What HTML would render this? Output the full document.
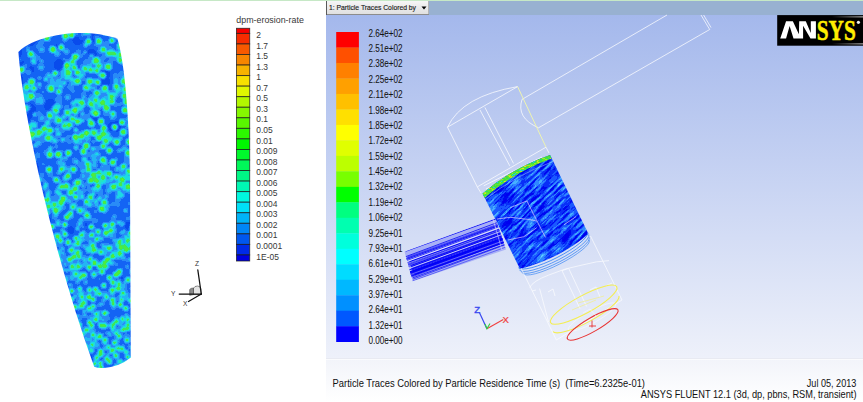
<!DOCTYPE html><html><head><meta charset="utf-8"><style>
html,body{margin:0;padding:0;background:#fff;width:863px;height:402px;overflow:hidden}
svg{display:block;position:absolute;left:0;top:0}
text{font-family:"Liberation Sans",sans-serif}
</style></head><body>
<svg width="863" height="402" viewBox="0 0 863 402">
<defs>
<linearGradient id="bg" x1="0" y1="15" x2="0" y2="359" gradientUnits="userSpaceOnUse"><stop offset="0" stop-color="#a4b8ec"/><stop offset="1" stop-color="#eef1fa"/></linearGradient>
<linearGradient id="bg2" x1="0" y1="359" x2="0" y2="402" gradientUnits="userSpaceOnUse"><stop offset="0" stop-color="#f2f4fa"/><stop offset="1" stop-color="#ffffff"/></linearGradient>
<linearGradient id="dd" x1="0" y1="0" x2="0" y2="1"><stop offset="0" stop-color="#f6f6f6"/><stop offset="1" stop-color="#dedede"/></linearGradient>
<linearGradient id="logoR" x1="0" y1="0" x2="1" y2="0"><stop offset="0" stop-color="#000"/><stop offset="1" stop-color="#777"/></linearGradient>
<clipPath id="cyl"><path d="M18.4,52 C33,36 82,26 117.4,38.7 C124,60 129,110 130,180 L130.8,357.5 Q120,366.5 104,368 Q97,368.3 94.2,366.8 C52,250 23,115 18.4,52 Z"/></clipPath>
</defs>
<rect x="0" y="0" width="863" height="1" fill="#c6e8c6"/>
<filter id="ero" x="0" y="0" width="863" height="402" filterUnits="userSpaceOnUse" color-interpolation-filters="sRGB"><feGaussianBlur stdDeviation="0.9"/><feColorMatrix type="matrix" values="1 0 0 0 0 1 0 0 0 0 1 0 0 0 0 0 0 0 0 1"/><feComponentTransfer><feFuncR type="discrete" tableValues="0.0235 0.0392 0.0784 0.1647 0.1412 0.1098 0.1490 0.2431 0.3137 0.4392"/><feFuncG type="discrete" tableValues="0.2118 0.2980 0.3922 0.5490 0.7059 0.8627 0.9020 0.9098 0.9333 0.9412"/><feFuncB type="discrete" tableValues="0.8863 0.9255 0.9569 0.9725 0.9569 0.8941 0.7529 0.3529 0.2196 0.1569"/></feComponentTransfer></filter>
<g clip-path="url(#cyl)"><g filter="url(#ero)">
<rect x="0" y="20" width="140" height="360" fill="#3f3f3f"/>
<circle cx="91.4" cy="54.6" r="5.7" fill="#212121"/>
<circle cx="55.7" cy="49.7" r="5.5" fill="#212121"/>
<circle cx="14.7" cy="177.4" r="3.2" fill="#212121"/>
<circle cx="21.3" cy="174.3" r="6.8" fill="#212121"/>
<circle cx="25.5" cy="105.9" r="6.1" fill="#212121"/>
<circle cx="128.5" cy="226.2" r="4.4" fill="#212121"/>
<circle cx="117.3" cy="128.5" r="3.7" fill="#212121"/>
<circle cx="17.8" cy="50.3" r="4.0" fill="#212121"/>
<circle cx="49.3" cy="229.1" r="4.6" fill="#212121"/>
<circle cx="119.4" cy="278.0" r="3.5" fill="#212121"/>
<circle cx="132.5" cy="70.1" r="5.1" fill="#212121"/>
<circle cx="104.6" cy="81.7" r="5.4" fill="#212121"/>
<circle cx="14.9" cy="257.2" r="5.6" fill="#212121"/>
<circle cx="84.3" cy="227.2" r="4.6" fill="#212121"/>
<circle cx="112.7" cy="126.8" r="4.9" fill="#212121"/>
<circle cx="93.6" cy="37.7" r="5.3" fill="#212121"/>
<circle cx="31.0" cy="69.8" r="3.3" fill="#212121"/>
<circle cx="106.0" cy="74.0" r="4.2" fill="#212121"/>
<circle cx="20.1" cy="182.7" r="5.4" fill="#212121"/>
<circle cx="118.0" cy="124.7" r="5.1" fill="#212121"/>
<circle cx="32.0" cy="108.9" r="4.2" fill="#212121"/>
<circle cx="70.6" cy="230.3" r="3.7" fill="#212121"/>
<circle cx="10.5" cy="172.4" r="4.7" fill="#212121"/>
<circle cx="59.9" cy="65.2" r="6.2" fill="#212121"/>
<circle cx="17.8" cy="52.9" r="4.0" fill="#212121"/>
<circle cx="16.6" cy="30.1" r="3.8" fill="#212121"/>
<circle cx="22.7" cy="153.6" r="3.1" fill="#212121"/>
<circle cx="28.6" cy="115.8" r="4.7" fill="#212121"/>
<circle cx="20.7" cy="64.7" r="4.7" fill="#212121"/>
<circle cx="30.2" cy="37.9" r="7.8" fill="#212121"/>
<circle cx="77.9" cy="39.2" r="5.6" fill="#212121"/>
<circle cx="97.0" cy="118.8" r="4.8" fill="#212121"/>
<circle cx="51.2" cy="105.8" r="7.1" fill="#212121"/>
<path d="M18.4,52 C23,115 52,250 94.2,366.8" stroke="#212121" stroke-width="2.5" fill="none"/>
<circle cx="38.3" cy="206.0" r="2.9" fill="#5b5b5b"/>
<circle cx="108.8" cy="190.6" r="2.9" fill="#757575"/>
<circle cx="129.4" cy="154.0" r="2.2" fill="#5b5b5b"/>
<circle cx="34.9" cy="332.3" r="1.4" fill="#757575"/>
<circle cx="110.1" cy="360.4" r="1.8" fill="#5b5b5b"/>
<circle cx="69.3" cy="348.7" r="1.1" fill="#757575"/>
<circle cx="11.8" cy="360.1" r="1.8" fill="#757575"/>
<circle cx="27.4" cy="365.4" r="0.9" fill="#5b5b5b"/>
<circle cx="17.6" cy="281.6" r="1.9" fill="#757575"/>
<circle cx="12.3" cy="179.6" r="2.7" fill="#5b5b5b"/>
<circle cx="120.4" cy="49.3" r="2.8" fill="#5b5b5b"/>
<circle cx="124.1" cy="180.7" r="2.4" fill="#757575"/>
<circle cx="34.9" cy="124.2" r="2.3" fill="#5b5b5b"/>
<circle cx="90.4" cy="154.5" r="3.1" fill="#5b5b5b"/>
<circle cx="37.4" cy="353.9" r="1.1" fill="#5b5b5b"/>
<circle cx="93.5" cy="106.1" r="2.1" fill="#757575"/>
<circle cx="62.7" cy="151.2" r="1.4" fill="#5b5b5b"/>
<circle cx="79.3" cy="179.8" r="2.2" fill="#5b5b5b"/>
<circle cx="46.9" cy="356.7" r="2.1" fill="#5b5b5b"/>
<circle cx="23.1" cy="120.3" r="1.9" fill="#5b5b5b"/>
<circle cx="112.4" cy="117.9" r="2.4" fill="#757575"/>
<circle cx="97.6" cy="60.4" r="1.7" fill="#757575"/>
<circle cx="121.9" cy="121.4" r="2.8" fill="#5b5b5b"/>
<circle cx="20.5" cy="321.1" r="1.6" fill="#5b5b5b"/>
<circle cx="39.8" cy="67.2" r="1.7" fill="#5b5b5b"/>
<circle cx="126.5" cy="243.7" r="1.6" fill="#5b5b5b"/>
<circle cx="12.3" cy="115.2" r="2.3" fill="#757575"/>
<circle cx="132.3" cy="204.8" r="1.4" fill="#5b5b5b"/>
<circle cx="112.4" cy="176.9" r="3.0" fill="#5b5b5b"/>
<circle cx="34.8" cy="329.9" r="1.5" fill="#5b5b5b"/>
<circle cx="53.4" cy="48.5" r="2.5" fill="#5b5b5b"/>
<circle cx="120.0" cy="176.5" r="2.8" fill="#757575"/>
<circle cx="118.8" cy="258.0" r="2.2" fill="#5b5b5b"/>
<circle cx="15.7" cy="93.0" r="1.9" fill="#5b5b5b"/>
<circle cx="130.2" cy="360.7" r="0.9" fill="#5b5b5b"/>
<circle cx="120.3" cy="104.1" r="2.1" fill="#5b5b5b"/>
<circle cx="69.3" cy="200.9" r="2.6" fill="#757575"/>
<circle cx="21.4" cy="307.8" r="1.1" fill="#757575"/>
<circle cx="12.8" cy="133.4" r="3.1" fill="#757575"/>
<circle cx="100.1" cy="198.0" r="2.4" fill="#757575"/>
<circle cx="27.4" cy="208.1" r="2.6" fill="#5b5b5b"/>
<circle cx="83.0" cy="333.6" r="1.8" fill="#757575"/>
<circle cx="40.6" cy="119.7" r="2.7" fill="#5b5b5b"/>
<circle cx="18.3" cy="280.5" r="2.3" fill="#5b5b5b"/>
<circle cx="39.3" cy="287.2" r="2.4" fill="#757575"/>
<circle cx="90.3" cy="56.3" r="2.6" fill="#5b5b5b"/>
<circle cx="96.6" cy="241.2" r="1.3" fill="#5b5b5b"/>
<circle cx="68.1" cy="188.6" r="1.6" fill="#757575"/>
<circle cx="132.3" cy="348.3" r="1.0" fill="#5b5b5b"/>
<circle cx="89.0" cy="125.1" r="1.8" fill="#5b5b5b"/>
<circle cx="122.2" cy="195.3" r="2.9" fill="#5b5b5b"/>
<circle cx="62.0" cy="157.9" r="1.4" fill="#5b5b5b"/>
<circle cx="103.8" cy="315.3" r="1.9" fill="#5b5b5b"/>
<circle cx="59.1" cy="369.6" r="1.9" fill="#5b5b5b"/>
<circle cx="104.5" cy="320.4" r="2.1" fill="#5b5b5b"/>
<circle cx="45.7" cy="348.1" r="1.5" fill="#5b5b5b"/>
<circle cx="60.0" cy="327.7" r="1.9" fill="#5b5b5b"/>
<circle cx="16.2" cy="279.0" r="2.0" fill="#5b5b5b"/>
<circle cx="25.9" cy="190.5" r="1.7" fill="#5b5b5b"/>
<circle cx="102.3" cy="252.0" r="1.6" fill="#5b5b5b"/>
<circle cx="79.7" cy="164.1" r="1.5" fill="#5b5b5b"/>
<circle cx="72.6" cy="306.0" r="2.2" fill="#5b5b5b"/>
<circle cx="134.6" cy="183.0" r="1.7" fill="#5b5b5b"/>
<circle cx="31.8" cy="219.0" r="1.7" fill="#5b5b5b"/>
<circle cx="81.2" cy="331.7" r="1.5" fill="#5b5b5b"/>
<circle cx="103.2" cy="101.4" r="2.3" fill="#5b5b5b"/>
<circle cx="21.6" cy="334.9" r="1.5" fill="#757575"/>
<circle cx="41.1" cy="67.1" r="3.1" fill="#757575"/>
<circle cx="115.8" cy="334.3" r="1.0" fill="#5b5b5b"/>
<circle cx="25.7" cy="223.6" r="1.7" fill="#757575"/>
<circle cx="97.3" cy="68.1" r="3.1" fill="#757575"/>
<circle cx="40.3" cy="208.9" r="2.8" fill="#5b5b5b"/>
<circle cx="98.1" cy="134.5" r="3.0" fill="#5b5b5b"/>
<circle cx="90.9" cy="57.6" r="3.1" fill="#5b5b5b"/>
<circle cx="62.6" cy="262.1" r="2.2" fill="#5b5b5b"/>
<circle cx="49.0" cy="308.8" r="1.4" fill="#5b5b5b"/>
<circle cx="86.3" cy="334.8" r="1.0" fill="#757575"/>
<circle cx="84.4" cy="343.5" r="2.1" fill="#5b5b5b"/>
<circle cx="27.7" cy="47.6" r="2.2" fill="#5b5b5b"/>
<circle cx="99.0" cy="136.8" r="3.1" fill="#5b5b5b"/>
<circle cx="53.9" cy="354.9" r="1.4" fill="#5b5b5b"/>
<circle cx="21.0" cy="269.8" r="2.4" fill="#757575"/>
<circle cx="105.8" cy="43.8" r="2.8" fill="#5b5b5b"/>
<circle cx="17.8" cy="96.3" r="2.0" fill="#757575"/>
<circle cx="44.0" cy="355.6" r="1.8" fill="#5b5b5b"/>
<circle cx="96.2" cy="344.2" r="1.9" fill="#757575"/>
<circle cx="124.6" cy="245.6" r="2.4" fill="#5b5b5b"/>
<circle cx="23.4" cy="273.3" r="2.2" fill="#5b5b5b"/>
<circle cx="124.2" cy="307.0" r="1.3" fill="#5b5b5b"/>
<circle cx="106.6" cy="236.5" r="1.9" fill="#5b5b5b"/>
<circle cx="59.0" cy="84.4" r="1.5" fill="#757575"/>
<circle cx="120.4" cy="365.9" r="1.1" fill="#5b5b5b"/>
<circle cx="46.7" cy="125.0" r="2.7" fill="#5b5b5b"/>
<circle cx="29.2" cy="330.6" r="1.1" fill="#5b5b5b"/>
<circle cx="91.2" cy="64.2" r="1.6" fill="#5b5b5b"/>
<circle cx="124.3" cy="43.7" r="1.5" fill="#5b5b5b"/>
<circle cx="85.1" cy="311.5" r="1.5" fill="#5b5b5b"/>
<circle cx="118.3" cy="182.7" r="2.9" fill="#757575"/>
<circle cx="37.2" cy="155.4" r="3.2" fill="#5b5b5b"/>
<circle cx="111.8" cy="308.4" r="1.3" fill="#5b5b5b"/>
<circle cx="78.5" cy="51.5" r="2.6" fill="#5b5b5b"/>
<circle cx="59.7" cy="122.2" r="2.0" fill="#757575"/>
<circle cx="134.6" cy="153.7" r="2.1" fill="#757575"/>
<circle cx="127.7" cy="177.6" r="2.7" fill="#5b5b5b"/>
<circle cx="60.8" cy="330.2" r="1.1" fill="#5b5b5b"/>
<circle cx="102.2" cy="88.4" r="2.3" fill="#5b5b5b"/>
<circle cx="110.6" cy="358.7" r="1.9" fill="#5b5b5b"/>
<circle cx="15.4" cy="340.4" r="2.1" fill="#757575"/>
<circle cx="58.5" cy="337.4" r="1.8" fill="#5b5b5b"/>
<circle cx="117.1" cy="241.2" r="2.5" fill="#5b5b5b"/>
<circle cx="74.7" cy="160.4" r="3.1" fill="#5b5b5b"/>
<circle cx="112.0" cy="95.5" r="1.5" fill="#757575"/>
<circle cx="78.8" cy="243.2" r="1.7" fill="#5b5b5b"/>
<circle cx="72.9" cy="90.8" r="2.2" fill="#5b5b5b"/>
<circle cx="114.6" cy="305.6" r="1.2" fill="#5b5b5b"/>
<circle cx="20.3" cy="279.4" r="1.2" fill="#757575"/>
<circle cx="104.0" cy="334.3" r="1.0" fill="#5b5b5b"/>
<circle cx="95.8" cy="275.2" r="2.0" fill="#5b5b5b"/>
<circle cx="123.1" cy="185.2" r="1.7" fill="#5b5b5b"/>
<circle cx="42.9" cy="202.0" r="1.6" fill="#5b5b5b"/>
<circle cx="60.4" cy="246.4" r="2.5" fill="#5b5b5b"/>
<circle cx="31.1" cy="296.9" r="1.1" fill="#757575"/>
<circle cx="117.3" cy="358.5" r="1.6" fill="#757575"/>
<circle cx="43.1" cy="366.8" r="1.3" fill="#5b5b5b"/>
<circle cx="126.1" cy="334.5" r="1.0" fill="#757575"/>
<circle cx="74.1" cy="334.5" r="1.7" fill="#5b5b5b"/>
<circle cx="48.0" cy="207.9" r="2.2" fill="#5b5b5b"/>
<circle cx="69.4" cy="75.8" r="2.7" fill="#5b5b5b"/>
<circle cx="66.4" cy="51.6" r="2.8" fill="#757575"/>
<circle cx="60.2" cy="119.8" r="2.9" fill="#757575"/>
<circle cx="85.2" cy="206.0" r="2.7" fill="#5b5b5b"/>
<circle cx="15.5" cy="210.7" r="1.5" fill="#5b5b5b"/>
<circle cx="92.1" cy="97.1" r="2.5" fill="#757575"/>
<circle cx="31.8" cy="135.2" r="3.2" fill="#5b5b5b"/>
<circle cx="100.5" cy="192.5" r="2.7" fill="#5b5b5b"/>
<circle cx="66.6" cy="106.8" r="2.6" fill="#5b5b5b"/>
<circle cx="127.9" cy="119.5" r="2.4" fill="#757575"/>
<circle cx="37.1" cy="329.2" r="2.1" fill="#5b5b5b"/>
<circle cx="115.2" cy="98.9" r="1.7" fill="#5b5b5b"/>
<circle cx="76.3" cy="32.2" r="1.8" fill="#757575"/>
<circle cx="120.6" cy="298.3" r="1.2" fill="#757575"/>
<circle cx="123.8" cy="79.2" r="2.5" fill="#5b5b5b"/>
<circle cx="30.2" cy="362.3" r="1.0" fill="#5b5b5b"/>
<circle cx="121.4" cy="52.4" r="3.1" fill="#757575"/>
<circle cx="23.4" cy="99.9" r="3.1" fill="#5b5b5b"/>
<circle cx="123.9" cy="286.3" r="2.0" fill="#757575"/>
<circle cx="69.6" cy="75.1" r="1.8" fill="#757575"/>
<circle cx="49.9" cy="174.1" r="3.0" fill="#5b5b5b"/>
<circle cx="16.1" cy="288.3" r="1.8" fill="#757575"/>
<circle cx="116.4" cy="240.2" r="1.2" fill="#5b5b5b"/>
<circle cx="64.5" cy="208.0" r="1.3" fill="#5b5b5b"/>
<circle cx="33.1" cy="198.2" r="1.7" fill="#757575"/>
<circle cx="128.0" cy="126.5" r="1.8" fill="#757575"/>
<circle cx="30.7" cy="349.2" r="1.9" fill="#5b5b5b"/>
<circle cx="13.1" cy="100.1" r="2.3" fill="#757575"/>
<circle cx="57.4" cy="330.6" r="1.1" fill="#5b5b5b"/>
<circle cx="84.3" cy="264.3" r="1.6" fill="#5b5b5b"/>
<circle cx="50.8" cy="82.8" r="2.4" fill="#757575"/>
<circle cx="90.3" cy="266.8" r="1.6" fill="#5b5b5b"/>
<circle cx="97.9" cy="316.8" r="2.3" fill="#5b5b5b"/>
<circle cx="39.5" cy="355.0" r="2.1" fill="#757575"/>
<circle cx="30.6" cy="253.7" r="2.6" fill="#5b5b5b"/>
<circle cx="34.5" cy="246.9" r="2.5" fill="#5b5b5b"/>
<circle cx="90.9" cy="317.6" r="2.2" fill="#757575"/>
<circle cx="94.9" cy="248.1" r="1.6" fill="#5b5b5b"/>
<circle cx="97.6" cy="334.2" r="1.9" fill="#5b5b5b"/>
<circle cx="88.7" cy="115.0" r="1.4" fill="#5b5b5b"/>
<circle cx="119.1" cy="334.1" r="1.5" fill="#5b5b5b"/>
<circle cx="71.2" cy="361.4" r="1.2" fill="#757575"/>
<circle cx="99.5" cy="353.5" r="1.0" fill="#5b5b5b"/>
<circle cx="36.3" cy="262.7" r="2.2" fill="#5b5b5b"/>
<circle cx="86.8" cy="246.8" r="1.8" fill="#5b5b5b"/>
<circle cx="59.0" cy="102.1" r="2.9" fill="#5b5b5b"/>
<circle cx="89.3" cy="189.5" r="2.7" fill="#5b5b5b"/>
<circle cx="105.0" cy="250.9" r="1.7" fill="#5b5b5b"/>
<circle cx="41.7" cy="174.9" r="2.7" fill="#5b5b5b"/>
<circle cx="20.7" cy="335.0" r="2.0" fill="#5b5b5b"/>
<circle cx="89.1" cy="35.1" r="2.6" fill="#5b5b5b"/>
<circle cx="41.3" cy="64.5" r="1.7" fill="#5b5b5b"/>
<circle cx="66.5" cy="296.9" r="2.1" fill="#5b5b5b"/>
<circle cx="31.0" cy="333.0" r="1.8" fill="#5b5b5b"/>
<circle cx="34.7" cy="265.5" r="2.4" fill="#757575"/>
<circle cx="93.9" cy="69.8" r="1.8" fill="#5b5b5b"/>
<circle cx="27.4" cy="197.6" r="2.8" fill="#5b5b5b"/>
<circle cx="97.6" cy="113.8" r="3.0" fill="#757575"/>
<circle cx="10.8" cy="315.9" r="1.7" fill="#757575"/>
<circle cx="47.1" cy="188.4" r="1.4" fill="#757575"/>
<circle cx="89.6" cy="246.3" r="1.2" fill="#757575"/>
<circle cx="102.1" cy="369.7" r="1.5" fill="#5b5b5b"/>
<circle cx="70.6" cy="335.2" r="1.5" fill="#757575"/>
<circle cx="54.4" cy="197.9" r="2.7" fill="#5b5b5b"/>
<circle cx="24.7" cy="95.4" r="2.5" fill="#5b5b5b"/>
<circle cx="89.4" cy="296.6" r="1.8" fill="#757575"/>
<circle cx="69.4" cy="290.4" r="2.3" fill="#757575"/>
<circle cx="105.3" cy="64.5" r="2.2" fill="#5b5b5b"/>
<circle cx="22.6" cy="346.4" r="1.9" fill="#5b5b5b"/>
<circle cx="80.3" cy="117.7" r="1.5" fill="#5b5b5b"/>
<circle cx="113.1" cy="293.1" r="2.3" fill="#757575"/>
<circle cx="69.4" cy="170.2" r="2.2" fill="#757575"/>
<circle cx="122.0" cy="243.1" r="2.2" fill="#5b5b5b"/>
<circle cx="25.2" cy="358.6" r="1.1" fill="#5b5b5b"/>
<circle cx="12.2" cy="274.6" r="2.2" fill="#757575"/>
<circle cx="16.6" cy="40.9" r="2.6" fill="#757575"/>
<circle cx="87.3" cy="162.2" r="1.7" fill="#757575"/>
<circle cx="117.6" cy="195.4" r="2.9" fill="#5b5b5b"/>
<circle cx="101.0" cy="189.7" r="1.9" fill="#5b5b5b"/>
<circle cx="90.6" cy="244.1" r="2.4" fill="#5b5b5b"/>
<circle cx="66.6" cy="122.5" r="1.9" fill="#5b5b5b"/>
<circle cx="17.6" cy="361.1" r="1.3" fill="#757575"/>
<circle cx="85.7" cy="362.3" r="1.9" fill="#757575"/>
<circle cx="83.1" cy="362.0" r="1.7" fill="#5b5b5b"/>
<circle cx="85.2" cy="334.7" r="1.8" fill="#5b5b5b"/>
<circle cx="50.2" cy="121.1" r="1.9" fill="#5b5b5b"/>
<circle cx="28.4" cy="361.6" r="1.7" fill="#757575"/>
<circle cx="124.2" cy="147.9" r="2.3" fill="#757575"/>
<circle cx="132.8" cy="135.2" r="2.2" fill="#5b5b5b"/>
<circle cx="109.0" cy="186.3" r="2.6" fill="#5b5b5b"/>
<circle cx="83.7" cy="94.3" r="2.9" fill="#5b5b5b"/>
<circle cx="46.2" cy="226.5" r="2.6" fill="#757575"/>
<circle cx="40.8" cy="343.7" r="1.4" fill="#5b5b5b"/>
<circle cx="21.8" cy="99.6" r="2.3" fill="#757575"/>
<circle cx="63.2" cy="351.8" r="2.1" fill="#757575"/>
<circle cx="41.7" cy="42.9" r="2.1" fill="#5b5b5b"/>
<circle cx="121.9" cy="323.4" r="1.9" fill="#5b5b5b"/>
<circle cx="21.2" cy="138.4" r="3.1" fill="#5b5b5b"/>
<circle cx="127.4" cy="260.1" r="1.8" fill="#757575"/>
<circle cx="91.6" cy="190.0" r="1.5" fill="#5b5b5b"/>
<circle cx="70.2" cy="87.3" r="3.0" fill="#5b5b5b"/>
<circle cx="125.7" cy="160.9" r="2.2" fill="#5b5b5b"/>
<circle cx="52.5" cy="309.8" r="1.5" fill="#757575"/>
<circle cx="51.5" cy="280.3" r="1.9" fill="#5b5b5b"/>
<circle cx="28.1" cy="326.0" r="1.3" fill="#5b5b5b"/>
<circle cx="13.2" cy="224.1" r="1.6" fill="#5b5b5b"/>
<circle cx="108.5" cy="344.6" r="1.1" fill="#5b5b5b"/>
<circle cx="104.4" cy="360.0" r="2.1" fill="#5b5b5b"/>
<circle cx="122.0" cy="49.5" r="1.7" fill="#5b5b5b"/>
<circle cx="90.0" cy="180.3" r="1.6" fill="#757575"/>
<circle cx="10.2" cy="313.0" r="1.5" fill="#5b5b5b"/>
<circle cx="32.6" cy="316.7" r="1.9" fill="#5b5b5b"/>
<circle cx="34.6" cy="57.0" r="2.7" fill="#757575"/>
<circle cx="105.2" cy="89.6" r="2.7" fill="#757575"/>
<circle cx="111.4" cy="228.2" r="2.3" fill="#5b5b5b"/>
<circle cx="89.9" cy="351.5" r="2.0" fill="#5b5b5b"/>
<circle cx="69.6" cy="326.5" r="1.7" fill="#5b5b5b"/>
<circle cx="133.2" cy="42.5" r="2.5" fill="#757575"/>
<circle cx="10.6" cy="206.7" r="1.4" fill="#757575"/>
<circle cx="82.0" cy="335.3" r="2.2" fill="#5b5b5b"/>
<circle cx="71.9" cy="204.5" r="1.5" fill="#757575"/>
<circle cx="31.0" cy="136.1" r="1.4" fill="#5b5b5b"/>
<circle cx="125.8" cy="281.2" r="2.0" fill="#757575"/>
<circle cx="68.0" cy="111.0" r="3.0" fill="#5b5b5b"/>
<circle cx="99.6" cy="45.4" r="2.5" fill="#5b5b5b"/>
<circle cx="105.2" cy="67.4" r="2.4" fill="#5b5b5b"/>
<circle cx="84.6" cy="234.9" r="2.4" fill="#5b5b5b"/>
<circle cx="52.3" cy="111.7" r="2.9" fill="#5b5b5b"/>
<circle cx="80.6" cy="365.2" r="1.9" fill="#5b5b5b"/>
<circle cx="107.1" cy="348.6" r="1.0" fill="#5b5b5b"/>
<circle cx="87.7" cy="115.2" r="1.8" fill="#5b5b5b"/>
<circle cx="125.1" cy="336.5" r="1.6" fill="#757575"/>
<circle cx="28.6" cy="72.1" r="3.0" fill="#5b5b5b"/>
<circle cx="96.9" cy="105.3" r="2.7" fill="#757575"/>
<circle cx="68.6" cy="135.6" r="1.7" fill="#5b5b5b"/>
<circle cx="78.2" cy="359.7" r="1.1" fill="#5b5b5b"/>
<circle cx="43.7" cy="328.6" r="2.0" fill="#5b5b5b"/>
<circle cx="65.0" cy="280.0" r="2.5" fill="#5b5b5b"/>
<circle cx="94.7" cy="347.5" r="1.4" fill="#757575"/>
<circle cx="25.9" cy="326.1" r="1.7" fill="#757575"/>
<circle cx="72.2" cy="357.3" r="1.9" fill="#5b5b5b"/>
<circle cx="44.9" cy="241.3" r="2.2" fill="#5b5b5b"/>
<circle cx="10.8" cy="283.6" r="1.7" fill="#5b5b5b"/>
<circle cx="33.0" cy="133.4" r="2.1" fill="#757575"/>
<circle cx="39.0" cy="309.4" r="2.1" fill="#757575"/>
<circle cx="123.8" cy="33.6" r="3.0" fill="#757575"/>
<circle cx="47.5" cy="212.4" r="2.9" fill="#757575"/>
<circle cx="53.9" cy="352.3" r="1.2" fill="#757575"/>
<circle cx="126.1" cy="82.4" r="2.3" fill="#5b5b5b"/>
<circle cx="113.3" cy="204.3" r="2.4" fill="#5b5b5b"/>
<circle cx="62.6" cy="83.2" r="1.8" fill="#757575"/>
<circle cx="121.6" cy="170.2" r="2.4" fill="#757575"/>
<circle cx="54.1" cy="367.9" r="1.7" fill="#5b5b5b"/>
<circle cx="79.1" cy="341.8" r="1.7" fill="#5b5b5b"/>
<circle cx="93.5" cy="96.9" r="2.4" fill="#757575"/>
<circle cx="118.9" cy="334.5" r="1.7" fill="#5b5b5b"/>
<circle cx="61.4" cy="71.3" r="1.6" fill="#757575"/>
<circle cx="50.4" cy="273.3" r="1.2" fill="#5b5b5b"/>
<circle cx="17.9" cy="95.2" r="1.5" fill="#5b5b5b"/>
<circle cx="49.3" cy="335.6" r="1.5" fill="#5b5b5b"/>
<circle cx="83.1" cy="170.6" r="2.2" fill="#757575"/>
<circle cx="109.1" cy="112.8" r="2.1" fill="#5b5b5b"/>
<circle cx="11.0" cy="330.0" r="1.1" fill="#5b5b5b"/>
<circle cx="53.9" cy="113.3" r="2.0" fill="#5b5b5b"/>
<circle cx="64.4" cy="124.9" r="1.8" fill="#5b5b5b"/>
<circle cx="26.2" cy="96.7" r="2.4" fill="#5b5b5b"/>
<circle cx="68.4" cy="300.3" r="1.5" fill="#5b5b5b"/>
<circle cx="36.0" cy="353.3" r="1.9" fill="#5b5b5b"/>
<circle cx="25.7" cy="285.2" r="1.8" fill="#5b5b5b"/>
<circle cx="43.8" cy="292.4" r="2.1" fill="#757575"/>
<circle cx="96.8" cy="293.9" r="2.0" fill="#5b5b5b"/>
<circle cx="23.6" cy="221.1" r="2.4" fill="#757575"/>
<circle cx="34.1" cy="274.4" r="1.3" fill="#5b5b5b"/>
<circle cx="54.0" cy="243.8" r="1.6" fill="#5b5b5b"/>
<circle cx="86.1" cy="104.5" r="1.5" fill="#5b5b5b"/>
<circle cx="30.3" cy="97.3" r="2.7" fill="#5b5b5b"/>
<circle cx="80.6" cy="107.4" r="1.9" fill="#757575"/>
<circle cx="64.4" cy="262.7" r="1.3" fill="#5b5b5b"/>
<circle cx="105.5" cy="252.8" r="2.1" fill="#757575"/>
<circle cx="15.9" cy="113.1" r="1.8" fill="#5b5b5b"/>
<circle cx="124.3" cy="284.8" r="2.1" fill="#757575"/>
<circle cx="134.8" cy="239.2" r="1.3" fill="#757575"/>
<circle cx="88.5" cy="183.9" r="1.7" fill="#757575"/>
<circle cx="113.1" cy="220.1" r="2.8" fill="#5b5b5b"/>
<circle cx="89.7" cy="214.9" r="1.5" fill="#5b5b5b"/>
<circle cx="70.3" cy="269.9" r="1.8" fill="#757575"/>
<circle cx="127.0" cy="149.5" r="1.7" fill="#757575"/>
<circle cx="78.5" cy="288.6" r="1.3" fill="#757575"/>
<circle cx="132.4" cy="315.4" r="1.2" fill="#5b5b5b"/>
<circle cx="46.2" cy="152.6" r="3.0" fill="#5b5b5b"/>
<circle cx="130.4" cy="84.8" r="2.1" fill="#757575"/>
<circle cx="31.0" cy="54.4" r="1.6" fill="#5b5b5b"/>
<circle cx="99.6" cy="363.3" r="1.7" fill="#5b5b5b"/>
<circle cx="50.2" cy="152.2" r="2.5" fill="#5b5b5b"/>
<circle cx="126.9" cy="251.9" r="1.3" fill="#5b5b5b"/>
<circle cx="75.7" cy="334.5" r="1.9" fill="#5b5b5b"/>
<circle cx="113.8" cy="282.4" r="2.0" fill="#5b5b5b"/>
<circle cx="54.5" cy="108.3" r="2.9" fill="#5b5b5b"/>
<circle cx="41.7" cy="49.6" r="3.1" fill="#757575"/>
<circle cx="135.0" cy="167.1" r="2.2" fill="#5b5b5b"/>
<circle cx="72.4" cy="83.5" r="2.5" fill="#757575"/>
<circle cx="27.7" cy="107.3" r="3.1" fill="#757575"/>
<circle cx="33.9" cy="275.8" r="2.3" fill="#757575"/>
<circle cx="108.4" cy="174.7" r="1.4" fill="#757575"/>
<circle cx="98.8" cy="332.8" r="1.8" fill="#5b5b5b"/>
<circle cx="113.3" cy="337.4" r="1.0" fill="#5b5b5b"/>
<circle cx="110.5" cy="259.6" r="1.3" fill="#5b5b5b"/>
<circle cx="130.2" cy="240.8" r="2.3" fill="#5b5b5b"/>
<circle cx="27.1" cy="324.2" r="1.0" fill="#757575"/>
<circle cx="80.6" cy="164.8" r="3.1" fill="#5b5b5b"/>
<circle cx="35.4" cy="284.9" r="2.0" fill="#5b5b5b"/>
<circle cx="80.9" cy="319.5" r="1.2" fill="#5b5b5b"/>
<circle cx="128.5" cy="243.0" r="1.3" fill="#757575"/>
<circle cx="113.8" cy="163.3" r="2.4" fill="#5b5b5b"/>
<circle cx="11.9" cy="232.1" r="1.4" fill="#5b5b5b"/>
<circle cx="26.9" cy="338.9" r="1.7" fill="#5b5b5b"/>
<circle cx="124.7" cy="326.1" r="2.1" fill="#757575"/>
<circle cx="110.5" cy="280.3" r="1.3" fill="#5b5b5b"/>
<circle cx="24.1" cy="344.6" r="1.4" fill="#5b5b5b"/>
<circle cx="65.0" cy="299.0" r="2.1" fill="#5b5b5b"/>
<circle cx="33.2" cy="218.4" r="2.3" fill="#757575"/>
<circle cx="114.5" cy="230.0" r="2.4" fill="#757575"/>
<circle cx="43.6" cy="181.0" r="2.2" fill="#5b5b5b"/>
<circle cx="96.6" cy="182.5" r="2.2" fill="#757575"/>
<circle cx="55.1" cy="209.6" r="2.2" fill="#5b5b5b"/>
<circle cx="133.3" cy="45.4" r="1.7" fill="#757575"/>
<circle cx="122.8" cy="62.4" r="2.5" fill="#5b5b5b"/>
<circle cx="53.8" cy="217.3" r="2.4" fill="#5b5b5b"/>
<circle cx="94.0" cy="330.4" r="1.4" fill="#757575"/>
<circle cx="47.8" cy="87.4" r="2.7" fill="#5b5b5b"/>
<circle cx="130.7" cy="55.0" r="2.5" fill="#5b5b5b"/>
<circle cx="125.2" cy="315.1" r="1.4" fill="#5b5b5b"/>
<circle cx="42.2" cy="37.8" r="1.8" fill="#5b5b5b"/>
<circle cx="22.4" cy="112.2" r="2.5" fill="#5b5b5b"/>
<circle cx="52.6" cy="76.5" r="2.6" fill="#757575"/>
<circle cx="11.9" cy="139.8" r="2.0" fill="#5b5b5b"/>
<circle cx="103.7" cy="250.6" r="2.4" fill="#757575"/>
<circle cx="98.8" cy="313.9" r="1.2" fill="#5b5b5b"/>
<circle cx="27.8" cy="290.8" r="1.7" fill="#5b5b5b"/>
<circle cx="105.4" cy="293.8" r="2.4" fill="#757575"/>
<circle cx="66.6" cy="124.6" r="1.6" fill="#5b5b5b"/>
<circle cx="38.5" cy="287.2" r="1.9" fill="#5b5b5b"/>
<circle cx="25.3" cy="214.7" r="1.7" fill="#5b5b5b"/>
<circle cx="65.2" cy="322.3" r="2.2" fill="#5b5b5b"/>
<circle cx="13.3" cy="254.4" r="2.5" fill="#757575"/>
<circle cx="94.3" cy="149.2" r="2.1" fill="#5b5b5b"/>
<circle cx="124.9" cy="351.3" r="1.0" fill="#5b5b5b"/>
<circle cx="12.6" cy="271.1" r="1.4" fill="#5b5b5b"/>
<circle cx="104.9" cy="248.5" r="1.5" fill="#5b5b5b"/>
<circle cx="70.7" cy="332.9" r="1.7" fill="#757575"/>
<circle cx="129.6" cy="102.1" r="2.9" fill="#5b5b5b"/>
<circle cx="64.9" cy="177.8" r="2.5" fill="#5b5b5b"/>
<circle cx="26.7" cy="132.9" r="1.6" fill="#5b5b5b"/>
<circle cx="31.1" cy="262.1" r="2.1" fill="#5b5b5b"/>
<circle cx="93.2" cy="164.9" r="2.4" fill="#5b5b5b"/>
<circle cx="35.2" cy="243.3" r="1.9" fill="#5b5b5b"/>
<circle cx="39.0" cy="176.4" r="1.4" fill="#5b5b5b"/>
<circle cx="121.8" cy="51.9" r="3.1" fill="#5b5b5b"/>
<circle cx="116.6" cy="360.5" r="1.2" fill="#5b5b5b"/>
<circle cx="32.2" cy="120.0" r="1.8" fill="#5b5b5b"/>
<circle cx="43.4" cy="140.7" r="2.4" fill="#5b5b5b"/>
<circle cx="78.6" cy="264.7" r="2.2" fill="#757575"/>
<circle cx="131.6" cy="161.6" r="2.8" fill="#5b5b5b"/>
<circle cx="122.3" cy="245.9" r="2.6" fill="#757575"/>
<circle cx="40.1" cy="97.5" r="2.8" fill="#757575"/>
<circle cx="123.6" cy="46.8" r="2.6" fill="#5b5b5b"/>
<circle cx="65.3" cy="257.1" r="1.2" fill="#757575"/>
<circle cx="103.3" cy="320.2" r="1.7" fill="#757575"/>
<circle cx="118.7" cy="150.8" r="1.9" fill="#757575"/>
<circle cx="92.5" cy="310.9" r="1.9" fill="#757575"/>
<circle cx="125.5" cy="290.2" r="2.3" fill="#5b5b5b"/>
<circle cx="55.5" cy="99.6" r="1.8" fill="#5b5b5b"/>
<circle cx="31.5" cy="309.4" r="2.3" fill="#757575"/>
<circle cx="117.0" cy="251.7" r="1.7" fill="#5b5b5b"/>
<circle cx="114.0" cy="308.0" r="2.0" fill="#5b5b5b"/>
<circle cx="44.4" cy="128.8" r="2.2" fill="#5b5b5b"/>
<circle cx="28.7" cy="261.3" r="2.1" fill="#757575"/>
<circle cx="41.6" cy="219.1" r="1.3" fill="#5b5b5b"/>
<circle cx="32.3" cy="274.2" r="1.5" fill="#5b5b5b"/>
<circle cx="71.7" cy="60.2" r="2.5" fill="#5b5b5b"/>
<circle cx="55.9" cy="272.3" r="1.7" fill="#5b5b5b"/>
<circle cx="85.9" cy="117.3" r="1.6" fill="#757575"/>
<circle cx="87.3" cy="362.4" r="1.3" fill="#757575"/>
<circle cx="93.2" cy="142.0" r="2.1" fill="#5b5b5b"/>
<circle cx="65.0" cy="197.0" r="2.4" fill="#5b5b5b"/>
<circle cx="102.6" cy="166.6" r="1.9" fill="#757575"/>
<circle cx="21.3" cy="318.3" r="1.1" fill="#5b5b5b"/>
<circle cx="21.0" cy="286.1" r="2.2" fill="#5b5b5b"/>
<circle cx="27.5" cy="168.4" r="1.6" fill="#757575"/>
<circle cx="51.8" cy="206.2" r="1.7" fill="#757575"/>
<circle cx="42.8" cy="136.4" r="2.4" fill="#5b5b5b"/>
<circle cx="73.9" cy="172.9" r="1.8" fill="#5b5b5b"/>
<circle cx="48.1" cy="74.8" r="2.1" fill="#757575"/>
<circle cx="68.0" cy="196.3" r="2.8" fill="#5b5b5b"/>
<circle cx="93.0" cy="277.9" r="1.7" fill="#5b5b5b"/>
<circle cx="16.1" cy="323.3" r="1.6" fill="#757575"/>
<circle cx="103.6" cy="302.7" r="1.2" fill="#5b5b5b"/>
<circle cx="124.7" cy="100.3" r="1.8" fill="#5b5b5b"/>
<circle cx="104.8" cy="327.4" r="1.7" fill="#757575"/>
<circle cx="29.2" cy="340.0" r="1.1" fill="#5b5b5b"/>
<circle cx="109.9" cy="363.2" r="1.3" fill="#5b5b5b"/>
<circle cx="29.5" cy="129.0" r="1.6" fill="#757575"/>
<circle cx="68.1" cy="277.6" r="1.7" fill="#757575"/>
<circle cx="14.9" cy="149.6" r="3.2" fill="#5b5b5b"/>
<circle cx="127.4" cy="209.0" r="1.3" fill="#5b5b5b"/>
<circle cx="35.1" cy="125.2" r="2.4" fill="#757575"/>
<circle cx="121.6" cy="317.4" r="1.1" fill="#5b5b5b"/>
<circle cx="84.8" cy="358.9" r="1.7" fill="#5b5b5b"/>
<circle cx="16.3" cy="143.3" r="2.0" fill="#5b5b5b"/>
<circle cx="103.4" cy="68.4" r="2.2" fill="#5b5b5b"/>
<circle cx="14.2" cy="204.5" r="2.4" fill="#757575"/>
<circle cx="61.9" cy="314.6" r="1.9" fill="#757575"/>
<circle cx="70.0" cy="80.7" r="1.6" fill="#5b5b5b"/>
<circle cx="72.0" cy="212.2" r="1.7" fill="#5b5b5b"/>
<circle cx="133.5" cy="338.9" r="1.6" fill="#757575"/>
<circle cx="96.1" cy="107.9" r="2.9" fill="#5b5b5b"/>
<circle cx="23.7" cy="223.7" r="2.1" fill="#757575"/>
<circle cx="98.8" cy="51.1" r="2.0" fill="#757575"/>
<circle cx="31.8" cy="133.2" r="2.5" fill="#5b5b5b"/>
<circle cx="32.9" cy="137.9" r="1.5" fill="#5b5b5b"/>
<circle cx="35.5" cy="344.5" r="2.1" fill="#757575"/>
<circle cx="134.7" cy="299.1" r="1.8" fill="#5b5b5b"/>
<circle cx="17.8" cy="324.7" r="2.0" fill="#5b5b5b"/>
<circle cx="21.5" cy="273.9" r="2.3" fill="#5b5b5b"/>
<circle cx="42.4" cy="265.9" r="2.2" fill="#5b5b5b"/>
<circle cx="76.5" cy="351.6" r="1.8" fill="#5b5b5b"/>
<circle cx="80.2" cy="328.4" r="2.1" fill="#757575"/>
<circle cx="88.3" cy="293.1" r="1.6" fill="#5b5b5b"/>
<circle cx="115.6" cy="240.6" r="2.7" fill="#5b5b5b"/>
<circle cx="33.4" cy="332.4" r="2.0" fill="#757575"/>
<circle cx="25.1" cy="262.2" r="1.7" fill="#5b5b5b"/>
<circle cx="51.6" cy="81.3" r="3.0" fill="#5b5b5b"/>
<circle cx="86.3" cy="333.9" r="1.4" fill="#5b5b5b"/>
<circle cx="117.1" cy="359.2" r="0.9" fill="#5b5b5b"/>
<circle cx="31.9" cy="351.3" r="1.2" fill="#757575"/>
<circle cx="117.8" cy="204.7" r="2.4" fill="#5b5b5b"/>
<circle cx="94.6" cy="338.4" r="1.8" fill="#5b5b5b"/>
<circle cx="67.4" cy="352.4" r="2.1" fill="#5b5b5b"/>
<circle cx="103.4" cy="248.1" r="1.6" fill="#5b5b5b"/>
<circle cx="57.6" cy="357.4" r="2.0" fill="#757575"/>
<circle cx="50.5" cy="313.4" r="2.1" fill="#5b5b5b"/>
<circle cx="53.4" cy="77.6" r="1.7" fill="#5b5b5b"/>
<circle cx="102.3" cy="88.0" r="2.5" fill="#5b5b5b"/>
<circle cx="131.4" cy="294.2" r="1.3" fill="#757575"/>
<circle cx="48.7" cy="350.9" r="2.0" fill="#5b5b5b"/>
<circle cx="60.4" cy="261.7" r="1.7" fill="#5b5b5b"/>
<circle cx="130.4" cy="120.7" r="2.2" fill="#757575"/>
<circle cx="114.6" cy="246.6" r="1.2" fill="#5b5b5b"/>
<circle cx="116.0" cy="170.0" r="2.0" fill="#5b5b5b"/>
<circle cx="124.7" cy="210.0" r="1.5" fill="#757575"/>
<circle cx="126.3" cy="86.4" r="2.5" fill="#757575"/>
<circle cx="96.5" cy="293.4" r="2.2" fill="#757575"/>
<circle cx="60.0" cy="199.9" r="2.5" fill="#5b5b5b"/>
<circle cx="27.9" cy="280.1" r="1.3" fill="#5b5b5b"/>
<circle cx="72.8" cy="319.7" r="1.6" fill="#757575"/>
<circle cx="36.7" cy="277.8" r="2.2" fill="#757575"/>
<circle cx="91.1" cy="328.7" r="2.1" fill="#757575"/>
<circle cx="58.0" cy="334.7" r="1.7" fill="#757575"/>
<circle cx="121.0" cy="56.7" r="1.5" fill="#757575"/>
<circle cx="114.8" cy="140.5" r="2.8" fill="#757575"/>
<circle cx="83.8" cy="232.5" r="2.5" fill="#757575"/>
<circle cx="37.2" cy="299.8" r="1.8" fill="#757575"/>
<circle cx="13.8" cy="294.6" r="1.4" fill="#757575"/>
<circle cx="56.8" cy="354.5" r="1.6" fill="#5b5b5b"/>
<circle cx="60.0" cy="204.1" r="2.4" fill="#5b5b5b"/>
<circle cx="120.2" cy="48.6" r="2.0" fill="#757575"/>
<circle cx="133.3" cy="54.3" r="2.2" fill="#5b5b5b"/>
<circle cx="131.1" cy="329.3" r="1.4" fill="#5b5b5b"/>
<circle cx="34.3" cy="280.2" r="2.2" fill="#5b5b5b"/>
<circle cx="47.0" cy="297.3" r="2.0" fill="#757575"/>
<circle cx="99.9" cy="51.3" r="2.9" fill="#5b5b5b"/>
<circle cx="49.5" cy="150.6" r="1.7" fill="#757575"/>
<circle cx="54.4" cy="335.7" r="1.9" fill="#5b5b5b"/>
<circle cx="52.9" cy="321.8" r="1.6" fill="#5b5b5b"/>
<circle cx="20.3" cy="144.8" r="2.9" fill="#5b5b5b"/>
<circle cx="76.0" cy="115.4" r="1.9" fill="#5b5b5b"/>
<circle cx="12.7" cy="339.0" r="1.5" fill="#757575"/>
<circle cx="115.2" cy="75.5" r="2.7" fill="#5b5b5b"/>
<circle cx="10.9" cy="99.5" r="1.6" fill="#5b5b5b"/>
<circle cx="119.7" cy="351.2" r="1.6" fill="#757575"/>
<circle cx="89.5" cy="270.4" r="1.9" fill="#5b5b5b"/>
<circle cx="99.9" cy="323.0" r="1.9" fill="#757575"/>
<circle cx="96.5" cy="190.4" r="2.3" fill="#5b5b5b"/>
<circle cx="113.0" cy="245.5" r="1.5" fill="#5b5b5b"/>
<circle cx="123.5" cy="98.0" r="1.5" fill="#5b5b5b"/>
<circle cx="40.1" cy="346.4" r="1.0" fill="#757575"/>
<circle cx="93.8" cy="220.4" r="2.6" fill="#5b5b5b"/>
<circle cx="111.4" cy="185.7" r="2.6" fill="#757575"/>
<circle cx="94.0" cy="364.3" r="1.5" fill="#5b5b5b"/>
<circle cx="116.2" cy="318.4" r="1.4" fill="#5b5b5b"/>
<circle cx="48.7" cy="130.5" r="3.2" fill="#757575"/>
<circle cx="106.1" cy="32.4" r="2.6" fill="#5b5b5b"/>
<circle cx="105.9" cy="102.7" r="3.1" fill="#5b5b5b"/>
<circle cx="104.0" cy="57.1" r="2.7" fill="#5b5b5b"/>
<circle cx="63.8" cy="328.6" r="1.5" fill="#5b5b5b"/>
<circle cx="98.3" cy="115.9" r="1.5" fill="#5b5b5b"/>
<circle cx="57.8" cy="85.1" r="2.6" fill="#757575"/>
<circle cx="11.6" cy="212.9" r="2.7" fill="#757575"/>
<circle cx="106.9" cy="332.5" r="1.2" fill="#757575"/>
<circle cx="14.4" cy="319.5" r="1.5" fill="#5b5b5b"/>
<circle cx="77.2" cy="358.3" r="1.0" fill="#757575"/>
<circle cx="88.9" cy="250.2" r="2.2" fill="#5b5b5b"/>
<circle cx="86.3" cy="238.9" r="1.6" fill="#757575"/>
<circle cx="21.5" cy="324.5" r="2.2" fill="#757575"/>
<circle cx="84.7" cy="266.3" r="2.2" fill="#5b5b5b"/>
<circle cx="77.0" cy="55.0" r="1.6" fill="#757575"/>
<circle cx="71.7" cy="359.6" r="2.0" fill="#5b5b5b"/>
<circle cx="66.3" cy="336.0" r="1.5" fill="#5b5b5b"/>
<circle cx="21.9" cy="347.0" r="1.0" fill="#5b5b5b"/>
<circle cx="110.4" cy="258.0" r="2.4" fill="#5b5b5b"/>
<circle cx="17.2" cy="116.3" r="1.8" fill="#757575"/>
<circle cx="26.3" cy="357.4" r="1.1" fill="#757575"/>
<circle cx="56.2" cy="280.6" r="1.8" fill="#5b5b5b"/>
<circle cx="38.0" cy="95.9" r="2.9" fill="#5b5b5b"/>
<circle cx="40.1" cy="333.6" r="1.0" fill="#5b5b5b"/>
<circle cx="93.0" cy="314.4" r="1.6" fill="#5b5b5b"/>
<circle cx="70.9" cy="67.4" r="1.6" fill="#5b5b5b"/>
<circle cx="24.7" cy="193.0" r="2.0" fill="#5b5b5b"/>
<circle cx="17.6" cy="94.9" r="2.2" fill="#5b5b5b"/>
<circle cx="127.1" cy="218.6" r="2.0" fill="#5b5b5b"/>
<circle cx="126.1" cy="157.9" r="2.3" fill="#5b5b5b"/>
<circle cx="40.0" cy="88.0" r="1.6" fill="#5b5b5b"/>
<circle cx="88.9" cy="63.3" r="1.5" fill="#5b5b5b"/>
<circle cx="97.9" cy="191.5" r="1.3" fill="#757575"/>
<circle cx="91.6" cy="205.0" r="2.4" fill="#5b5b5b"/>
<circle cx="58.4" cy="331.6" r="2.1" fill="#5b5b5b"/>
<circle cx="56.0" cy="336.9" r="1.0" fill="#5b5b5b"/>
<circle cx="67.3" cy="276.1" r="1.5" fill="#5b5b5b"/>
<circle cx="131.9" cy="315.4" r="1.8" fill="#5b5b5b"/>
<circle cx="11.6" cy="352.5" r="1.4" fill="#5b5b5b"/>
<circle cx="36.5" cy="338.0" r="1.2" fill="#5b5b5b"/>
<circle cx="134.9" cy="185.2" r="1.4" fill="#5b5b5b"/>
<circle cx="81.1" cy="291.8" r="1.3" fill="#5b5b5b"/>
<circle cx="111.5" cy="236.3" r="2.3" fill="#757575"/>
<circle cx="27.2" cy="111.7" r="1.7" fill="#5b5b5b"/>
<circle cx="27.1" cy="207.6" r="1.5" fill="#5b5b5b"/>
<circle cx="131.0" cy="272.1" r="2.4" fill="#5b5b5b"/>
<circle cx="110.9" cy="252.2" r="1.8" fill="#5b5b5b"/>
<circle cx="56.2" cy="207.4" r="1.4" fill="#5b5b5b"/>
<circle cx="122.2" cy="223.9" r="2.7" fill="#757575"/>
<circle cx="17.1" cy="262.0" r="2.3" fill="#5b5b5b"/>
<circle cx="98.6" cy="250.2" r="2.3" fill="#5b5b5b"/>
<circle cx="25.9" cy="105.7" r="1.6" fill="#5b5b5b"/>
<circle cx="73.7" cy="330.8" r="1.1" fill="#757575"/>
<circle cx="82.8" cy="350.4" r="1.3" fill="#5b5b5b"/>
<circle cx="96.6" cy="260.0" r="1.7" fill="#5b5b5b"/>
<circle cx="83.6" cy="97.4" r="2.1" fill="#757575"/>
<circle cx="114.6" cy="59.2" r="1.8" fill="#5b5b5b"/>
<circle cx="43.1" cy="271.8" r="1.2" fill="#5b5b5b"/>
<circle cx="20.3" cy="60.1" r="2.0" fill="#5b5b5b"/>
<circle cx="69.9" cy="117.9" r="1.9" fill="#5b5b5b"/>
<circle cx="43.2" cy="51.6" r="1.6" fill="#5b5b5b"/>
<circle cx="62.9" cy="130.3" r="2.8" fill="#5b5b5b"/>
<circle cx="110.2" cy="62.0" r="2.8" fill="#5b5b5b"/>
<circle cx="87.8" cy="310.5" r="1.2" fill="#5b5b5b"/>
<circle cx="34.1" cy="228.0" r="1.9" fill="#757575"/>
<circle cx="12.9" cy="204.3" r="2.4" fill="#757575"/>
<circle cx="86.8" cy="336.6" r="2.2" fill="#5b5b5b"/>
<circle cx="122.3" cy="74.6" r="2.8" fill="#5b5b5b"/>
<circle cx="67.7" cy="97.2" r="2.7" fill="#757575"/>
<circle cx="88.0" cy="178.7" r="2.2" fill="#757575"/>
<circle cx="62.3" cy="269.8" r="2.5" fill="#757575"/>
<circle cx="87.3" cy="65.7" r="3.1" fill="#757575"/>
<circle cx="49.5" cy="308.3" r="1.3" fill="#5b5b5b"/>
<circle cx="31.7" cy="290.1" r="1.6" fill="#5b5b5b"/>
<circle cx="121.4" cy="185.7" r="1.8" fill="#5b5b5b"/>
<circle cx="69.1" cy="355.2" r="1.8" fill="#5b5b5b"/>
<circle cx="103.6" cy="341.3" r="1.4" fill="#757575"/>
<circle cx="133.8" cy="80.5" r="2.0" fill="#5b5b5b"/>
<circle cx="101.2" cy="318.5" r="1.5" fill="#757575"/>
<circle cx="112.7" cy="323.4" r="2.0" fill="#5b5b5b"/>
<circle cx="41.8" cy="43.4" r="1.8" fill="#5b5b5b"/>
<circle cx="45.5" cy="350.5" r="1.4" fill="#757575"/>
<circle cx="89.5" cy="331.7" r="2.0" fill="#5b5b5b"/>
<circle cx="31.4" cy="81.2" r="2.6" fill="#757575"/>
<circle cx="57.6" cy="315.5" r="1.9" fill="#757575"/>
<circle cx="31.6" cy="138.7" r="3.0" fill="#757575"/>
<circle cx="77.8" cy="339.8" r="2.2" fill="#757575"/>
<circle cx="128.3" cy="189.9" r="2.8" fill="#757575"/>
<circle cx="36.8" cy="145.7" r="1.6" fill="#5b5b5b"/>
<circle cx="120.8" cy="337.0" r="1.1" fill="#5b5b5b"/>
<circle cx="18.5" cy="282.0" r="2.0" fill="#5b5b5b"/>
<circle cx="48.9" cy="192.1" r="2.4" fill="#757575"/>
<circle cx="81.7" cy="66.0" r="1.5" fill="#757575"/>
<circle cx="81.2" cy="38.0" r="1.7" fill="#5b5b5b"/>
<circle cx="71.4" cy="285.7" r="1.9" fill="#5b5b5b"/>
<circle cx="122.7" cy="319.4" r="2.2" fill="#757575"/>
<circle cx="73.8" cy="347.1" r="1.1" fill="#5b5b5b"/>
<circle cx="64.8" cy="40.3" r="1.9" fill="#757575"/>
<circle cx="68.5" cy="61.4" r="3.0" fill="#5b5b5b"/>
<circle cx="39.0" cy="309.5" r="2.2" fill="#5b5b5b"/>
<circle cx="16.6" cy="351.0" r="2.0" fill="#5b5b5b"/>
<circle cx="50.0" cy="88.3" r="2.0" fill="#757575"/>
<circle cx="105.8" cy="113.3" r="3.0" fill="#5b5b5b"/>
<circle cx="54.6" cy="178.2" r="1.7" fill="#757575"/>
<circle cx="20.6" cy="95.7" r="1.9" fill="#757575"/>
<circle cx="84.0" cy="190.8" r="1.6" fill="#757575"/>
<circle cx="84.0" cy="79.2" r="2.0" fill="#5b5b5b"/>
<circle cx="57.9" cy="53.7" r="2.2" fill="#757575"/>
<circle cx="54.0" cy="264.8" r="1.8" fill="#5b5b5b"/>
<circle cx="114.3" cy="216.3" r="2.0" fill="#757575"/>
<circle cx="73.6" cy="272.2" r="2.0" fill="#5b5b5b"/>
<circle cx="94.7" cy="165.6" r="2.6" fill="#757575"/>
<circle cx="52.5" cy="351.2" r="1.7" fill="#5b5b5b"/>
<circle cx="131.9" cy="239.6" r="2.0" fill="#5b5b5b"/>
<circle cx="55.4" cy="334.4" r="2.0" fill="#757575"/>
<circle cx="50.6" cy="348.9" r="1.4" fill="#5b5b5b"/>
<circle cx="86.1" cy="297.2" r="2.1" fill="#5b5b5b"/>
<circle cx="11.5" cy="333.0" r="1.2" fill="#5b5b5b"/>
<circle cx="96.2" cy="37.4" r="2.7" fill="#5b5b5b"/>
<circle cx="27.6" cy="135.8" r="1.9" fill="#5b5b5b"/>
<circle cx="21.2" cy="344.5" r="1.0" fill="#5b5b5b"/>
<circle cx="72.1" cy="278.3" r="2.3" fill="#757575"/>
<circle cx="14.8" cy="49.0" r="2.0" fill="#5b5b5b"/>
<circle cx="23.4" cy="97.1" r="2.0" fill="#5b5b5b"/>
<circle cx="132.4" cy="177.7" r="2.1" fill="#5b5b5b"/>
<circle cx="122.5" cy="86.3" r="2.5" fill="#5b5b5b"/>
<circle cx="73.9" cy="80.1" r="2.3" fill="#757575"/>
<circle cx="72.1" cy="264.0" r="1.1" fill="#757575"/>
<circle cx="10.7" cy="301.3" r="1.3" fill="#757575"/>
<circle cx="57.6" cy="255.3" r="2.6" fill="#5b5b5b"/>
<circle cx="126.1" cy="239.2" r="1.5" fill="#5b5b5b"/>
<circle cx="15.8" cy="175.6" r="2.9" fill="#5b5b5b"/>
<circle cx="20.9" cy="294.2" r="2.3" fill="#5b5b5b"/>
<circle cx="111.2" cy="57.7" r="1.6" fill="#5b5b5b"/>
<circle cx="71.7" cy="275.4" r="1.5" fill="#757575"/>
<circle cx="107.8" cy="99.9" r="3.2" fill="#757575"/>
<circle cx="60.2" cy="353.0" r="1.0" fill="#5b5b5b"/>
<circle cx="114.5" cy="305.8" r="2.4" fill="#757575"/>
<circle cx="77.6" cy="281.7" r="2.3" fill="#757575"/>
<circle cx="65.6" cy="38.7" r="1.8" fill="#5b5b5b"/>
<circle cx="85.1" cy="327.9" r="1.4" fill="#5b5b5b"/>
<circle cx="126.6" cy="93.0" r="2.6" fill="#5b5b5b"/>
<circle cx="114.8" cy="118.5" r="2.3" fill="#5b5b5b"/>
<circle cx="37.6" cy="338.2" r="1.7" fill="#5b5b5b"/>
<circle cx="76.6" cy="320.6" r="1.5" fill="#5b5b5b"/>
<circle cx="68.7" cy="136.3" r="1.8" fill="#5b5b5b"/>
<circle cx="125.4" cy="84.6" r="2.0" fill="#757575"/>
<circle cx="68.7" cy="347.3" r="1.6" fill="#5b5b5b"/>
<circle cx="105.2" cy="230.4" r="1.8" fill="#5b5b5b"/>
<circle cx="130.0" cy="363.8" r="1.2" fill="#757575"/>
<circle cx="51.3" cy="226.4" r="1.7" fill="#5b5b5b"/>
<circle cx="67.3" cy="355.3" r="1.6" fill="#5b5b5b"/>
<circle cx="128.7" cy="245.6" r="2.2" fill="#757575"/>
<circle cx="35.7" cy="202.5" r="2.4" fill="#5b5b5b"/>
<circle cx="94.8" cy="272.5" r="2.5" fill="#5b5b5b"/>
<circle cx="96.6" cy="205.2" r="2.2" fill="#757575"/>
<circle cx="113.0" cy="34.4" r="3.0" fill="#5b5b5b"/>
<circle cx="38.0" cy="101.6" r="3.0" fill="#757575"/>
<circle cx="60.6" cy="267.1" r="2.5" fill="#757575"/>
<circle cx="23.8" cy="283.7" r="1.7" fill="#5b5b5b"/>
<circle cx="118.9" cy="37.5" r="3.2" fill="#5b5b5b"/>
<circle cx="87.9" cy="252.2" r="1.7" fill="#757575"/>
<circle cx="26.7" cy="342.5" r="1.1" fill="#757575"/>
<circle cx="77.9" cy="35.1" r="1.7" fill="#5b5b5b"/>
<circle cx="83.6" cy="176.0" r="1.7" fill="#5b5b5b"/>
<circle cx="93.8" cy="313.8" r="1.3" fill="#757575"/>
<circle cx="14.7" cy="344.5" r="1.0" fill="#5b5b5b"/>
<circle cx="127.1" cy="113.1" r="2.2" fill="#5b5b5b"/>
<circle cx="112.3" cy="298.7" r="1.5" fill="#5b5b5b"/>
<circle cx="22.8" cy="282.4" r="1.7" fill="#757575"/>
<circle cx="38.6" cy="101.2" r="1.6" fill="#5b5b5b"/>
<circle cx="59.8" cy="97.5" r="1.9" fill="#757575"/>
<circle cx="115.6" cy="53.5" r="2.4" fill="#5b5b5b"/>
<circle cx="133.8" cy="342.8" r="1.8" fill="#757575"/>
<circle cx="80.3" cy="182.3" r="2.7" fill="#757575"/>
<circle cx="69.2" cy="78.0" r="2.6" fill="#5b5b5b"/>
<circle cx="19.4" cy="302.6" r="1.8" fill="#5b5b5b"/>
<circle cx="55.8" cy="272.2" r="1.7" fill="#5b5b5b"/>
<circle cx="118.1" cy="246.5" r="2.3" fill="#5b5b5b"/>
<circle cx="119.3" cy="368.8" r="1.8" fill="#757575"/>
<circle cx="90.5" cy="352.3" r="1.3" fill="#5b5b5b"/>
<circle cx="35.5" cy="277.3" r="1.8" fill="#5b5b5b"/>
<circle cx="83.5" cy="105.7" r="1.6" fill="#757575"/>
<circle cx="15.5" cy="129.7" r="2.7" fill="#757575"/>
<circle cx="107.6" cy="205.9" r="2.2" fill="#757575"/>
<circle cx="98.7" cy="184.7" r="2.6" fill="#5b5b5b"/>
<circle cx="91.8" cy="259.9" r="1.2" fill="#757575"/>
<circle cx="102.1" cy="93.2" r="1.9" fill="#5b5b5b"/>
<circle cx="116.1" cy="325.0" r="1.2" fill="#5b5b5b"/>
<circle cx="40.7" cy="42.5" r="2.2" fill="#5b5b5b"/>
<circle cx="34.0" cy="292.7" r="1.2" fill="#5b5b5b"/>
<circle cx="133.5" cy="365.5" r="1.3" fill="#5b5b5b"/>
<circle cx="51.6" cy="261.1" r="1.4" fill="#5b5b5b"/>
<circle cx="82.4" cy="224.7" r="1.5" fill="#5b5b5b"/>
<circle cx="116.9" cy="339.2" r="1.9" fill="#757575"/>
<circle cx="74.5" cy="319.1" r="1.2" fill="#5b5b5b"/>
<circle cx="36.6" cy="135.9" r="1.4" fill="#5b5b5b"/>
<circle cx="38.5" cy="142.9" r="2.9" fill="#757575"/>
<circle cx="133.4" cy="48.5" r="2.5" fill="#5b5b5b"/>
<circle cx="129.5" cy="84.3" r="2.8" fill="#5b5b5b"/>
<circle cx="48.8" cy="326.2" r="1.1" fill="#5b5b5b"/>
<circle cx="74.5" cy="363.8" r="1.5" fill="#757575"/>
<circle cx="85.2" cy="220.1" r="2.2" fill="#5b5b5b"/>
<circle cx="99.6" cy="316.7" r="1.8" fill="#757575"/>
<circle cx="27.2" cy="259.2" r="1.8" fill="#5b5b5b"/>
<circle cx="65.8" cy="168.0" r="2.2" fill="#757575"/>
<circle cx="95.3" cy="259.7" r="2.3" fill="#5b5b5b"/>
<circle cx="77.7" cy="52.9" r="1.9" fill="#5b5b5b"/>
<circle cx="31.5" cy="203.2" r="2.2" fill="#757575"/>
<circle cx="99.6" cy="279.1" r="1.5" fill="#5b5b5b"/>
<circle cx="107.5" cy="224.3" r="2.4" fill="#5b5b5b"/>
<circle cx="71.7" cy="216.9" r="2.3" fill="#5b5b5b"/>
<circle cx="23.3" cy="238.0" r="2.7" fill="#757575"/>
<circle cx="32.1" cy="311.5" r="1.8" fill="#5b5b5b"/>
<circle cx="66.7" cy="111.1" r="3.0" fill="#5b5b5b"/>
<circle cx="25.1" cy="84.3" r="1.9" fill="#5b5b5b"/>
<circle cx="101.8" cy="59.7" r="2.5" fill="#5b5b5b"/>
<circle cx="131.3" cy="218.0" r="2.4" fill="#5b5b5b"/>
<circle cx="27.9" cy="267.8" r="2.3" fill="#5b5b5b"/>
<circle cx="129.2" cy="203.6" r="1.9" fill="#5b5b5b"/>
<circle cx="56.0" cy="203.3" r="2.3" fill="#5b5b5b"/>
<circle cx="60.2" cy="84.4" r="3.1" fill="#757575"/>
<circle cx="29.5" cy="289.9" r="1.7" fill="#5b5b5b"/>
<circle cx="73.4" cy="297.6" r="1.4" fill="#757575"/>
<circle cx="81.4" cy="336.3" r="1.8" fill="#5b5b5b"/>
<circle cx="37.2" cy="178.7" r="1.8" fill="#5b5b5b"/>
<circle cx="94.8" cy="307.2" r="2.0" fill="#757575"/>
<circle cx="64.6" cy="318.2" r="1.7" fill="#5b5b5b"/>
<circle cx="58.5" cy="80.6" r="2.9" fill="#757575"/>
<circle cx="30.2" cy="229.4" r="2.0" fill="#757575"/>
<circle cx="81.2" cy="212.9" r="2.3" fill="#5b5b5b"/>
<circle cx="84.3" cy="349.4" r="1.4" fill="#5b5b5b"/>
<circle cx="101.6" cy="64.4" r="1.8" fill="#5b5b5b"/>
<circle cx="42.9" cy="92.0" r="1.8" fill="#5b5b5b"/>
<circle cx="40.3" cy="328.6" r="2.1" fill="#5b5b5b"/>
<circle cx="24.3" cy="284.9" r="2.2" fill="#5b5b5b"/>
<circle cx="134.5" cy="101.1" r="2.1" fill="#5b5b5b"/>
<circle cx="126.4" cy="163.4" r="2.5" fill="#5b5b5b"/>
<circle cx="112.6" cy="101.8" r="2.2" fill="#5b5b5b"/>
<circle cx="81.9" cy="113.3" r="1.5" fill="#5b5b5b"/>
<circle cx="115.4" cy="189.8" r="2.0" fill="#5b5b5b"/>
<circle cx="89.4" cy="347.4" r="1.7" fill="#5b5b5b"/>
<circle cx="18.5" cy="348.3" r="2.0" fill="#757575"/>
<circle cx="102.5" cy="334.3" r="1.3" fill="#5b5b5b"/>
<circle cx="130.9" cy="160.3" r="2.0" fill="#5b5b5b"/>
<circle cx="57.3" cy="206.5" r="2.2" fill="#5b5b5b"/>
<circle cx="55.2" cy="235.1" r="2.7" fill="#5b5b5b"/>
<circle cx="23.6" cy="132.5" r="2.9" fill="#5b5b5b"/>
<circle cx="55.5" cy="301.5" r="1.2" fill="#5b5b5b"/>
<circle cx="37.8" cy="57.7" r="2.5" fill="#5b5b5b"/>
<circle cx="77.9" cy="253.2" r="2.4" fill="#5b5b5b"/>
<circle cx="83.5" cy="275.1" r="1.5" fill="#5b5b5b"/>
<circle cx="40.9" cy="340.7" r="2.2" fill="#757575"/>
<circle cx="42.1" cy="306.9" r="1.2" fill="#5b5b5b"/>
<circle cx="78.5" cy="73.5" r="1.5" fill="#5b5b5b"/>
<circle cx="117.9" cy="89.7" r="3.1" fill="#757575"/>
<circle cx="47.5" cy="302.4" r="1.9" fill="#757575"/>
<circle cx="95.9" cy="44.7" r="2.1" fill="#5b5b5b"/>
<circle cx="102.6" cy="251.1" r="1.8" fill="#757575"/>
<circle cx="59.5" cy="162.8" r="2.7" fill="#757575"/>
<circle cx="40.1" cy="282.5" r="2.3" fill="#5b5b5b"/>
<circle cx="93.7" cy="87.9" r="2.4" fill="#757575"/>
<circle cx="69.8" cy="324.0" r="1.9" fill="#5b5b5b"/>
<circle cx="38.0" cy="318.3" r="1.4" fill="#5b5b5b"/>
<circle cx="43.4" cy="164.2" r="1.8" fill="#5b5b5b"/>
<circle cx="21.3" cy="182.5" r="2.0" fill="#5b5b5b"/>
<circle cx="133.7" cy="331.5" r="1.0" fill="#757575"/>
<circle cx="78.7" cy="306.4" r="1.7" fill="#757575"/>
<circle cx="53.2" cy="84.7" r="2.8" fill="#757575"/>
<circle cx="34.2" cy="128.5" r="3.1" fill="#5b5b5b"/>
<circle cx="98.3" cy="346.6" r="1.3" fill="#757575"/>
<circle cx="63.8" cy="208.1" r="2.5" fill="#5b5b5b"/>
<circle cx="121.6" cy="73.4" r="2.6" fill="#5b5b5b"/>
<circle cx="111.7" cy="49.7" r="2.2" fill="#5b5b5b"/>
<circle cx="12.2" cy="193.5" r="2.0" fill="#5b5b5b"/>
<circle cx="39.7" cy="133.6" r="1.5" fill="#5b5b5b"/>
<circle cx="120.3" cy="33.2" r="1.8" fill="#5b5b5b"/>
<circle cx="52.0" cy="34.1" r="2.9" fill="#5b5b5b"/>
<circle cx="117.3" cy="196.6" r="2.7" fill="#5b5b5b"/>
<circle cx="83.2" cy="227.3" r="2.2" fill="#5b5b5b"/>
<circle cx="61.2" cy="356.0" r="1.4" fill="#757575"/>
<circle cx="71.5" cy="167.5" r="2.1" fill="#757575"/>
<circle cx="84.5" cy="257.2" r="2.5" fill="#5b5b5b"/>
<circle cx="40.9" cy="226.2" r="2.2" fill="#5b5b5b"/>
<circle cx="39.4" cy="310.8" r="2.1" fill="#757575"/>
<circle cx="89.3" cy="227.3" r="2.0" fill="#757575"/>
<circle cx="119.5" cy="50.3" r="3.0" fill="#5b5b5b"/>
<circle cx="129.0" cy="82.2" r="3.1" fill="#757575"/>
<circle cx="109.5" cy="47.8" r="2.1" fill="#5b5b5b"/>
<circle cx="78.5" cy="345.5" r="1.0" fill="#5b5b5b"/>
<circle cx="57.5" cy="346.4" r="1.6" fill="#5b5b5b"/>
<circle cx="25.2" cy="302.5" r="1.7" fill="#5b5b5b"/>
<circle cx="29.2" cy="134.5" r="3.0" fill="#5b5b5b"/>
<circle cx="106.6" cy="245.5" r="2.7" fill="#5b5b5b"/>
<circle cx="26.2" cy="92.9" r="2.6" fill="#5b5b5b"/>
<circle cx="41.5" cy="214.5" r="2.7" fill="#5b5b5b"/>
<circle cx="40.3" cy="267.1" r="1.4" fill="#5b5b5b"/>
<circle cx="102.6" cy="342.8" r="1.1" fill="#757575"/>
<circle cx="21.4" cy="257.0" r="1.8" fill="#5b5b5b"/>
<circle cx="16.6" cy="350.8" r="1.0" fill="#5b5b5b"/>
<circle cx="46.6" cy="125.9" r="2.2" fill="#5b5b5b"/>
<circle cx="21.2" cy="70.4" r="3.0" fill="#5b5b5b"/>
<circle cx="42.1" cy="117.9" r="2.7" fill="#757575"/>
<circle cx="90.1" cy="203.8" r="2.1" fill="#5b5b5b"/>
<circle cx="102.6" cy="343.9" r="1.4" fill="#5b5b5b"/>
<circle cx="26.0" cy="140.3" r="3.0" fill="#5b5b5b"/>
<circle cx="123.2" cy="345.0" r="1.1" fill="#757575"/>
<circle cx="125.1" cy="247.7" r="2.2" fill="#5b5b5b"/>
<circle cx="92.7" cy="263.2" r="1.7" fill="#5b5b5b"/>
<circle cx="31.5" cy="349.3" r="2.1" fill="#757575"/>
<circle cx="17.0" cy="131.3" r="1.8" fill="#5b5b5b"/>
<circle cx="107.5" cy="180.2" r="1.5" fill="#757575"/>
<circle cx="101.5" cy="88.8" r="2.1" fill="#5b5b5b"/>
<circle cx="124.9" cy="308.8" r="1.2" fill="#5b5b5b"/>
<circle cx="50.6" cy="175.5" r="2.2" fill="#5b5b5b"/>
<circle cx="14.3" cy="280.5" r="1.6" fill="#5b5b5b"/>
<circle cx="122.6" cy="288.1" r="2.0" fill="#757575"/>
<circle cx="59.1" cy="221.0" r="2.3" fill="#5b5b5b"/>
<circle cx="76.6" cy="247.2" r="1.8" fill="#5b5b5b"/>
<circle cx="87.4" cy="138.4" r="3.0" fill="#757575"/>
<circle cx="39.0" cy="269.5" r="2.0" fill="#757575"/>
<circle cx="80.1" cy="192.4" r="2.9" fill="#757575"/>
<circle cx="57.3" cy="365.4" r="1.6" fill="#5b5b5b"/>
<circle cx="68.7" cy="332.2" r="1.8" fill="#5b5b5b"/>
<circle cx="46.5" cy="264.0" r="2.3" fill="#5b5b5b"/>
<circle cx="88.0" cy="317.7" r="1.8" fill="#5b5b5b"/>
<circle cx="101.1" cy="97.2" r="1.4" fill="#5b5b5b"/>
<circle cx="47.1" cy="341.2" r="1.2" fill="#5b5b5b"/>
<circle cx="96.9" cy="220.8" r="1.3" fill="#757575"/>
<circle cx="51.3" cy="139.1" r="1.9" fill="#5b5b5b"/>
<circle cx="52.8" cy="278.0" r="1.1" fill="#5b5b5b"/>
<circle cx="122.5" cy="122.6" r="2.5" fill="#5b5b5b"/>
<circle cx="52.8" cy="202.8" r="2.2" fill="#5b5b5b"/>
<circle cx="69.4" cy="142.1" r="2.5" fill="#5b5b5b"/>
<circle cx="14.2" cy="268.2" r="2.1" fill="#757575"/>
<circle cx="71.8" cy="322.7" r="1.2" fill="#5b5b5b"/>
<circle cx="33.5" cy="271.8" r="1.6" fill="#5b5b5b"/>
<circle cx="129.2" cy="244.7" r="2.5" fill="#5b5b5b"/>
<circle cx="68.8" cy="346.9" r="1.2" fill="#5b5b5b"/>
<circle cx="52.1" cy="80.9" r="2.7" fill="#757575"/>
<circle cx="49.7" cy="262.8" r="1.2" fill="#757575"/>
<circle cx="68.9" cy="306.2" r="2.1" fill="#757575"/>
<circle cx="33.4" cy="90.4" r="2.6" fill="#5b5b5b"/>
<circle cx="100.9" cy="236.0" r="1.9" fill="#5b5b5b"/>
<circle cx="84.4" cy="307.0" r="1.6" fill="#5b5b5b"/>
<circle cx="80.7" cy="209.6" r="2.9" fill="#5b5b5b"/>
<circle cx="102.5" cy="101.4" r="2.6" fill="#757575"/>
<circle cx="82.9" cy="74.6" r="2.2" fill="#5b5b5b"/>
<circle cx="119.1" cy="167.8" r="1.7" fill="#5b5b5b"/>
<circle cx="72.9" cy="346.6" r="1.2" fill="#5b5b5b"/>
<circle cx="133.6" cy="103.2" r="1.8" fill="#5b5b5b"/>
<circle cx="38.6" cy="46.0" r="3.1" fill="#5b5b5b"/>
<circle cx="70.5" cy="328.8" r="1.2" fill="#757575"/>
<circle cx="101.5" cy="179.9" r="2.6" fill="#757575"/>
<circle cx="80.3" cy="343.2" r="1.3" fill="#757575"/>
<circle cx="10.9" cy="226.4" r="1.4" fill="#5b5b5b"/>
<circle cx="55.9" cy="111.3" r="3.1" fill="#5b5b5b"/>
<circle cx="45.7" cy="188.2" r="2.8" fill="#5b5b5b"/>
<circle cx="65.5" cy="69.7" r="1.6" fill="#5b5b5b"/>
<circle cx="84.2" cy="365.0" r="2.0" fill="#5b5b5b"/>
<circle cx="131.0" cy="174.4" r="2.7" fill="#757575"/>
<circle cx="126.6" cy="239.6" r="1.2" fill="#757575"/>
<circle cx="134.9" cy="229.8" r="2.1" fill="#5b5b5b"/>
<circle cx="32.7" cy="274.8" r="2.5" fill="#757575"/>
<circle cx="50.9" cy="236.1" r="2.6" fill="#5b5b5b"/>
<circle cx="66.0" cy="139.5" r="2.4" fill="#5b5b5b"/>
<circle cx="28.6" cy="363.3" r="1.7" fill="#757575"/>
<circle cx="65.8" cy="276.8" r="1.7" fill="#757575"/>
<circle cx="123.5" cy="86.2" r="3.0" fill="#5b5b5b"/>
<circle cx="29.3" cy="154.1" r="1.8" fill="#757575"/>
<circle cx="57.7" cy="122.3" r="3.2" fill="#5b5b5b"/>
<circle cx="80.7" cy="253.8" r="1.4" fill="#5b5b5b"/>
<circle cx="83.2" cy="176.1" r="2.6" fill="#757575"/>
<circle cx="42.0" cy="318.2" r="2.0" fill="#757575"/>
<circle cx="103.3" cy="353.7" r="1.7" fill="#757575"/>
<circle cx="20.8" cy="364.8" r="1.3" fill="#757575"/>
<circle cx="81.8" cy="252.5" r="1.5" fill="#5b5b5b"/>
<circle cx="23.9" cy="89.2" r="2.3" fill="#757575"/>
<circle cx="27.0" cy="353.3" r="1.5" fill="#757575"/>
<circle cx="15.2" cy="312.5" r="2.1" fill="#5b5b5b"/>
<circle cx="13.2" cy="50.4" r="1.9" fill="#5b5b5b"/>
<circle cx="116.4" cy="264.3" r="1.4" fill="#757575"/>
<circle cx="121.5" cy="250.6" r="1.6" fill="#5b5b5b"/>
<circle cx="26.7" cy="86.0" r="1.9" fill="#5b5b5b"/>
<circle cx="26.9" cy="140.2" r="2.8" fill="#5b5b5b"/>
<circle cx="21.0" cy="142.1" r="3.1" fill="#757575"/>
<circle cx="81.6" cy="70.0" r="1.7" fill="#5b5b5b"/>
<circle cx="51.0" cy="323.8" r="1.1" fill="#5b5b5b"/>
<circle cx="120.1" cy="137.9" r="2.6" fill="#5b5b5b"/>
<circle cx="56.4" cy="146.7" r="2.2" fill="#5b5b5b"/>
<circle cx="54.2" cy="265.8" r="2.2" fill="#5b5b5b"/>
<circle cx="120.6" cy="302.3" r="2.0" fill="#5b5b5b"/>
<circle cx="92.1" cy="176.4" r="1.8" fill="#757575"/>
<circle cx="124.6" cy="91.4" r="1.6" fill="#757575"/>
<circle cx="125.0" cy="65.0" r="2.2" fill="#757575"/>
<circle cx="87.9" cy="312.1" r="1.1" fill="#5b5b5b"/>
<circle cx="44.7" cy="356.6" r="1.3" fill="#757575"/>
<circle cx="14.4" cy="178.3" r="2.1" fill="#757575"/>
<circle cx="80.3" cy="303.7" r="1.1" fill="#757575"/>
<circle cx="116.2" cy="80.6" r="2.9" fill="#757575"/>
<circle cx="59.7" cy="222.7" r="1.3" fill="#5b5b5b"/>
<circle cx="50.2" cy="118.8" r="2.2" fill="#5b5b5b"/>
<circle cx="73.7" cy="272.2" r="2.3" fill="#757575"/>
<circle cx="129.8" cy="105.4" r="2.1" fill="#5b5b5b"/>
<circle cx="124.9" cy="297.9" r="1.5" fill="#757575"/>
<circle cx="68.9" cy="187.7" r="1.5" fill="#5b5b5b"/>
<circle cx="126.6" cy="325.1" r="1.9" fill="#5b5b5b"/>
<circle cx="133.1" cy="67.8" r="3.0" fill="#5b5b5b"/>
<circle cx="67.7" cy="364.2" r="2.0" fill="#5b5b5b"/>
<circle cx="76.9" cy="355.4" r="1.0" fill="#5b5b5b"/>
<circle cx="76.7" cy="266.7" r="2.0" fill="#5b5b5b"/>
<circle cx="42.1" cy="309.1" r="1.1" fill="#5b5b5b"/>
<circle cx="46.9" cy="35.5" r="1.8" fill="#5b5b5b"/>
<circle cx="98.5" cy="251.9" r="1.3" fill="#5b5b5b"/>
<circle cx="97.1" cy="148.4" r="2.7" fill="#5b5b5b"/>
<circle cx="108.0" cy="318.4" r="2.3" fill="#5b5b5b"/>
<circle cx="125.8" cy="211.1" r="1.8" fill="#757575"/>
<circle cx="77.8" cy="321.4" r="1.4" fill="#5b5b5b"/>
<circle cx="61.0" cy="317.9" r="1.0" fill="#5b5b5b"/>
<circle cx="21.5" cy="272.5" r="1.7" fill="#5b5b5b"/>
<circle cx="84.1" cy="261.0" r="1.1" fill="#757575"/>
<circle cx="12.3" cy="176.7" r="1.5" fill="#757575"/>
<circle cx="66.4" cy="346.9" r="1.1" fill="#5b5b5b"/>
<circle cx="50.5" cy="300.8" r="2.0" fill="#5b5b5b"/>
<circle cx="22.1" cy="220.8" r="2.4" fill="#5b5b5b"/>
<circle cx="93.7" cy="155.9" r="2.6" fill="#757575"/>
<circle cx="61.5" cy="362.1" r="1.6" fill="#5b5b5b"/>
<circle cx="79.6" cy="141.7" r="2.9" fill="#757575"/>
<circle cx="77.4" cy="297.9" r="1.5" fill="#5b5b5b"/>
<circle cx="133.0" cy="52.2" r="1.7" fill="#5b5b5b"/>
<circle cx="53.0" cy="140.6" r="2.5" fill="#757575"/>
<circle cx="120.3" cy="200.2" r="1.3" fill="#5b5b5b"/>
<circle cx="98.4" cy="353.3" r="2.1" fill="#5b5b5b"/>
<circle cx="87.8" cy="183.5" r="2.7" fill="#5b5b5b"/>
<circle cx="94.1" cy="244.4" r="2.3" fill="#5b5b5b"/>
<circle cx="118.0" cy="189.2" r="1.3" fill="#5b5b5b"/>
<circle cx="106.4" cy="54.7" r="2.3" fill="#5b5b5b"/>
<circle cx="117.1" cy="298.3" r="2.1" fill="#5b5b5b"/>
<circle cx="25.1" cy="34.5" r="2.9" fill="#757575"/>
<circle cx="74.5" cy="109.8" r="2.6" fill="#5b5b5b"/>
<circle cx="86.0" cy="264.0" r="2.3" fill="#757575"/>
<circle cx="20.3" cy="285.2" r="2.5" fill="#5b5b5b"/>
<circle cx="58.9" cy="322.5" r="1.2" fill="#757575"/>
<circle cx="75.0" cy="290.8" r="1.4" fill="#5b5b5b"/>
<circle cx="66.3" cy="348.3" r="2.0" fill="#5b5b5b"/>
<circle cx="80.9" cy="56.1" r="2.4" fill="#5b5b5b"/>
<circle cx="70.8" cy="323.7" r="1.8" fill="#757575"/>
<circle cx="35.7" cy="275.5" r="1.9" fill="#757575"/>
<circle cx="87.6" cy="173.1" r="1.6" fill="#5b5b5b"/>
<circle cx="118.1" cy="245.0" r="1.9" fill="#5b5b5b"/>
<circle cx="123.1" cy="256.0" r="1.7" fill="#757575"/>
<circle cx="10.1" cy="363.4" r="1.0" fill="#5b5b5b"/>
<circle cx="115.7" cy="84.7" r="1.9" fill="#757575"/>
<circle cx="57.8" cy="99.8" r="2.6" fill="#5b5b5b"/>
<circle cx="117.0" cy="75.8" r="2.0" fill="#5b5b5b"/>
<circle cx="122.6" cy="185.5" r="2.8" fill="#5b5b5b"/>
<circle cx="25.3" cy="200.4" r="1.3" fill="#5b5b5b"/>
<circle cx="33.0" cy="214.0" r="2.2" fill="#757575"/>
<circle cx="57.2" cy="53.4" r="3.0" fill="#757575"/>
<circle cx="31.5" cy="147.7" r="1.9" fill="#5b5b5b"/>
<circle cx="34.7" cy="167.8" r="1.8" fill="#5b5b5b"/>
<circle cx="90.0" cy="246.6" r="2.3" fill="#757575"/>
<circle cx="36.2" cy="211.8" r="1.6" fill="#5b5b5b"/>
<circle cx="18.0" cy="345.9" r="1.1" fill="#757575"/>
<circle cx="80.7" cy="234.4" r="1.6" fill="#5b5b5b"/>
<circle cx="83.7" cy="210.1" r="1.9" fill="#757575"/>
<circle cx="131.3" cy="288.4" r="1.6" fill="#757575"/>
<circle cx="123.6" cy="176.4" r="2.6" fill="#757575"/>
<circle cx="71.9" cy="349.7" r="1.5" fill="#5b5b5b"/>
<circle cx="47.3" cy="196.4" r="2.0" fill="#5b5b5b"/>
<circle cx="131.3" cy="192.5" r="2.0" fill="#5b5b5b"/>
<circle cx="49.9" cy="282.4" r="1.3" fill="#5b5b5b"/>
<circle cx="130.8" cy="337.9" r="1.4" fill="#5b5b5b"/>
<circle cx="130.7" cy="179.3" r="2.4" fill="#5b5b5b"/>
<circle cx="84.3" cy="311.6" r="2.0" fill="#5b5b5b"/>
<circle cx="27.9" cy="369.9" r="1.2" fill="#757575"/>
<circle cx="62.1" cy="196.6" r="1.9" fill="#757575"/>
<circle cx="44.4" cy="333.9" r="1.2" fill="#5b5b5b"/>
<circle cx="73.2" cy="264.6" r="1.3" fill="#5b5b5b"/>
<circle cx="69.0" cy="333.1" r="2.0" fill="#5b5b5b"/>
<circle cx="97.3" cy="98.5" r="1.7" fill="#757575"/>
<circle cx="70.0" cy="189.3" r="2.5" fill="#5b5b5b"/>
<circle cx="124.0" cy="249.1" r="2.6" fill="#757575"/>
<circle cx="26.7" cy="33.2" r="2.0" fill="#757575"/>
<circle cx="45.7" cy="346.4" r="2.1" fill="#5b5b5b"/>
<circle cx="121.1" cy="183.3" r="1.9" fill="#5b5b5b"/>
<circle cx="57.4" cy="91.7" r="1.4" fill="#5b5b5b"/>
<circle cx="86.4" cy="62.3" r="3.2" fill="#5b5b5b"/>
<circle cx="30.0" cy="281.7" r="1.2" fill="#5b5b5b"/>
<circle cx="14.3" cy="205.4" r="2.0" fill="#5b5b5b"/>
<circle cx="103.3" cy="314.3" r="1.9" fill="#5b5b5b"/>
<circle cx="25.0" cy="66.1" r="2.5" fill="#5b5b5b"/>
<circle cx="112.9" cy="355.2" r="1.1" fill="#5b5b5b"/>
<circle cx="88.0" cy="321.6" r="1.1" fill="#5b5b5b"/>
<circle cx="31.9" cy="225.1" r="1.4" fill="#5b5b5b"/>
<circle cx="113.6" cy="91.7" r="2.8" fill="#5b5b5b"/>
<circle cx="74.7" cy="68.7" r="1.5" fill="#757575"/>
<circle cx="14.1" cy="339.5" r="2.0" fill="#5b5b5b"/>
<circle cx="133.4" cy="247.1" r="2.4" fill="#757575"/>
<circle cx="82.8" cy="34.3" r="1.9" fill="#757575"/>
<circle cx="124.0" cy="61.5" r="2.3" fill="#5b5b5b"/>
<circle cx="13.1" cy="321.1" r="1.8" fill="#5b5b5b"/>
<circle cx="42.9" cy="131.4" r="2.8" fill="#5b5b5b"/>
<circle cx="95.1" cy="229.0" r="2.0" fill="#5b5b5b"/>
<circle cx="54.7" cy="114.9" r="1.5" fill="#5b5b5b"/>
<circle cx="114.4" cy="234.6" r="2.3" fill="#5b5b5b"/>
<circle cx="21.1" cy="293.7" r="2.4" fill="#757575"/>
<circle cx="61.5" cy="259.3" r="2.2" fill="#757575"/>
<circle cx="129.2" cy="240.0" r="2.1" fill="#5b5b5b"/>
<circle cx="116.2" cy="103.5" r="1.5" fill="#5b5b5b"/>
<circle cx="31.7" cy="364.6" r="1.5" fill="#5b5b5b"/>
<circle cx="67.5" cy="123.7" r="2.4" fill="#757575"/>
<circle cx="30.0" cy="130.8" r="1.5" fill="#5b5b5b"/>
<circle cx="43.9" cy="360.3" r="1.3" fill="#757575"/>
<circle cx="26.1" cy="135.4" r="2.9" fill="#757575"/>
<circle cx="114.4" cy="188.2" r="2.4" fill="#757575"/>
<circle cx="94.5" cy="160.1" r="3.0" fill="#757575"/>
<circle cx="85.6" cy="282.1" r="2.3" fill="#757575"/>
<circle cx="115.7" cy="105.8" r="2.1" fill="#5b5b5b"/>
<circle cx="19.6" cy="327.7" r="1.5" fill="#5b5b5b"/>
<circle cx="73.8" cy="182.8" r="2.5" fill="#5b5b5b"/>
<circle cx="76.8" cy="199.1" r="2.6" fill="#5b5b5b"/>
<circle cx="77.5" cy="71.5" r="2.1" fill="#5b5b5b"/>
<circle cx="44.5" cy="346.7" r="2.0" fill="#757575"/>
<circle cx="18.6" cy="353.4" r="2.1" fill="#5b5b5b"/>
<circle cx="55.6" cy="215.4" r="2.3" fill="#757575"/>
<circle cx="91.9" cy="55.3" r="2.1" fill="#757575"/>
<circle cx="69.1" cy="360.9" r="1.2" fill="#757575"/>
<circle cx="49.8" cy="204.7" r="2.5" fill="#5b5b5b"/>
<circle cx="93.6" cy="90.7" r="2.3" fill="#5b5b5b"/>
<circle cx="102.8" cy="98.0" r="1.5" fill="#757575"/>
<circle cx="17.7" cy="141.4" r="2.0" fill="#5b5b5b"/>
<circle cx="58.5" cy="320.7" r="2.1" fill="#757575"/>
<circle cx="78.4" cy="308.5" r="1.7" fill="#757575"/>
<circle cx="69.8" cy="78.0" r="1.6" fill="#757575"/>
<circle cx="123.2" cy="321.4" r="1.7" fill="#757575"/>
<circle cx="116.8" cy="200.8" r="2.0" fill="#5b5b5b"/>
<circle cx="45.1" cy="354.1" r="1.9" fill="#5b5b5b"/>
<circle cx="125.4" cy="95.7" r="2.6" fill="#5b5b5b"/>
<circle cx="55.5" cy="345.3" r="1.2" fill="#5b5b5b"/>
<circle cx="77.1" cy="70.9" r="2.1" fill="#5b5b5b"/>
<circle cx="63.6" cy="59.2" r="2.0" fill="#5b5b5b"/>
<circle cx="86.6" cy="331.3" r="2.1" fill="#5b5b5b"/>
<circle cx="39.2" cy="113.6" r="2.7" fill="#5b5b5b"/>
<circle cx="103.3" cy="287.0" r="2.0" fill="#5b5b5b"/>
<circle cx="41.5" cy="101.4" r="3.0" fill="#757575"/>
<circle cx="117.0" cy="95.3" r="2.5" fill="#5b5b5b"/>
<circle cx="87.5" cy="178.3" r="2.5" fill="#5b5b5b"/>
<circle cx="113.4" cy="251.6" r="1.5" fill="#5b5b5b"/>
<circle cx="112.3" cy="99.1" r="1.7" fill="#5b5b5b"/>
<circle cx="16.1" cy="103.8" r="1.5" fill="#757575"/>
<circle cx="98.5" cy="198.9" r="1.7" fill="#999999"/>
<circle cx="62.5" cy="201.8" r="2.2" fill="#999999"/>
<circle cx="30.3" cy="222.1" r="1.1" fill="#999999"/>
<circle cx="133.9" cy="254.4" r="1.0" fill="#999999"/>
<circle cx="15.2" cy="313.9" r="1.1" fill="#999999"/>
<circle cx="37.4" cy="268.6" r="1.7" fill="#999999"/>
<circle cx="46.9" cy="262.2" r="2.0" fill="#999999"/>
<circle cx="22.2" cy="316.3" r="1.8" fill="#999999"/>
<circle cx="79.1" cy="352.5" r="1.3" fill="#999999"/>
<circle cx="120.0" cy="324.5" r="1.6" fill="#999999"/>
<circle cx="100.8" cy="182.6" r="2.3" fill="#999999"/>
<circle cx="59.0" cy="172.7" r="1.8" fill="#999999"/>
<circle cx="29.1" cy="319.4" r="0.9" fill="#999999"/>
<circle cx="44.0" cy="203.8" r="1.5" fill="#999999"/>
<circle cx="123.1" cy="181.2" r="1.9" fill="#999999"/>
<circle cx="21.1" cy="216.5" r="2.0" fill="#999999"/>
<circle cx="87.0" cy="339.2" r="1.0" fill="#999999"/>
<circle cx="68.4" cy="326.6" r="1.6" fill="#999999"/>
<circle cx="56.9" cy="191.2" r="2.0" fill="#999999"/>
<circle cx="31.0" cy="315.0" r="1.2" fill="#999999"/>
<circle cx="116.2" cy="365.0" r="1.6" fill="#999999"/>
<circle cx="14.7" cy="354.8" r="0.8" fill="#999999"/>
<circle cx="20.6" cy="190.2" r="2.1" fill="#999999"/>
<circle cx="80.6" cy="209.1" r="1.5" fill="#999999"/>
<circle cx="73.5" cy="244.9" r="1.8" fill="#999999"/>
<circle cx="60.8" cy="275.3" r="1.1" fill="#999999"/>
<circle cx="47.6" cy="285.7" r="1.6" fill="#999999"/>
<circle cx="78.2" cy="273.0" r="1.5" fill="#999999"/>
<circle cx="69.6" cy="284.7" r="1.5" fill="#999999"/>
<circle cx="42.4" cy="230.4" r="1.3" fill="#999999"/>
<circle cx="39.0" cy="334.2" r="1.7" fill="#999999"/>
<circle cx="11.1" cy="347.2" r="0.9" fill="#999999"/>
<circle cx="46.2" cy="339.3" r="0.9" fill="#999999"/>
<circle cx="112.3" cy="330.8" r="1.5" fill="#999999"/>
<circle cx="117.5" cy="329.9" r="1.7" fill="#999999"/>
<circle cx="134.3" cy="356.0" r="1.5" fill="#999999"/>
<circle cx="73.5" cy="103.4" r="2.4" fill="#999999"/>
<circle cx="35.7" cy="188.9" r="1.5" fill="#999999"/>
<circle cx="109.7" cy="325.2" r="1.8" fill="#999999"/>
<circle cx="78.1" cy="261.5" r="1.0" fill="#999999"/>
<circle cx="41.2" cy="355.6" r="1.0" fill="#999999"/>
<circle cx="82.6" cy="264.8" r="1.1" fill="#999999"/>
<circle cx="50.6" cy="281.6" r="1.1" fill="#999999"/>
<circle cx="40.1" cy="191.5" r="1.2" fill="#999999"/>
<circle cx="66.2" cy="75.5" r="1.4" fill="#999999"/>
<circle cx="103.7" cy="300.2" r="1.5" fill="#999999"/>
<circle cx="134.0" cy="239.8" r="2.2" fill="#999999"/>
<circle cx="42.5" cy="354.8" r="1.2" fill="#999999"/>
<circle cx="107.1" cy="258.8" r="1.5" fill="#999999"/>
<circle cx="134.1" cy="133.3" r="1.5" fill="#999999"/>
<circle cx="69.1" cy="261.8" r="1.1" fill="#999999"/>
<circle cx="37.7" cy="341.2" r="0.9" fill="#999999"/>
<circle cx="21.8" cy="249.8" r="1.8" fill="#999999"/>
<circle cx="94.1" cy="108.7" r="1.5" fill="#999999"/>
<circle cx="118.9" cy="244.4" r="1.7" fill="#999999"/>
<circle cx="104.4" cy="211.3" r="1.7" fill="#999999"/>
<circle cx="118.8" cy="274.6" r="1.5" fill="#999999"/>
<circle cx="73.7" cy="264.0" r="1.6" fill="#999999"/>
<circle cx="108.0" cy="261.2" r="1.3" fill="#999999"/>
<circle cx="46.8" cy="369.3" r="1.1" fill="#999999"/>
<circle cx="97.5" cy="344.4" r="1.4" fill="#999999"/>
<circle cx="110.5" cy="138.8" r="2.3" fill="#999999"/>
<circle cx="105.8" cy="89.8" r="1.2" fill="#999999"/>
<circle cx="35.1" cy="145.7" r="1.9" fill="#999999"/>
<circle cx="40.9" cy="263.2" r="1.0" fill="#999999"/>
<circle cx="28.3" cy="358.6" r="1.3" fill="#999999"/>
<circle cx="132.6" cy="79.2" r="1.3" fill="#999999"/>
<circle cx="103.7" cy="91.1" r="1.3" fill="#999999"/>
<circle cx="45.7" cy="360.1" r="0.9" fill="#999999"/>
<circle cx="57.7" cy="303.9" r="1.7" fill="#999999"/>
<circle cx="78.0" cy="301.5" r="0.9" fill="#999999"/>
<circle cx="22.4" cy="275.9" r="1.8" fill="#999999"/>
<circle cx="34.9" cy="125.0" r="2.4" fill="#999999"/>
<circle cx="14.8" cy="188.6" r="2.1" fill="#999999"/>
<circle cx="99.8" cy="262.5" r="1.0" fill="#999999"/>
<circle cx="90.0" cy="266.2" r="1.9" fill="#999999"/>
<circle cx="91.4" cy="344.8" r="1.3" fill="#999999"/>
<circle cx="106.1" cy="196.6" r="1.8" fill="#999999"/>
<circle cx="37.6" cy="136.0" r="2.4" fill="#999999"/>
<circle cx="67.1" cy="317.5" r="1.4" fill="#999999"/>
<circle cx="103.1" cy="295.6" r="1.1" fill="#999999"/>
<circle cx="130.1" cy="237.2" r="1.4" fill="#999999"/>
<circle cx="24.1" cy="223.9" r="2.1" fill="#999999"/>
<circle cx="82.6" cy="233.1" r="1.1" fill="#999999"/>
<circle cx="90.1" cy="339.3" r="1.6" fill="#999999"/>
<circle cx="118.4" cy="56.2" r="2.3" fill="#999999"/>
<circle cx="63.4" cy="253.6" r="1.5" fill="#999999"/>
<circle cx="24.3" cy="131.9" r="1.9" fill="#999999"/>
<circle cx="56.6" cy="369.8" r="0.9" fill="#999999"/>
<circle cx="54.7" cy="362.3" r="1.3" fill="#999999"/>
<circle cx="57.3" cy="221.8" r="1.6" fill="#999999"/>
<circle cx="57.7" cy="272.0" r="1.6" fill="#999999"/>
<circle cx="12.0" cy="95.5" r="1.7" fill="#999999"/>
<circle cx="66.0" cy="321.0" r="1.6" fill="#999999"/>
<circle cx="91.0" cy="294.0" r="1.0" fill="#999999"/>
<circle cx="94.1" cy="179.7" r="1.8" fill="#999999"/>
<circle cx="31.7" cy="335.8" r="1.7" fill="#999999"/>
<circle cx="98.9" cy="182.5" r="1.9" fill="#999999"/>
<circle cx="49.0" cy="311.7" r="1.5" fill="#999999"/>
<circle cx="132.8" cy="367.8" r="1.6" fill="#999999"/>
<circle cx="105.3" cy="343.4" r="1.5" fill="#999999"/>
<circle cx="78.6" cy="74.6" r="1.3" fill="#999999"/>
<circle cx="32.6" cy="363.4" r="0.9" fill="#999999"/>
<circle cx="82.8" cy="195.6" r="1.1" fill="#999999"/>
<circle cx="54.0" cy="207.9" r="2.3" fill="#999999"/>
<circle cx="129.5" cy="346.5" r="1.3" fill="#999999"/>
<circle cx="23.1" cy="286.1" r="1.1" fill="#999999"/>
<circle cx="119.6" cy="44.5" r="1.9" fill="#999999"/>
<circle cx="134.6" cy="77.1" r="2.3" fill="#999999"/>
<circle cx="52.0" cy="345.9" r="1.0" fill="#999999"/>
<circle cx="48.7" cy="318.4" r="1.5" fill="#999999"/>
<circle cx="16.3" cy="194.3" r="1.3" fill="#999999"/>
<circle cx="40.4" cy="279.9" r="1.1" fill="#999999"/>
<circle cx="16.2" cy="195.3" r="2.1" fill="#999999"/>
<circle cx="131.8" cy="303.0" r="1.0" fill="#999999"/>
<circle cx="66.4" cy="72.4" r="1.6" fill="#999999"/>
<circle cx="42.8" cy="327.9" r="1.6" fill="#999999"/>
<circle cx="112.1" cy="178.5" r="1.7" fill="#999999"/>
<circle cx="47.3" cy="271.8" r="1.0" fill="#999999"/>
<circle cx="95.6" cy="293.9" r="2.0" fill="#999999"/>
<circle cx="64.3" cy="123.3" r="1.9" fill="#999999"/>
<circle cx="75.9" cy="130.1" r="2.1" fill="#999999"/>
<circle cx="99.7" cy="266.4" r="1.9" fill="#999999"/>
<circle cx="12.2" cy="73.9" r="2.0" fill="#999999"/>
<circle cx="75.4" cy="107.4" r="1.2" fill="#999999"/>
<circle cx="77.3" cy="315.8" r="1.8" fill="#999999"/>
<circle cx="95.2" cy="341.2" r="1.6" fill="#999999"/>
<circle cx="75.5" cy="296.1" r="1.5" fill="#999999"/>
<circle cx="81.0" cy="274.1" r="1.6" fill="#999999"/>
<circle cx="70.5" cy="315.1" r="1.2" fill="#999999"/>
<circle cx="59.1" cy="251.8" r="2.1" fill="#999999"/>
<circle cx="72.9" cy="278.4" r="1.0" fill="#999999"/>
<circle cx="58.2" cy="224.3" r="2.3" fill="#999999"/>
<circle cx="83.4" cy="186.1" r="1.5" fill="#999999"/>
<circle cx="52.2" cy="250.9" r="1.6" fill="#999999"/>
<circle cx="104.9" cy="348.6" r="1.6" fill="#999999"/>
<circle cx="38.7" cy="251.0" r="2.0" fill="#999999"/>
<circle cx="132.8" cy="73.9" r="1.4" fill="#999999"/>
<circle cx="120.7" cy="54.3" r="1.4" fill="#999999"/>
<circle cx="48.7" cy="75.5" r="1.7" fill="#999999"/>
<circle cx="62.6" cy="248.7" r="1.7" fill="#999999"/>
<circle cx="120.4" cy="330.9" r="1.0" fill="#999999"/>
<circle cx="18.4" cy="240.3" r="1.9" fill="#999999"/>
<circle cx="109.3" cy="139.5" r="2.2" fill="#999999"/>
<circle cx="134.8" cy="241.0" r="1.4" fill="#999999"/>
<circle cx="111.5" cy="359.4" r="1.0" fill="#999999"/>
<circle cx="134.6" cy="175.4" r="1.6" fill="#999999"/>
<circle cx="100.6" cy="364.1" r="1.5" fill="#999999"/>
<circle cx="76.4" cy="161.8" r="1.9" fill="#999999"/>
<circle cx="48.4" cy="346.9" r="1.1" fill="#999999"/>
<circle cx="108.0" cy="258.9" r="1.5" fill="#999999"/>
<circle cx="71.8" cy="191.7" r="2.1" fill="#999999"/>
<circle cx="56.9" cy="259.0" r="2.0" fill="#999999"/>
<circle cx="127.5" cy="294.4" r="1.3" fill="#999999"/>
<circle cx="64.2" cy="235.6" r="1.7" fill="#999999"/>
<circle cx="81.5" cy="369.2" r="1.4" fill="#999999"/>
<circle cx="104.1" cy="173.2" r="2.3" fill="#999999"/>
<circle cx="119.7" cy="275.2" r="1.5" fill="#999999"/>
<circle cx="67.2" cy="363.4" r="1.7" fill="#999999"/>
<circle cx="123.5" cy="90.3" r="1.7" fill="#999999"/>
<circle cx="47.6" cy="260.5" r="1.9" fill="#999999"/>
<circle cx="17.6" cy="366.4" r="1.3" fill="#999999"/>
<circle cx="78.6" cy="338.4" r="1.8" fill="#999999"/>
<circle cx="121.9" cy="232.8" r="1.8" fill="#999999"/>
<circle cx="26.5" cy="317.1" r="1.1" fill="#999999"/>
<circle cx="76.1" cy="349.5" r="1.1" fill="#999999"/>
<circle cx="93.7" cy="81.1" r="2.0" fill="#999999"/>
<circle cx="100.5" cy="75.5" r="2.1" fill="#999999"/>
<circle cx="18.2" cy="344.7" r="1.0" fill="#999999"/>
<circle cx="104.1" cy="246.7" r="1.6" fill="#999999"/>
<circle cx="92.0" cy="198.9" r="2.2" fill="#999999"/>
<circle cx="108.7" cy="93.9" r="1.6" fill="#999999"/>
<circle cx="82.3" cy="292.9" r="1.4" fill="#999999"/>
<circle cx="21.4" cy="164.1" r="2.3" fill="#999999"/>
<circle cx="47.7" cy="195.7" r="2.0" fill="#999999"/>
<circle cx="100.1" cy="197.8" r="1.2" fill="#999999"/>
<circle cx="79.3" cy="292.8" r="1.0" fill="#999999"/>
<circle cx="77.9" cy="228.4" r="2.0" fill="#999999"/>
<circle cx="87.8" cy="340.8" r="1.1" fill="#999999"/>
<circle cx="30.5" cy="246.3" r="1.0" fill="#999999"/>
<circle cx="27.0" cy="89.3" r="1.8" fill="#999999"/>
<circle cx="41.7" cy="61.1" r="1.4" fill="#999999"/>
<circle cx="60.1" cy="86.7" r="1.4" fill="#999999"/>
<circle cx="101.9" cy="327.8" r="0.9" fill="#999999"/>
<circle cx="122.1" cy="318.7" r="1.4" fill="#999999"/>
<circle cx="116.1" cy="159.1" r="1.2" fill="#999999"/>
<circle cx="96.4" cy="177.5" r="1.6" fill="#999999"/>
<circle cx="46.4" cy="352.5" r="1.7" fill="#999999"/>
<circle cx="45.5" cy="313.6" r="1.9" fill="#999999"/>
<circle cx="57.0" cy="265.1" r="1.7" fill="#999999"/>
<circle cx="34.2" cy="62.4" r="2.0" fill="#999999"/>
<circle cx="23.3" cy="318.3" r="1.9" fill="#999999"/>
<circle cx="101.7" cy="175.6" r="1.7" fill="#999999"/>
<circle cx="95.9" cy="250.1" r="1.9" fill="#999999"/>
<circle cx="88.2" cy="309.3" r="1.9" fill="#999999"/>
<circle cx="93.3" cy="62.1" r="2.1" fill="#999999"/>
<circle cx="48.3" cy="348.6" r="1.3" fill="#999999"/>
<circle cx="72.9" cy="349.6" r="1.6" fill="#999999"/>
<circle cx="103.4" cy="181.9" r="2.4" fill="#999999"/>
<circle cx="125.7" cy="236.6" r="2.1" fill="#999999"/>
<circle cx="34.5" cy="286.2" r="1.1" fill="#999999"/>
<circle cx="123.5" cy="369.4" r="1.6" fill="#999999"/>
<circle cx="127.3" cy="266.7" r="1.4" fill="#999999"/>
<circle cx="98.0" cy="154.4" r="1.8" fill="#999999"/>
<circle cx="27.6" cy="191.3" r="2.1" fill="#999999"/>
<circle cx="36.6" cy="348.2" r="1.4" fill="#999999"/>
<circle cx="78.6" cy="239.3" r="1.6" fill="#999999"/>
<circle cx="114.5" cy="240.2" r="1.4" fill="#999999"/>
<circle cx="119.9" cy="48.0" r="1.9" fill="#999999"/>
<circle cx="115.3" cy="184.7" r="1.7" fill="#999999"/>
<circle cx="105.0" cy="97.0" r="1.3" fill="#999999"/>
<circle cx="24.8" cy="144.1" r="2.2" fill="#999999"/>
<circle cx="107.8" cy="266.2" r="1.5" fill="#999999"/>
<circle cx="124.5" cy="89.3" r="2.1" fill="#999999"/>
<circle cx="22.0" cy="233.4" r="1.9" fill="#999999"/>
<circle cx="99.3" cy="171.4" r="2.2" fill="#999999"/>
<circle cx="49.2" cy="355.1" r="1.7" fill="#999999"/>
<circle cx="120.5" cy="295.9" r="1.4" fill="#999999"/>
<circle cx="83.4" cy="303.7" r="1.8" fill="#999999"/>
<circle cx="37.1" cy="207.1" r="1.3" fill="#999999"/>
<circle cx="78.2" cy="262.3" r="1.4" fill="#999999"/>
<circle cx="130.6" cy="358.4" r="1.7" fill="#999999"/>
<circle cx="75.4" cy="317.4" r="1.8" fill="#999999"/>
<circle cx="34.2" cy="306.8" r="1.1" fill="#999999"/>
<circle cx="120.1" cy="285.0" r="1.4" fill="#999999"/>
<circle cx="62.1" cy="270.9" r="1.4" fill="#999999"/>
<circle cx="73.0" cy="110.6" r="2.2" fill="#999999"/>
<circle cx="81.3" cy="108.8" r="2.0" fill="#999999"/>
<circle cx="18.2" cy="338.1" r="1.4" fill="#999999"/>
<circle cx="120.4" cy="138.5" r="1.5" fill="#999999"/>
<circle cx="81.0" cy="340.5" r="1.1" fill="#999999"/>
<circle cx="96.4" cy="338.3" r="1.6" fill="#999999"/>
<circle cx="96.7" cy="131.1" r="1.6" fill="#999999"/>
<circle cx="42.0" cy="274.1" r="1.4" fill="#999999"/>
<circle cx="76.7" cy="364.2" r="1.1" fill="#999999"/>
<circle cx="28.7" cy="227.3" r="1.5" fill="#999999"/>
<circle cx="68.2" cy="128.4" r="2.1" fill="#999999"/>
<circle cx="42.8" cy="210.2" r="1.8" fill="#999999"/>
<circle cx="96.6" cy="369.6" r="1.2" fill="#999999"/>
<circle cx="55.7" cy="324.8" r="1.5" fill="#999999"/>
<circle cx="32.1" cy="214.4" r="2.2" fill="#999999"/>
<circle cx="55.8" cy="353.9" r="1.1" fill="#999999"/>
<circle cx="78.9" cy="346.5" r="1.6" fill="#999999"/>
<circle cx="80.8" cy="240.3" r="2.0" fill="#999999"/>
<circle cx="90.0" cy="250.4" r="1.9" fill="#999999"/>
<circle cx="123.2" cy="258.2" r="1.6" fill="#999999"/>
<circle cx="122.2" cy="169.6" r="1.2" fill="#999999"/>
<circle cx="114.4" cy="189.3" r="1.2" fill="#999999"/>
<circle cx="15.9" cy="139.4" r="2.0" fill="#999999"/>
<circle cx="22.8" cy="128.5" r="1.2" fill="#999999"/>
<circle cx="111.7" cy="300.7" r="1.5" fill="#999999"/>
<circle cx="116.4" cy="245.0" r="1.5" fill="#999999"/>
<circle cx="72.0" cy="190.3" r="2.0" fill="#999999"/>
<circle cx="114.3" cy="252.3" r="1.5" fill="#999999"/>
<circle cx="95.4" cy="211.6" r="1.1" fill="#999999"/>
<circle cx="75.5" cy="275.8" r="2.0" fill="#999999"/>
<circle cx="103.5" cy="326.7" r="1.6" fill="#999999"/>
<circle cx="57.3" cy="268.1" r="1.4" fill="#999999"/>
<circle cx="128.4" cy="179.0" r="2.1" fill="#999999"/>
<circle cx="28.9" cy="334.6" r="1.7" fill="#999999"/>
<circle cx="40.1" cy="179.6" r="2.1" fill="#999999"/>
<circle cx="102.2" cy="263.3" r="1.0" fill="#999999"/>
<circle cx="91.9" cy="311.3" r="1.2" fill="#999999"/>
<circle cx="89.1" cy="204.0" r="2.3" fill="#999999"/>
<circle cx="64.6" cy="82.8" r="1.9" fill="#999999"/>
<circle cx="58.4" cy="297.3" r="1.9" fill="#999999"/>
<circle cx="39.2" cy="276.5" r="1.4" fill="#999999"/>
<circle cx="68.7" cy="113.8" r="2.5" fill="#999999"/>
<circle cx="125.6" cy="84.1" r="1.8" fill="#999999"/>
<circle cx="133.4" cy="262.1" r="1.4" fill="#999999"/>
<circle cx="122.0" cy="249.5" r="1.5" fill="#999999"/>
<circle cx="38.6" cy="306.1" r="1.3" fill="#999999"/>
<circle cx="62.7" cy="312.6" r="1.6" fill="#999999"/>
<circle cx="81.6" cy="267.0" r="1.1" fill="#999999"/>
<circle cx="55.4" cy="140.7" r="2.3" fill="#999999"/>
<circle cx="15.1" cy="325.4" r="1.8" fill="#999999"/>
<circle cx="117.4" cy="168.7" r="1.8" fill="#999999"/>
<circle cx="81.0" cy="219.9" r="1.8" fill="#999999"/>
<circle cx="41.8" cy="272.7" r="1.6" fill="#999999"/>
<circle cx="75.4" cy="113.0" r="2.0" fill="#999999"/>
<circle cx="102.6" cy="90.5" r="1.5" fill="#999999"/>
<circle cx="39.6" cy="256.6" r="2.1" fill="#999999"/>
<circle cx="78.5" cy="343.5" r="1.0" fill="#999999"/>
<circle cx="101.5" cy="238.9" r="1.8" fill="#999999"/>
<circle cx="105.0" cy="261.1" r="2.1" fill="#999999"/>
<circle cx="134.2" cy="147.1" r="1.5" fill="#999999"/>
<circle cx="71.2" cy="79.1" r="2.2" fill="#999999"/>
<circle cx="56.3" cy="214.0" r="1.6" fill="#999999"/>
<circle cx="124.3" cy="108.5" r="1.4" fill="#999999"/>
<circle cx="99.0" cy="104.8" r="1.8" fill="#999999"/>
<circle cx="27.4" cy="293.7" r="1.8" fill="#999999"/>
<circle cx="105.1" cy="178.6" r="1.4" fill="#999999"/>
<circle cx="27.4" cy="266.7" r="1.6" fill="#999999"/>
<circle cx="56.0" cy="120.5" r="2.3" fill="#999999"/>
<circle cx="80.0" cy="294.4" r="1.9" fill="#999999"/>
<circle cx="97.8" cy="312.6" r="1.3" fill="#999999"/>
<circle cx="125.1" cy="77.8" r="2.4" fill="#999999"/>
<circle cx="48.9" cy="113.2" r="1.9" fill="#999999"/>
<circle cx="78.8" cy="102.0" r="2.1" fill="#999999"/>
<circle cx="62.5" cy="74.3" r="1.6" fill="#999999"/>
<circle cx="23.1" cy="271.2" r="1.3" fill="#999999"/>
<circle cx="40.9" cy="276.1" r="1.3" fill="#999999"/>
<circle cx="83.2" cy="105.0" r="2.0" fill="#999999"/>
<circle cx="88.1" cy="331.0" r="1.6" fill="#999999"/>
<circle cx="83.9" cy="311.4" r="1.3" fill="#999999"/>
<circle cx="109.3" cy="333.9" r="1.7" fill="#999999"/>
<circle cx="77.6" cy="292.8" r="0.9" fill="#999999"/>
<circle cx="80.8" cy="76.2" r="2.3" fill="#999999"/>
<circle cx="38.0" cy="355.0" r="0.9" fill="#999999"/>
<circle cx="84.3" cy="260.0" r="2.0" fill="#999999"/>
<circle cx="41.9" cy="132.2" r="2.2" fill="#999999"/>
<circle cx="96.6" cy="154.1" r="2.0" fill="#999999"/>
<circle cx="118.5" cy="59.7" r="1.8" fill="#999999"/>
<circle cx="21.4" cy="337.8" r="1.4" fill="#999999"/>
<circle cx="81.7" cy="342.0" r="1.2" fill="#999999"/>
<circle cx="81.3" cy="132.6" r="1.4" fill="#999999"/>
<circle cx="45.0" cy="348.5" r="1.1" fill="#999999"/>
<circle cx="56.1" cy="31.1" r="2.0" fill="#999999"/>
<circle cx="13.7" cy="219.5" r="1.6" fill="#999999"/>
<circle cx="87.4" cy="213.6" r="2.1" fill="#999999"/>
<circle cx="61.7" cy="297.4" r="1.1" fill="#999999"/>
<circle cx="85.0" cy="315.3" r="1.5" fill="#999999"/>
<circle cx="129.1" cy="360.6" r="1.1" fill="#999999"/>
<circle cx="54.0" cy="109.1" r="2.0" fill="#999999"/>
<circle cx="31.3" cy="125.9" r="1.7" fill="#999999"/>
<circle cx="62.1" cy="361.4" r="1.3" fill="#999999"/>
<circle cx="75.3" cy="204.2" r="1.3" fill="#999999"/>
<circle cx="24.3" cy="287.0" r="1.6" fill="#999999"/>
<circle cx="25.1" cy="216.6" r="2.0" fill="#999999"/>
<circle cx="56.3" cy="106.2" r="2.6" fill="#999999"/>
<circle cx="94.8" cy="177.6" r="2.0" fill="#999999"/>
<circle cx="67.5" cy="345.9" r="1.4" fill="#999999"/>
<circle cx="93.2" cy="194.0" r="2.0" fill="#999999"/>
<circle cx="85.0" cy="369.5" r="1.2" fill="#999999"/>
<circle cx="131.8" cy="306.9" r="1.2" fill="#999999"/>
<circle cx="64.0" cy="117.0" r="2.0" fill="#999999"/>
<circle cx="34.4" cy="114.6" r="1.9" fill="#999999"/>
<circle cx="85.6" cy="45.1" r="1.9" fill="#999999"/>
<circle cx="105.6" cy="163.6" r="1.6" fill="#999999"/>
<circle cx="98.4" cy="292.1" r="1.9" fill="#999999"/>
<circle cx="121.3" cy="269.9" r="1.3" fill="#999999"/>
<circle cx="59.3" cy="193.6" r="2.3" fill="#999999"/>
<circle cx="76.4" cy="119.7" r="2.0" fill="#999999"/>
<circle cx="119.2" cy="256.1" r="1.3" fill="#999999"/>
<circle cx="82.7" cy="171.5" r="1.2" fill="#999999"/>
<circle cx="118.2" cy="256.8" r="1.5" fill="#999999"/>
<circle cx="95.9" cy="180.1" r="1.3" fill="#999999"/>
<circle cx="92.4" cy="112.1" r="2.4" fill="#999999"/>
<circle cx="107.7" cy="346.9" r="1.0" fill="#999999"/>
<circle cx="76.0" cy="147.6" r="2.2" fill="#999999"/>
<circle cx="22.3" cy="229.4" r="1.9" fill="#999999"/>
<circle cx="111.2" cy="247.9" r="1.9" fill="#999999"/>
<circle cx="95.8" cy="201.6" r="2.0" fill="#999999"/>
<circle cx="91.1" cy="350.7" r="1.2" fill="#999999"/>
<circle cx="63.5" cy="164.1" r="1.8" fill="#999999"/>
<circle cx="104.9" cy="254.5" r="1.3" fill="#999999"/>
<circle cx="29.1" cy="94.2" r="1.8" fill="#999999"/>
<circle cx="110.2" cy="103.0" r="1.5" fill="#999999"/>
<circle cx="96.3" cy="136.1" r="1.7" fill="#999999"/>
<circle cx="66.6" cy="366.0" r="1.1" fill="#999999"/>
<circle cx="59.8" cy="106.6" r="1.9" fill="#999999"/>
<circle cx="90.1" cy="66.0" r="1.4" fill="#999999"/>
<circle cx="107.9" cy="167.5" r="1.3" fill="#999999"/>
<circle cx="24.5" cy="190.0" r="1.3" fill="#999999"/>
<circle cx="75.6" cy="268.8" r="1.5" fill="#999999"/>
<circle cx="67.5" cy="74.7" r="1.9" fill="#999999"/>
<circle cx="23.5" cy="263.7" r="1.8" fill="#999999"/>
<circle cx="58.2" cy="187.7" r="1.4" fill="#999999"/>
<circle cx="47.8" cy="122.7" r="2.4" fill="#999999"/>
<circle cx="126.5" cy="315.4" r="1.7" fill="#999999"/>
<circle cx="52.9" cy="338.7" r="1.6" fill="#999999"/>
<circle cx="21.0" cy="199.9" r="1.2" fill="#999999"/>
<circle cx="89.6" cy="297.8" r="1.2" fill="#999999"/>
<circle cx="106.4" cy="209.7" r="1.5" fill="#999999"/>
<circle cx="58.1" cy="256.5" r="1.1" fill="#999999"/>
<circle cx="56.5" cy="245.6" r="1.1" fill="#999999"/>
<circle cx="116.7" cy="93.2" r="1.3" fill="#999999"/>
<circle cx="51.6" cy="227.1" r="1.8" fill="#999999"/>
<circle cx="10.0" cy="343.7" r="1.3" fill="#999999"/>
<circle cx="33.6" cy="181.1" r="2.0" fill="#999999"/>
<circle cx="66.9" cy="216.8" r="1.4" fill="#999999"/>
<circle cx="73.5" cy="360.9" r="1.5" fill="#999999"/>
<circle cx="50.4" cy="233.2" r="1.9" fill="#999999"/>
<circle cx="14.5" cy="346.6" r="1.7" fill="#999999"/>
<circle cx="15.1" cy="290.4" r="1.5" fill="#999999"/>
<circle cx="80.5" cy="326.7" r="1.2" fill="#999999"/>
<circle cx="56.7" cy="279.6" r="1.7" fill="#999999"/>
<circle cx="38.3" cy="304.1" r="1.8" fill="#999999"/>
<circle cx="124.3" cy="308.5" r="1.7" fill="#999999"/>
<circle cx="82.5" cy="114.0" r="1.8" fill="#999999"/>
<circle cx="56.4" cy="117.6" r="2.5" fill="#999999"/>
<circle cx="133.1" cy="367.5" r="1.3" fill="#999999"/>
<circle cx="27.3" cy="100.4" r="1.9" fill="#999999"/>
<circle cx="134.2" cy="358.4" r="1.6" fill="#999999"/>
<circle cx="44.2" cy="362.7" r="1.6" fill="#999999"/>
<circle cx="74.1" cy="205.2" r="1.7" fill="#999999"/>
<circle cx="76.8" cy="337.4" r="1.5" fill="#999999"/>
<circle cx="85.0" cy="330.2" r="1.3" fill="#999999"/>
<circle cx="115.8" cy="250.5" r="1.0" fill="#999999"/>
<circle cx="105.5" cy="171.1" r="1.7" fill="#999999"/>
<circle cx="130.7" cy="259.2" r="1.5" fill="#999999"/>
<circle cx="28.6" cy="88.1" r="2.1" fill="#999999"/>
<circle cx="18.4" cy="324.8" r="1.0" fill="#999999"/>
<circle cx="22.6" cy="208.4" r="1.7" fill="#999999"/>
<circle cx="83.7" cy="73.9" r="1.3" fill="#999999"/>
<circle cx="32.2" cy="124.8" r="2.5" fill="#999999"/>
<circle cx="112.3" cy="263.1" r="1.8" fill="#999999"/>
<circle cx="27.6" cy="193.5" r="1.7" fill="#999999"/>
<circle cx="102.3" cy="304.4" r="1.2" fill="#999999"/>
<circle cx="106.8" cy="142.7" r="2.1" fill="#999999"/>
<circle cx="23.9" cy="198.3" r="1.6" fill="#999999"/>
<circle cx="17.6" cy="333.9" r="1.7" fill="#999999"/>
<circle cx="103.3" cy="245.8" r="1.0" fill="#999999"/>
<circle cx="99.6" cy="318.0" r="1.1" fill="#999999"/>
<circle cx="26.3" cy="98.6" r="2.2" fill="#999999"/>
<circle cx="41.4" cy="332.1" r="1.0" fill="#999999"/>
<circle cx="61.9" cy="77.5" r="1.2" fill="#999999"/>
<circle cx="62.1" cy="158.7" r="1.5" fill="#999999"/>
<circle cx="133.6" cy="322.1" r="1.7" fill="#999999"/>
<circle cx="85.2" cy="360.9" r="1.6" fill="#999999"/>
<circle cx="92.2" cy="342.8" r="1.4" fill="#999999"/>
<circle cx="121.1" cy="330.6" r="1.7" fill="#999999"/>
<circle cx="89.3" cy="217.9" r="1.7" fill="#999999"/>
<circle cx="132.1" cy="351.7" r="1.1" fill="#999999"/>
<circle cx="39.9" cy="316.3" r="1.6" fill="#999999"/>
<circle cx="25.7" cy="227.8" r="2.0" fill="#999999"/>
<circle cx="13.6" cy="349.4" r="1.7" fill="#999999"/>
<circle cx="93.0" cy="148.7" r="2.1" fill="#999999"/>
<circle cx="17.4" cy="111.3" r="1.4" fill="#999999"/>
<circle cx="90.4" cy="235.7" r="2.0" fill="#999999"/>
<circle cx="125.3" cy="210.6" r="1.2" fill="#999999"/>
<circle cx="42.0" cy="360.5" r="1.0" fill="#999999"/>
<circle cx="107.4" cy="134.6" r="2.5" fill="#999999"/>
<circle cx="111.2" cy="289.7" r="1.9" fill="#999999"/>
<circle cx="84.6" cy="246.4" r="1.3" fill="#999999"/>
<circle cx="18.7" cy="228.1" r="2.0" fill="#999999"/>
<circle cx="131.5" cy="95.2" r="2.3" fill="#999999"/>
<circle cx="51.6" cy="348.9" r="1.4" fill="#999999"/>
<circle cx="42.0" cy="275.8" r="1.4" fill="#999999"/>
<circle cx="100.4" cy="311.6" r="1.1" fill="#999999"/>
<circle cx="99.6" cy="304.6" r="1.4" fill="#999999"/>
<circle cx="10.6" cy="149.8" r="1.6" fill="#999999"/>
<circle cx="109.4" cy="102.2" r="2.2" fill="#999999"/>
<circle cx="84.4" cy="210.7" r="1.4" fill="#999999"/>
<circle cx="34.0" cy="230.5" r="1.1" fill="#999999"/>
<circle cx="37.5" cy="99.4" r="1.2" fill="#999999"/>
<circle cx="76.3" cy="142.0" r="1.4" fill="#999999"/>
<circle cx="99.0" cy="337.9" r="1.0" fill="#999999"/>
<circle cx="75.6" cy="120.6" r="1.9" fill="#999999"/>
<circle cx="47.5" cy="194.5" r="2.2" fill="#999999"/>
<circle cx="121.4" cy="150.1" r="1.4" fill="#999999"/>
<circle cx="79.4" cy="301.3" r="1.4" fill="#999999"/>
<circle cx="38.2" cy="332.9" r="1.2" fill="#999999"/>
<circle cx="98.1" cy="237.4" r="1.6" fill="#999999"/>
<circle cx="88.9" cy="88.0" r="2.4" fill="#999999"/>
<circle cx="25.3" cy="142.2" r="2.5" fill="#999999"/>
<circle cx="81.9" cy="197.0" r="2.3" fill="#999999"/>
<circle cx="40.6" cy="291.7" r="1.2" fill="#999999"/>
<circle cx="27.1" cy="211.9" r="1.8" fill="#999999"/>
<circle cx="99.4" cy="106.8" r="1.9" fill="#999999"/>
<circle cx="60.0" cy="181.9" r="1.4" fill="#999999"/>
<circle cx="25.3" cy="277.2" r="1.7" fill="#999999"/>
<circle cx="89.8" cy="204.5" r="2.3" fill="#999999"/>
<circle cx="76.6" cy="185.7" r="1.6" fill="#999999"/>
<circle cx="25.5" cy="233.7" r="1.3" fill="#999999"/>
<circle cx="60.9" cy="322.8" r="1.7" fill="#999999"/>
<circle cx="64.6" cy="299.5" r="1.2" fill="#999999"/>
<circle cx="121.8" cy="246.4" r="1.6" fill="#999999"/>
<circle cx="98.8" cy="355.2" r="1.7" fill="#999999"/>
<circle cx="114.2" cy="332.1" r="1.2" fill="#999999"/>
<circle cx="128.4" cy="98.9" r="1.4" fill="#999999"/>
<circle cx="117.5" cy="197.9" r="1.2" fill="#999999"/>
<circle cx="82.0" cy="316.5" r="1.0" fill="#999999"/>
<circle cx="98.8" cy="336.7" r="1.6" fill="#999999"/>
<circle cx="110.9" cy="180.0" r="1.8" fill="#999999"/>
<circle cx="28.5" cy="35.4" r="1.7" fill="#999999"/>
<circle cx="77.8" cy="354.4" r="1.1" fill="#999999"/>
<circle cx="92.8" cy="131.1" r="2.1" fill="#999999"/>
<circle cx="76.8" cy="100.8" r="2.2" fill="#999999"/>
<circle cx="126.0" cy="99.1" r="1.4" fill="#999999"/>
<circle cx="39.7" cy="255.4" r="1.3" fill="#999999"/>
<circle cx="62.3" cy="87.6" r="1.3" fill="#999999"/>
<circle cx="10.6" cy="259.2" r="1.5" fill="#999999"/>
<circle cx="121.1" cy="238.9" r="1.5" fill="#999999"/>
<circle cx="63.4" cy="139.1" r="1.4" fill="#999999"/>
<circle cx="27.9" cy="100.7" r="1.3" fill="#999999"/>
<circle cx="107.5" cy="182.2" r="1.2" fill="#999999"/>
<circle cx="117.9" cy="345.2" r="1.0" fill="#999999"/>
<circle cx="39.7" cy="359.9" r="0.9" fill="#999999"/>
<circle cx="110.5" cy="335.1" r="1.1" fill="#999999"/>
<circle cx="74.1" cy="347.6" r="1.6" fill="#999999"/>
<circle cx="65.3" cy="264.4" r="1.5" fill="#999999"/>
<circle cx="78.8" cy="319.6" r="1.3" fill="#999999"/>
<circle cx="83.9" cy="293.6" r="1.0" fill="#999999"/>
<circle cx="78.6" cy="107.9" r="2.1" fill="#999999"/>
<circle cx="117.9" cy="341.9" r="1.1" fill="#999999"/>
<circle cx="22.4" cy="94.3" r="2.2" fill="#999999"/>
<circle cx="124.5" cy="230.9" r="1.5" fill="#999999"/>
<circle cx="122.0" cy="244.4" r="1.4" fill="#999999"/>
<circle cx="47.4" cy="288.9" r="1.6" fill="#999999"/>
<circle cx="129.5" cy="246.0" r="1.0" fill="#999999"/>
<circle cx="108.1" cy="93.0" r="2.1" fill="#999999"/>
<circle cx="124.2" cy="189.2" r="2.0" fill="#999999"/>
<circle cx="107.7" cy="355.3" r="1.4" fill="#999999"/>
<circle cx="125.9" cy="363.8" r="1.1" fill="#999999"/>
<circle cx="112.9" cy="52.3" r="1.3" fill="#999999"/>
<circle cx="65.8" cy="319.4" r="1.2" fill="#999999"/>
<circle cx="20.5" cy="281.6" r="2.0" fill="#999999"/>
<circle cx="108.8" cy="53.5" r="2.1" fill="#999999"/>
<circle cx="31.4" cy="178.3" r="1.3" fill="#999999"/>
<circle cx="10.5" cy="150.6" r="2.0" fill="#999999"/>
<circle cx="91.2" cy="257.3" r="1.2" fill="#999999"/>
<circle cx="95.6" cy="359.9" r="1.5" fill="#999999"/>
<circle cx="116.4" cy="86.8" r="1.9" fill="#999999"/>
<circle cx="13.2" cy="175.4" r="1.4" fill="#999999"/>
<circle cx="83.6" cy="352.1" r="1.3" fill="#999999"/>
<circle cx="85.6" cy="330.2" r="1.6" fill="#999999"/>
<circle cx="109.9" cy="263.3" r="1.4" fill="#999999"/>
<circle cx="46.0" cy="184.9" r="2.4" fill="#999999"/>
<circle cx="27.0" cy="193.7" r="1.7" fill="#999999"/>
<circle cx="72.5" cy="191.1" r="1.2" fill="#999999"/>
<circle cx="50.5" cy="148.2" r="2.0" fill="#999999"/>
<circle cx="92.8" cy="106.3" r="2.3" fill="#999999"/>
<circle cx="70.9" cy="344.6" r="1.7" fill="#999999"/>
<circle cx="30.9" cy="198.6" r="1.1" fill="#999999"/>
<circle cx="25.1" cy="346.9" r="1.6" fill="#999999"/>
<circle cx="44.0" cy="187.5" r="1.9" fill="#999999"/>
<circle cx="48.8" cy="353.8" r="0.9" fill="#999999"/>
<circle cx="40.8" cy="350.7" r="1.3" fill="#999999"/>
<circle cx="49.5" cy="262.5" r="1.7" fill="#999999"/>
<circle cx="47.6" cy="368.1" r="1.1" fill="#999999"/>
<circle cx="24.6" cy="369.9" r="1.3" fill="#999999"/>
<circle cx="81.7" cy="240.2" r="1.2" fill="#999999"/>
<circle cx="27.7" cy="100.1" r="2.2" fill="#999999"/>
<circle cx="115.0" cy="348.4" r="1.4" fill="#999999"/>
<circle cx="31.6" cy="365.3" r="1.1" fill="#999999"/>
<circle cx="102.6" cy="129.7" r="1.9" fill="#999999"/>
<circle cx="82.1" cy="120.4" r="2.0" fill="#999999"/>
<circle cx="73.7" cy="337.2" r="1.3" fill="#999999"/>
<circle cx="66.0" cy="158.1" r="1.7" fill="#999999"/>
<circle cx="75.9" cy="349.6" r="1.1" fill="#999999"/>
<circle cx="14.3" cy="206.1" r="1.2" fill="#999999"/>
<circle cx="101.9" cy="244.8" r="1.1" fill="#999999"/>
<circle cx="59.6" cy="209.8" r="1.9" fill="#999999"/>
<circle cx="97.8" cy="188.7" r="2.0" fill="#999999"/>
<circle cx="62.4" cy="139.8" r="2.0" fill="#999999"/>
<circle cx="98.8" cy="291.6" r="1.1" fill="#999999"/>
<circle cx="125.9" cy="244.5" r="1.7" fill="#999999"/>
<circle cx="85.2" cy="339.0" r="1.5" fill="#999999"/>
<circle cx="78.1" cy="332.6" r="1.5" fill="#999999"/>
<circle cx="37.8" cy="359.7" r="1.6" fill="#999999"/>
<circle cx="50.3" cy="367.9" r="0.9" fill="#999999"/>
<circle cx="42.3" cy="312.2" r="1.1" fill="#999999"/>
<circle cx="13.5" cy="353.5" r="1.6" fill="#999999"/>
<circle cx="72.2" cy="125.5" r="1.3" fill="#999999"/>
<circle cx="77.7" cy="208.4" r="1.8" fill="#999999"/>
<circle cx="28.9" cy="207.8" r="2.2" fill="#999999"/>
<circle cx="18.7" cy="360.5" r="0.8" fill="#999999"/>
<circle cx="127.2" cy="298.3" r="1.8" fill="#999999"/>
<circle cx="11.3" cy="215.2" r="1.2" fill="#999999"/>
<circle cx="90.0" cy="241.1" r="1.6" fill="#999999"/>
<circle cx="67.5" cy="151.8" r="1.5" fill="#999999"/>
<circle cx="33.3" cy="61.0" r="2.3" fill="#999999"/>
<circle cx="36.2" cy="318.8" r="1.7" fill="#999999"/>
<circle cx="39.7" cy="131.7" r="1.5" fill="#999999"/>
<circle cx="42.3" cy="277.1" r="2.0" fill="#999999"/>
<circle cx="80.9" cy="356.9" r="1.2" fill="#999999"/>
<circle cx="13.6" cy="140.2" r="1.2" fill="#999999"/>
<circle cx="64.9" cy="69.4" r="2.4" fill="#999999"/>
<circle cx="121.4" cy="239.7" r="1.9" fill="#999999"/>
<circle cx="66.7" cy="270.3" r="1.6" fill="#999999"/>
<circle cx="65.7" cy="179.9" r="1.5" fill="#999999"/>
<circle cx="88.2" cy="328.5" r="1.5" fill="#999999"/>
<circle cx="92.2" cy="252.1" r="1.9" fill="#999999"/>
<circle cx="26.2" cy="331.0" r="1.3" fill="#999999"/>
<circle cx="21.9" cy="325.5" r="1.8" fill="#999999"/>
<circle cx="65.1" cy="178.1" r="1.9" fill="#999999"/>
<circle cx="39.8" cy="329.6" r="1.7" fill="#999999"/>
<circle cx="29.8" cy="265.8" r="1.8" fill="#999999"/>
<circle cx="31.2" cy="328.7" r="0.9" fill="#999999"/>
<circle cx="28.8" cy="99.4" r="1.6" fill="#999999"/>
<circle cx="131.3" cy="157.4" r="2.2" fill="#999999"/>
<circle cx="50.9" cy="89.4" r="2.2" fill="#999999"/>
<circle cx="14.1" cy="357.6" r="1.4" fill="#999999"/>
<circle cx="45.8" cy="79.2" r="2.2" fill="#999999"/>
<circle cx="14.7" cy="269.5" r="1.4" fill="#999999"/>
<circle cx="124.4" cy="294.8" r="1.0" fill="#999999"/>
<circle cx="133.4" cy="80.6" r="2.0" fill="#999999"/>
<circle cx="118.6" cy="89.8" r="2.6" fill="#999999"/>
<circle cx="34.3" cy="217.8" r="1.5" fill="#999999"/>
<circle cx="115.0" cy="353.5" r="1.3" fill="#999999"/>
<circle cx="15.8" cy="360.4" r="1.4" fill="#999999"/>
<circle cx="89.3" cy="99.9" r="1.8" fill="#999999"/>
<circle cx="32.3" cy="164.7" r="2.1" fill="#999999"/>
<circle cx="96.4" cy="65.3" r="1.4" fill="#999999"/>
<circle cx="18.1" cy="314.1" r="1.4" fill="#999999"/>
<circle cx="29.0" cy="273.3" r="1.1" fill="#999999"/>
<circle cx="67.8" cy="348.8" r="1.5" fill="#999999"/>
<circle cx="77.8" cy="330.0" r="1.1" fill="#999999"/>
<circle cx="28.4" cy="345.6" r="1.4" fill="#999999"/>
<circle cx="38.3" cy="367.7" r="1.5" fill="#999999"/>
<circle cx="41.3" cy="369.1" r="1.2" fill="#999999"/>
<circle cx="37.2" cy="328.8" r="1.8" fill="#999999"/>
<circle cx="42.6" cy="280.2" r="1.8" fill="#999999"/>
<circle cx="50.4" cy="227.3" r="1.7" fill="#999999"/>
<circle cx="111.6" cy="294.4" r="1.2" fill="#999999"/>
<circle cx="126.6" cy="174.9" r="1.8" fill="#999999"/>
<circle cx="50.4" cy="272.3" r="1.0" fill="#999999"/>
<circle cx="73.8" cy="324.8" r="1.7" fill="#999999"/>
<circle cx="89.9" cy="368.2" r="1.1" fill="#999999"/>
<circle cx="34.7" cy="287.2" r="1.6" fill="#999999"/>
<circle cx="89.0" cy="102.7" r="1.3" fill="#999999"/>
<circle cx="128.4" cy="368.2" r="1.3" fill="#999999"/>
<circle cx="130.8" cy="178.2" r="1.9" fill="#999999"/>
<circle cx="94.1" cy="189.0" r="2.3" fill="#999999"/>
<circle cx="118.9" cy="196.0" r="2.0" fill="#999999"/>
<circle cx="79.8" cy="256.6" r="1.8" fill="#999999"/>
<circle cx="112.9" cy="230.6" r="1.4" fill="#999999"/>
<circle cx="119.0" cy="280.5" r="1.8" fill="#999999"/>
<circle cx="79.4" cy="223.8" r="2.1" fill="#999999"/>
<circle cx="131.1" cy="243.7" r="1.7" fill="#999999"/>
<circle cx="27.8" cy="49.9" r="1.2" fill="#999999"/>
<circle cx="101.4" cy="338.5" r="1.0" fill="#999999"/>
<circle cx="34.0" cy="307.3" r="1.5" fill="#999999"/>
<circle cx="27.9" cy="252.3" r="1.2" fill="#999999"/>
<circle cx="92.6" cy="369.7" r="0.9" fill="#999999"/>
<circle cx="93.6" cy="262.4" r="1.4" fill="#999999"/>
<circle cx="112.5" cy="51.5" r="2.0" fill="#999999"/>
<circle cx="124.7" cy="295.0" r="1.3" fill="#999999"/>
<circle cx="84.5" cy="159.2" r="2.5" fill="#999999"/>
<circle cx="66.8" cy="77.6" r="1.2" fill="#999999"/>
<circle cx="84.8" cy="332.5" r="1.1" fill="#999999"/>
<circle cx="68.1" cy="218.3" r="1.3" fill="#999999"/>
<circle cx="17.6" cy="196.8" r="1.4" fill="#999999"/>
<circle cx="33.6" cy="160.6" r="2.5" fill="#999999"/>
<circle cx="47.6" cy="133.5" r="1.7" fill="#999999"/>
<circle cx="87.2" cy="249.0" r="2.0" fill="#999999"/>
<circle cx="66.2" cy="77.4" r="2.3" fill="#999999"/>
<circle cx="62.5" cy="230.5" r="1.5" fill="#999999"/>
<circle cx="131.7" cy="225.6" r="1.8" fill="#999999"/>
<circle cx="132.0" cy="188.3" r="2.2" fill="#999999"/>
<circle cx="55.3" cy="340.9" r="1.6" fill="#999999"/>
<circle cx="26.1" cy="167.5" r="2.3" fill="#999999"/>
<circle cx="121.2" cy="195.2" r="2.4" fill="#999999"/>
<circle cx="58.3" cy="134.0" r="2.5" fill="#999999"/>
<circle cx="114.5" cy="257.4" r="1.7" fill="#999999"/>
<circle cx="119.0" cy="191.6" r="2.0" fill="#999999"/>
<circle cx="48.1" cy="265.4" r="1.4" fill="#999999"/>
<circle cx="114.7" cy="95.0" r="2.0" fill="#999999"/>
<circle cx="112.1" cy="98.8" r="2.6" fill="#999999"/>
<circle cx="131.3" cy="97.3" r="1.7" fill="#999999"/>
<circle cx="66.3" cy="78.2" r="1.4" fill="#999999"/>
<circle cx="12.1" cy="95.7" r="2.4" fill="#999999"/>
<circle cx="85.1" cy="52.4" r="1.5" fill="#999999"/>
<circle cx="128.2" cy="335.6" r="0.9" fill="#999999"/>
<circle cx="107.3" cy="312.8" r="1.6" fill="#999999"/>
<circle cx="133.0" cy="297.1" r="1.7" fill="#999999"/>
<circle cx="83.2" cy="239.7" r="1.3" fill="#999999"/>
<circle cx="51.8" cy="137.0" r="1.8" fill="#999999"/>
<circle cx="11.0" cy="278.7" r="2.0" fill="#999999"/>
<circle cx="39.3" cy="84.3" r="1.9" fill="#999999"/>
<circle cx="111.4" cy="292.7" r="1.7" fill="#999999"/>
<circle cx="89.8" cy="120.5" r="2.4" fill="#999999"/>
<circle cx="116.2" cy="317.4" r="0.9" fill="#999999"/>
<circle cx="39.4" cy="77.8" r="1.4" fill="#999999"/>
<circle cx="82.1" cy="245.9" r="1.0" fill="#999999"/>
<circle cx="98.1" cy="272.5" r="1.0" fill="#999999"/>
<circle cx="118.5" cy="222.3" r="1.9" fill="#999999"/>
<circle cx="69.5" cy="251.0" r="1.3" fill="#999999"/>
<circle cx="24.3" cy="264.9" r="1.3" fill="#999999"/>
<circle cx="96.7" cy="98.9" r="2.1" fill="#999999"/>
<circle cx="109.8" cy="352.4" r="1.4" fill="#999999"/>
<circle cx="47.2" cy="122.9" r="2.3" fill="#999999"/>
<circle cx="74.6" cy="362.8" r="1.4" fill="#999999"/>
<circle cx="53.1" cy="367.2" r="1.4" fill="#999999"/>
<circle cx="60.4" cy="207.8" r="1.6" fill="#999999"/>
<circle cx="61.7" cy="282.6" r="1.2" fill="#999999"/>
<circle cx="38.5" cy="326.6" r="1.1" fill="#999999"/>
<circle cx="79.7" cy="267.0" r="1.3" fill="#999999"/>
<circle cx="57.1" cy="129.2" r="1.9" fill="#999999"/>
<circle cx="28.7" cy="140.7" r="1.5" fill="#999999"/>
<circle cx="75.9" cy="141.5" r="2.4" fill="#999999"/>
<circle cx="122.6" cy="245.8" r="1.3" fill="#999999"/>
<circle cx="108.2" cy="346.4" r="1.6" fill="#999999"/>
<circle cx="56.7" cy="192.8" r="1.4" fill="#999999"/>
<circle cx="47.7" cy="227.5" r="2.2" fill="#999999"/>
<circle cx="122.9" cy="54.2" r="2.6" fill="#999999"/>
<circle cx="103.2" cy="354.1" r="1.4" fill="#999999"/>
<circle cx="84.6" cy="356.8" r="1.4" fill="#999999"/>
<circle cx="25.0" cy="95.8" r="2.0" fill="#999999"/>
<circle cx="99.8" cy="351.9" r="0.9" fill="#999999"/>
<circle cx="37.4" cy="183.0" r="2.3" fill="#999999"/>
<circle cx="128.2" cy="279.8" r="2.7" fill="#a8a8a8"/>
<circle cx="48.6" cy="268.8" r="2.8" fill="#a8a8a8"/>
<circle cx="72.0" cy="332.8" r="2.4" fill="#a8a8a8"/>
<circle cx="65.1" cy="233.9" r="2.7" fill="#a8a8a8"/>
<circle cx="85.5" cy="349.4" r="2.2" fill="#a8a8a8"/>
<circle cx="130.9" cy="300.7" r="2.5" fill="#a8a8a8"/>
<circle cx="14.2" cy="289.1" r="2.8" fill="#a8a8a8"/>
<circle cx="99.7" cy="293.9" r="2.4" fill="#a8a8a8"/>
<circle cx="14.5" cy="232.1" r="2.8" fill="#a8a8a8"/>
<circle cx="77.6" cy="81.3" r="3.2" fill="#a8a8a8"/>
<circle cx="31.7" cy="81.8" r="3.4" fill="#a8a8a8"/>
<circle cx="128.8" cy="171.1" r="2.9" fill="#a8a8a8"/>
<circle cx="116.6" cy="177.1" r="2.8" fill="#a8a8a8"/>
<circle cx="93.9" cy="274.5" r="2.4" fill="#a8a8a8"/>
<circle cx="112.8" cy="327.7" r="2.3" fill="#a8a8a8"/>
<circle cx="37.7" cy="315.5" r="2.5" fill="#a8a8a8"/>
<circle cx="100.7" cy="351.2" r="2.5" fill="#a8a8a8"/>
<circle cx="27.6" cy="185.7" r="2.7" fill="#a8a8a8"/>
<circle cx="93.5" cy="174.9" r="3.4" fill="#a8a8a8"/>
<circle cx="46.3" cy="213.4" r="2.7" fill="#a8a8a8"/>
<circle cx="47.4" cy="339.7" r="2.7" fill="#a8a8a8"/>
<circle cx="21.2" cy="268.5" r="2.7" fill="#a8a8a8"/>
<circle cx="54.4" cy="277.7" r="2.8" fill="#a8a8a8"/>
<circle cx="28.3" cy="219.6" r="3.2" fill="#a8a8a8"/>
<circle cx="100.9" cy="367.4" r="2.5" fill="#a8a8a8"/>
<circle cx="57.8" cy="256.0" r="2.6" fill="#a8a8a8"/>
<circle cx="125.2" cy="363.2" r="2.4" fill="#a8a8a8"/>
<circle cx="60.6" cy="240.8" r="2.6" fill="#a8a8a8"/>
<circle cx="100.3" cy="363.3" r="2.4" fill="#a8a8a8"/>
<circle cx="106.5" cy="108.0" r="3.4" fill="#a8a8a8"/>
<circle cx="35.1" cy="328.5" r="2.7" fill="#a8a8a8"/>
<circle cx="79.5" cy="324.2" r="2.3" fill="#a8a8a8"/>
<circle cx="79.1" cy="257.0" r="2.4" fill="#a8a8a8"/>
<circle cx="120.7" cy="54.4" r="2.9" fill="#a8a8a8"/>
<circle cx="98.2" cy="231.6" r="2.7" fill="#a8a8a8"/>
<circle cx="40.2" cy="211.2" r="2.9" fill="#a8a8a8"/>
<circle cx="42.7" cy="352.5" r="2.3" fill="#a8a8a8"/>
<circle cx="99.8" cy="336.4" r="2.6" fill="#a8a8a8"/>
<circle cx="51.4" cy="368.0" r="2.1" fill="#a8a8a8"/>
<circle cx="10.5" cy="214.5" r="2.7" fill="#a8a8a8"/>
<circle cx="61.8" cy="169.0" r="2.8" fill="#a8a8a8"/>
<circle cx="37.2" cy="258.9" r="2.8" fill="#a8a8a8"/>
<circle cx="61.0" cy="202.8" r="3.3" fill="#a8a8a8"/>
<circle cx="46.8" cy="299.0" r="2.3" fill="#a8a8a8"/>
<circle cx="133.7" cy="348.6" r="2.6" fill="#a8a8a8"/>
<circle cx="93.7" cy="132.9" r="3.2" fill="#a8a8a8"/>
<circle cx="33.9" cy="286.7" r="2.4" fill="#a8a8a8"/>
<circle cx="107.1" cy="359.0" r="2.6" fill="#a8a8a8"/>
<circle cx="54.1" cy="342.0" r="2.7" fill="#a8a8a8"/>
<circle cx="30.3" cy="160.3" r="2.7" fill="#a8a8a8"/>
<circle cx="98.9" cy="41.2" r="3.0" fill="#a8a8a8"/>
<circle cx="125.1" cy="110.3" r="3.3" fill="#a8a8a8"/>
<circle cx="118.2" cy="348.3" r="2.4" fill="#a8a8a8"/>
<circle cx="20.1" cy="305.6" r="2.3" fill="#a8a8a8"/>
<circle cx="30.9" cy="356.7" r="2.4" fill="#a8a8a8"/>
<circle cx="42.8" cy="337.4" r="2.3" fill="#a8a8a8"/>
<circle cx="38.2" cy="283.8" r="2.9" fill="#a8a8a8"/>
<circle cx="81.8" cy="102.6" r="3.1" fill="#a8a8a8"/>
<circle cx="27.6" cy="34.0" r="3.3" fill="#a8a8a8"/>
<circle cx="97.8" cy="82.2" r="2.9" fill="#a8a8a8"/>
<circle cx="112.8" cy="255.9" r="3.0" fill="#a8a8a8"/>
<circle cx="120.4" cy="60.4" r="2.8" fill="#a8a8a8"/>
<circle cx="86.5" cy="201.7" r="2.6" fill="#a8a8a8"/>
<circle cx="68.1" cy="242.4" r="2.8" fill="#a8a8a8"/>
<circle cx="89.3" cy="267.3" r="2.6" fill="#a8a8a8"/>
<circle cx="31.5" cy="325.8" r="2.3" fill="#a8a8a8"/>
<circle cx="22.5" cy="204.9" r="3.0" fill="#a8a8a8"/>
<circle cx="19.2" cy="277.2" r="2.6" fill="#a8a8a8"/>
<circle cx="25.6" cy="316.3" r="2.7" fill="#a8a8a8"/>
<circle cx="74.3" cy="67.5" r="2.8" fill="#a8a8a8"/>
<circle cx="133.8" cy="41.1" r="3.5" fill="#a8a8a8"/>
<circle cx="109.3" cy="150.5" r="3.0" fill="#a8a8a8"/>
<circle cx="96.6" cy="357.9" r="2.3" fill="#a8a8a8"/>
<circle cx="57.6" cy="236.4" r="3.1" fill="#a8a8a8"/>
<circle cx="103.9" cy="128.0" r="2.9" fill="#a8a8a8"/>
<circle cx="128.7" cy="57.6" r="3.0" fill="#a8a8a8"/>
<circle cx="113.7" cy="186.7" r="3.2" fill="#a8a8a8"/>
<circle cx="90.0" cy="367.6" r="2.6" fill="#a8a8a8"/>
<circle cx="70.8" cy="325.4" r="2.5" fill="#a8a8a8"/>
<circle cx="71.0" cy="308.7" r="2.7" fill="#a8a8a8"/>
<circle cx="58.6" cy="326.7" r="2.3" fill="#a8a8a8"/>
<circle cx="95.8" cy="113.4" r="3.4" fill="#a8a8a8"/>
<circle cx="17.3" cy="369.5" r="2.6" fill="#a8a8a8"/>
<circle cx="112.5" cy="224.5" r="2.7" fill="#a8a8a8"/>
<circle cx="127.9" cy="324.7" r="2.4" fill="#a8a8a8"/>
<circle cx="86.6" cy="133.1" r="3.4" fill="#a8a8a8"/>
<circle cx="23.9" cy="245.2" r="2.7" fill="#a8a8a8"/>
<circle cx="12.1" cy="305.5" r="2.3" fill="#a8a8a8"/>
<circle cx="38.2" cy="278.4" r="2.7" fill="#a8a8a8"/>
<circle cx="112.5" cy="299.8" r="2.6" fill="#a8a8a8"/>
<circle cx="64.8" cy="281.1" r="2.5" fill="#a8a8a8"/>
<circle cx="105.2" cy="266.6" r="2.8" fill="#a8a8a8"/>
<circle cx="42.8" cy="200.2" r="2.8" fill="#a8a8a8"/>
<circle cx="122.4" cy="318.9" r="2.3" fill="#a8a8a8"/>
<circle cx="21.0" cy="331.0" r="2.6" fill="#a8a8a8"/>
<circle cx="123.5" cy="166.4" r="2.7" fill="#a8a8a8"/>
<circle cx="59.9" cy="291.2" r="2.6" fill="#a8a8a8"/>
<circle cx="91.3" cy="350.5" r="2.3" fill="#a8a8a8"/>
<circle cx="17.7" cy="93.8" r="2.7" fill="#a8a8a8"/>
<circle cx="24.4" cy="212.4" r="3.2" fill="#a8a8a8"/>
<circle cx="64.2" cy="126.1" r="2.7" fill="#a8a8a8"/>
<circle cx="120.0" cy="361.6" r="2.3" fill="#a8a8a8"/>
<circle cx="95.9" cy="100.3" r="2.7" fill="#a8a8a8"/>
<circle cx="51.6" cy="301.2" r="2.4" fill="#a8a8a8"/>
<circle cx="70.2" cy="213.8" r="2.8" fill="#a8a8a8"/>
<circle cx="96.5" cy="180.6" r="3.1" fill="#a8a8a8"/>
<circle cx="33.8" cy="186.9" r="2.9" fill="#a8a8a8"/>
<circle cx="130.9" cy="233.3" r="2.9" fill="#a8a8a8"/>
<circle cx="91.8" cy="234.8" r="2.6" fill="#a8a8a8"/>
<circle cx="85.8" cy="346.0" r="2.4" fill="#a8a8a8"/>
<circle cx="46.9" cy="229.7" r="2.8" fill="#a8a8a8"/>
<circle cx="130.5" cy="66.5" r="3.1" fill="#a8a8a8"/>
<circle cx="98.9" cy="173.0" r="2.7" fill="#a8a8a8"/>
<circle cx="95.4" cy="289.3" r="2.5" fill="#a8a8a8"/>
<circle cx="17.4" cy="333.1" r="2.2" fill="#a8a8a8"/>
<circle cx="28.5" cy="128.0" r="3.1" fill="#a8a8a8"/>
<circle cx="116.0" cy="274.8" r="3.0" fill="#a8a8a8"/>
<circle cx="48.1" cy="138.1" r="3.2" fill="#a8a8a8"/>
<circle cx="68.3" cy="72.4" r="3.5" fill="#a8a8a8"/>
<circle cx="119.6" cy="242.0" r="2.8" fill="#a8a8a8"/>
<circle cx="72.1" cy="266.7" r="2.8" fill="#a8a8a8"/>
<circle cx="32.2" cy="248.5" r="2.7" fill="#a8a8a8"/>
<circle cx="17.0" cy="213.6" r="3.1" fill="#a8a8a8"/>
<circle cx="129.3" cy="141.8" r="3.2" fill="#a8a8a8"/>
<circle cx="40.4" cy="306.4" r="2.4" fill="#a8a8a8"/>
<circle cx="123.7" cy="329.2" r="2.7" fill="#a8a8a8"/>
<circle cx="80.2" cy="346.5" r="2.3" fill="#a8a8a8"/>
<circle cx="68.5" cy="153.0" r="3.0" fill="#a8a8a8"/>
<circle cx="122.1" cy="348.7" r="2.4" fill="#a8a8a8"/>
<circle cx="47.5" cy="349.7" r="2.5" fill="#a8a8a8"/>
<circle cx="26.9" cy="141.0" r="2.9" fill="#a8a8a8"/>
<circle cx="11.7" cy="299.7" r="2.4" fill="#a8a8a8"/>
<circle cx="81.6" cy="305.8" r="2.7" fill="#a8a8a8"/>
<circle cx="13.0" cy="149.4" r="3.4" fill="#a8a8a8"/>
<circle cx="30.5" cy="344.1" r="2.2" fill="#a8a8a8"/>
<circle cx="97.2" cy="93.0" r="3.1" fill="#a8a8a8"/>
<circle cx="63.3" cy="198.7" r="3.2" fill="#a8a8a8"/>
<circle cx="78.3" cy="266.8" r="2.8" fill="#a8a8a8"/>
<circle cx="78.9" cy="357.1" r="2.2" fill="#a8a8a8"/>
<circle cx="25.2" cy="335.5" r="2.3" fill="#a8a8a8"/>
<circle cx="76.0" cy="274.0" r="2.4" fill="#a8a8a8"/>
<circle cx="107.7" cy="259.6" r="3.0" fill="#a8a8a8"/>
<circle cx="71.8" cy="291.0" r="2.5" fill="#a8a8a8"/>
<circle cx="104.5" cy="262.6" r="2.8" fill="#a8a8a8"/>
<circle cx="13.4" cy="320.9" r="2.4" fill="#a8a8a8"/>
<circle cx="47.8" cy="199.9" r="2.9" fill="#a8a8a8"/>
<circle cx="24.2" cy="303.0" r="2.4" fill="#a8a8a8"/>
<circle cx="48.4" cy="206.4" r="2.8" fill="#a8a8a8"/>
<circle cx="104.3" cy="202.4" r="3.1" fill="#a8a8a8"/>
<circle cx="29.6" cy="191.5" r="3.2" fill="#a8a8a8"/>
<circle cx="77.8" cy="252.5" r="2.9" fill="#a8a8a8"/>
<circle cx="60.3" cy="295.0" r="2.8" fill="#a8a8a8"/>
<circle cx="116.2" cy="86.5" r="2.9" fill="#a8a8a8"/>
<circle cx="111.5" cy="96.7" r="3.1" fill="#a8a8a8"/>
<circle cx="89.5" cy="322.6" r="2.5" fill="#a8a8a8"/>
<circle cx="77.7" cy="182.7" r="3.2" fill="#a8a8a8"/>
<circle cx="24.3" cy="274.8" r="2.4" fill="#a8a8a8"/>
<circle cx="31.1" cy="181.1" r="3.4" fill="#a8a8a8"/>
<circle cx="48.9" cy="307.4" r="2.7" fill="#a8a8a8"/>
<circle cx="94.1" cy="249.8" r="2.8" fill="#a8a8a8"/>
<circle cx="14.0" cy="247.6" r="2.9" fill="#a8a8a8"/>
<circle cx="54.3" cy="204.5" r="2.8" fill="#a8a8a8"/>
<circle cx="131.6" cy="248.2" r="3.0" fill="#a8a8a8"/>
<circle cx="114.2" cy="54.0" r="2.8" fill="#a8a8a8"/>
<circle cx="55.4" cy="348.2" r="2.2" fill="#a8a8a8"/>
<circle cx="80.3" cy="277.8" r="2.4" fill="#a8a8a8"/>
<circle cx="81.5" cy="136.4" r="3.0" fill="#a8a8a8"/>
<circle cx="118.1" cy="288.6" r="2.9" fill="#a8a8a8"/>
<circle cx="126.1" cy="352.0" r="2.2" fill="#a8a8a8"/>
<circle cx="90.9" cy="70.1" r="2.8" fill="#a8a8a8"/>
<circle cx="89.5" cy="308.4" r="2.4" fill="#a8a8a8"/>
<circle cx="33.3" cy="368.1" r="2.2" fill="#a8a8a8"/>
<circle cx="37.9" cy="291.8" r="2.6" fill="#a8a8a8"/>
<circle cx="14.4" cy="270.9" r="2.7" fill="#a8a8a8"/>
<circle cx="39.5" cy="301.1" r="2.4" fill="#a8a8a8"/>
<circle cx="71.7" cy="35.1" r="3.1" fill="#a8a8a8"/>
<circle cx="14.6" cy="241.3" r="3.0" fill="#a8a8a8"/>
<circle cx="12.5" cy="264.6" r="3.0" fill="#a8a8a8"/>
<circle cx="45.4" cy="360.3" r="2.1" fill="#a8a8a8"/>
<circle cx="18.3" cy="337.6" r="2.6" fill="#a8a8a8"/>
<circle cx="133.5" cy="47.8" r="3.4" fill="#a8a8a8"/>
<circle cx="32.3" cy="170.0" r="3.4" fill="#a8a8a8"/>
<circle cx="68.9" cy="312.3" r="2.6" fill="#a8a8a8"/>
<circle cx="103.3" cy="146.3" r="2.8" fill="#a8a8a8"/>
<circle cx="88.5" cy="169.5" r="2.9" fill="#a8a8a8"/>
<circle cx="133.6" cy="271.1" r="2.9" fill="#a8a8a8"/>
<circle cx="67.0" cy="65.6" r="3.3" fill="#a8a8a8"/>
<circle cx="12.7" cy="64.3" r="2.9" fill="#a8a8a8"/>
<circle cx="104.8" cy="313.1" r="2.7" fill="#a8a8a8"/>
<circle cx="109.5" cy="277.6" r="2.7" fill="#a8a8a8"/>
<circle cx="113.1" cy="113.8" r="2.7" fill="#a8a8a8"/>
<circle cx="85.1" cy="68.9" r="2.8" fill="#a8a8a8"/>
<circle cx="24.5" cy="331.9" r="2.7" fill="#a8a8a8"/>
<circle cx="77.6" cy="121.7" r="2.9" fill="#a8a8a8"/>
<circle cx="108.6" cy="347.3" r="2.2" fill="#a8a8a8"/>
<circle cx="32.1" cy="134.3" r="3.4" fill="#a8a8a8"/>
<circle cx="75.7" cy="196.9" r="2.7" fill="#a8a8a8"/>
<circle cx="56.3" cy="179.7" r="2.8" fill="#a8a8a8"/>
<circle cx="81.5" cy="235.0" r="2.5" fill="#a8a8a8"/>
<circle cx="88.5" cy="41.5" r="3.0" fill="#a8a8a8"/>
<circle cx="64.8" cy="224.7" r="2.6" fill="#a8a8a8"/>
<circle cx="12.8" cy="166.7" r="2.8" fill="#a8a8a8"/>
<circle cx="12.3" cy="316.5" r="2.5" fill="#a8a8a8"/>
<circle cx="74.0" cy="256.9" r="2.9" fill="#a8a8a8"/>
<circle cx="103.7" cy="285.5" r="2.4" fill="#a8a8a8"/>
<circle cx="17.4" cy="135.6" r="3.1" fill="#a8a8a8"/>
<circle cx="35.1" cy="309.7" r="2.5" fill="#a8a8a8"/>
<circle cx="127.9" cy="328.7" r="2.4" fill="#a8a8a8"/>
<circle cx="34.1" cy="264.2" r="2.8" fill="#a8a8a8"/>
<circle cx="87.2" cy="31.0" r="3.2" fill="#a8a8a8"/>
<circle cx="50.5" cy="254.0" r="3.1" fill="#a8a8a8"/>
<circle cx="96.7" cy="314.0" r="2.3" fill="#a8a8a8"/>
<circle cx="69.3" cy="124.7" r="2.8" fill="#a8a8a8"/>
<circle cx="15.4" cy="175.5" r="2.6" fill="#a8a8a8"/>
<circle cx="62.2" cy="347.2" r="2.2" fill="#a8a8a8"/>
<circle cx="75.0" cy="110.3" r="3.3" fill="#a8a8a8"/>
<circle cx="105.0" cy="88.1" r="3.1" fill="#a8a8a8"/>
<circle cx="12.1" cy="204.7" r="2.9" fill="#a8a8a8"/>
<circle cx="104.9" cy="325.5" r="2.5" fill="#a8a8a8"/>
<circle cx="22.6" cy="157.9" r="3.3" fill="#a8a8a8"/>
<circle cx="55.8" cy="210.4" r="3.2" fill="#a8a8a8"/>
<circle cx="116.5" cy="333.8" r="2.2" fill="#a8a8a8"/>
<circle cx="128.3" cy="152.9" r="3.2" fill="#a8a8a8"/>
<circle cx="113.1" cy="303.7" r="2.5" fill="#a8a8a8"/>
<circle cx="87.9" cy="164.2" r="2.9" fill="#a8a8a8"/>
<circle cx="94.5" cy="263.0" r="3.0" fill="#a8a8a8"/>
<circle cx="116.9" cy="142.2" r="3.0" fill="#a8a8a8"/>
<circle cx="113.0" cy="282.6" r="2.8" fill="#a8a8a8"/>
<circle cx="96.6" cy="239.5" r="2.4" fill="#a8a8a8"/>
<circle cx="116.8" cy="321.3" r="2.6" fill="#a8a8a8"/>
<circle cx="112.5" cy="350.3" r="2.6" fill="#a8a8a8"/>
<circle cx="50.2" cy="343.1" r="2.3" fill="#a8a8a8"/>
<circle cx="120.4" cy="304.8" r="2.6" fill="#a8a8a8"/>
<circle cx="14.5" cy="348.5" r="2.2" fill="#a8a8a8"/>
<circle cx="70.8" cy="192.6" r="3.1" fill="#a8a8a8"/>
<circle cx="33.0" cy="300.4" r="2.5" fill="#a8a8a8"/>
<circle cx="109.2" cy="173.8" r="3.0" fill="#a8a8a8"/>
<circle cx="69.4" cy="351.0" r="2.6" fill="#a8a8a8"/>
<circle cx="61.7" cy="186.9" r="2.8" fill="#a8a8a8"/>
<circle cx="66.4" cy="186.2" r="3.3" fill="#a8a8a8"/>
<circle cx="51.9" cy="226.6" r="2.9" fill="#a8a8a8"/>
<circle cx="79.7" cy="210.8" r="2.5" fill="#a8a8a8"/>
<circle cx="44.9" cy="282.1" r="2.4" fill="#a8a8a8"/>
<circle cx="89.5" cy="289.8" r="2.5" fill="#a8a8a8"/>
<circle cx="112.6" cy="289.8" r="2.6" fill="#a8a8a8"/>
<circle cx="100.3" cy="354.9" r="2.4" fill="#a8a8a8"/>
<circle cx="103.3" cy="134.3" r="3.3" fill="#a8a8a8"/>
<circle cx="25.7" cy="310.3" r="2.8" fill="#a8a8a8"/>
<circle cx="21.2" cy="69.6" r="3.2" fill="#a8a8a8"/>
<circle cx="55.4" cy="322.7" r="2.8" fill="#a8a8a8"/>
<circle cx="11.2" cy="354.6" r="2.5" fill="#a8a8a8"/>
<circle cx="100.0" cy="266.3" r="3.0" fill="#a8a8a8"/>
<circle cx="16.9" cy="308.8" r="2.6" fill="#a8a8a8"/>
<circle cx="41.1" cy="346.1" r="2.6" fill="#a8a8a8"/>
<circle cx="124.6" cy="245.9" r="2.6" fill="#a8a8a8"/>
<circle cx="62.2" cy="339.6" r="2.4" fill="#a8a8a8"/>
<circle cx="121.7" cy="299.7" r="2.3" fill="#a8a8a8"/>
<circle cx="75.0" cy="335.6" r="2.2" fill="#a8a8a8"/>
<circle cx="133.4" cy="352.5" r="2.1" fill="#a8a8a8"/>
<circle cx="65.5" cy="36.0" r="3.2" fill="#a8a8a8"/>
<circle cx="105.7" cy="140.6" r="2.9" fill="#a8a8a8"/>
<circle cx="38.5" cy="219.2" r="3.1" fill="#a8a8a8"/>
<circle cx="89.9" cy="259.4" r="2.4" fill="#a8a8a8"/>
<circle cx="125.6" cy="89.6" r="2.8" fill="#a8a8a8"/>
<circle cx="122.0" cy="122.5" r="3.0" fill="#a8a8a8"/>
<circle cx="91.5" cy="123.5" r="3.2" fill="#a8a8a8"/>
<circle cx="132.0" cy="99.0" r="2.8" fill="#a8a8a8"/>
<circle cx="77.9" cy="243.4" r="2.8" fill="#a8a8a8"/>
<circle cx="79.9" cy="363.1" r="2.5" fill="#a8a8a8"/>
<circle cx="38.0" cy="269.5" r="2.9" fill="#a8a8a8"/>
<circle cx="66.9" cy="217.1" r="2.9" fill="#a8a8a8"/>
<circle cx="43.3" cy="217.9" r="3.2" fill="#a8a8a8"/>
<circle cx="58.6" cy="344.8" r="2.6" fill="#a8a8a8"/>
<circle cx="122.4" cy="179.6" r="3.1" fill="#a8a8a8"/>
<circle cx="49.1" cy="169.4" r="3.0" fill="#a8a8a8"/>
<circle cx="24.4" cy="256.4" r="2.6" fill="#a8a8a8"/>
<circle cx="120.7" cy="184.7" r="2.8" fill="#a8a8a8"/>
<circle cx="102.6" cy="102.6" r="3.4" fill="#a8a8a8"/>
<circle cx="106.7" cy="297.1" r="2.4" fill="#a8a8a8"/>
<circle cx="91.4" cy="226.7" r="2.5" fill="#a8a8a8"/>
<circle cx="75.7" cy="341.9" r="2.5" fill="#a8a8a8"/>
<circle cx="47.6" cy="274.4" r="2.6" fill="#a8a8a8"/>
<circle cx="120.1" cy="45.9" r="2.8" fill="#a8a8a8"/>
<circle cx="49.9" cy="154.7" r="3.2" fill="#a8a8a8"/>
<circle cx="58.8" cy="91.6" r="2.7" fill="#a8a8a8"/>
<circle cx="103.0" cy="75.5" r="3.1" fill="#a8a8a8"/>
<circle cx="34.7" cy="227.4" r="2.6" fill="#a8a8a8"/>
<circle cx="52.0" cy="293.9" r="2.6" fill="#a8a8a8"/>
<circle cx="23.9" cy="220.5" r="2.9" fill="#a8a8a8"/>
<circle cx="59.0" cy="120.5" r="2.9" fill="#a8a8a8"/>
<circle cx="128.1" cy="186.5" r="3.2" fill="#a8a8a8"/>
<circle cx="30.5" cy="283.0" r="2.9" fill="#a8a8a8"/>
<circle cx="103.1" cy="160.0" r="3.3" fill="#a8a8a8"/>
<circle cx="44.4" cy="128.6" r="3.1" fill="#a8a8a8"/>
<circle cx="33.8" cy="88.1" r="2.7" fill="#a8a8a8"/>
<circle cx="115.9" cy="355.6" r="2.6" fill="#a8a8a8"/>
<circle cx="28.3" cy="368.1" r="2.4" fill="#a8a8a8"/>
<circle cx="98.2" cy="186.3" r="2.8" fill="#a8a8a8"/>
<circle cx="26.4" cy="292.2" r="2.4" fill="#a8a8a8"/>
<circle cx="127.9" cy="84.3" r="3.1" fill="#a8a8a8"/>
<circle cx="89.7" cy="81.5" r="3.3" fill="#a8a8a8"/>
<circle cx="119.4" cy="336.3" r="2.4" fill="#a8a8a8"/>
<circle cx="93.0" cy="306.2" r="2.3" fill="#a8a8a8"/>
<circle cx="20.2" cy="200.0" r="3.2" fill="#a8a8a8"/>
<circle cx="64.3" cy="309.2" r="2.4" fill="#a8a8a8"/>
<circle cx="23.5" cy="152.5" r="3.1" fill="#a8a8a8"/>
<circle cx="38.9" cy="132.4" r="3.4" fill="#a8a8a8"/>
<circle cx="100.9" cy="121.4" r="3.1" fill="#a8a8a8"/>
<circle cx="55.5" cy="355.5" r="2.2" fill="#a8a8a8"/>
<circle cx="110.7" cy="230.8" r="2.8" fill="#a8a8a8"/>
<circle cx="70.6" cy="345.5" r="2.3" fill="#a8a8a8"/>
<circle cx="75.5" cy="137.3" r="3.3" fill="#a8a8a8"/>
<circle cx="66.9" cy="316.5" r="2.4" fill="#a8a8a8"/>
<circle cx="58.5" cy="269.5" r="3.0" fill="#a8a8a8"/>
<circle cx="52.9" cy="49.5" r="3.4" fill="#a8a8a8"/>
<circle cx="132.5" cy="238.8" r="2.6" fill="#a8a8a8"/>
<circle cx="79.8" cy="369.8" r="2.1" fill="#a8a8a8"/>
<circle cx="56.5" cy="306.9" r="2.7" fill="#a8a8a8"/>
<circle cx="68.0" cy="176.1" r="3.1" fill="#a8a8a8"/>
<circle cx="10.8" cy="328.6" r="2.3" fill="#a8a8a8"/>
<circle cx="103.1" cy="177.6" r="3.0" fill="#a8a8a8"/>
<circle cx="126.4" cy="249.7" r="3.1" fill="#a8a8a8"/>
<circle cx="127.8" cy="319.4" r="2.5" fill="#a8a8a8"/>
<circle cx="125.9" cy="308.5" r="2.4" fill="#a8a8a8"/>
<circle cx="99.2" cy="65.9" r="2.7" fill="#a8a8a8"/>
<circle cx="21.5" cy="367.2" r="2.2" fill="#a8a8a8"/>
<circle cx="105.1" cy="339.9" r="2.7" fill="#a8a8a8"/>
<circle cx="114.4" cy="342.8" r="2.5" fill="#a8a8a8"/>
<circle cx="101.2" cy="325.4" r="2.5" fill="#a8a8a8"/>
<circle cx="127.6" cy="356.9" r="2.2" fill="#a8a8a8"/>
<circle cx="86.8" cy="215.5" r="2.9" fill="#a8a8a8"/>
<circle cx="47.9" cy="319.1" r="2.7" fill="#a8a8a8"/>
<circle cx="77.6" cy="72.5" r="3.1" fill="#a8a8a8"/>
<circle cx="102.1" cy="271.7" r="2.7" fill="#a8a8a8"/>
<circle cx="93.0" cy="334.7" r="2.6" fill="#a8a8a8"/>
<circle cx="124.4" cy="95.9" r="3.0" fill="#a8a8a8"/>
<circle cx="111.9" cy="40.6" r="2.7" fill="#a8a8a8"/>
<circle cx="76.6" cy="364.6" r="2.4" fill="#a8a8a8"/>
<circle cx="108.2" cy="66.9" r="3.3" fill="#a8a8a8"/>
<circle cx="53.1" cy="318.7" r="2.3" fill="#a8a8a8"/>
<circle cx="41.4" cy="314.3" r="2.4" fill="#a8a8a8"/>
<circle cx="119.2" cy="271.9" r="2.8" fill="#a8a8a8"/>
<circle cx="115.9" cy="368.2" r="2.3" fill="#a8a8a8"/>
<circle cx="90.9" cy="180.6" r="3.0" fill="#a8a8a8"/>
<circle cx="126.0" cy="32.8" r="3.5" fill="#a8a8a8"/>
<circle cx="72.7" cy="61.9" r="2.7" fill="#a8a8a8"/>
<circle cx="91.1" cy="103.9" r="2.9" fill="#a8a8a8"/>
<circle cx="93.2" cy="299.5" r="2.5" fill="#a8a8a8"/>
<circle cx="99.2" cy="137.9" r="3.3" fill="#a8a8a8"/>
<circle cx="13.9" cy="129.5" r="3.0" fill="#a8a8a8"/>
<circle cx="134.2" cy="317.5" r="2.6" fill="#a8a8a8"/>
<circle cx="89.0" cy="297.1" r="2.9" fill="#a8a8a8"/>
<circle cx="15.9" cy="327.8" r="2.6" fill="#a8a8a8"/>
<circle cx="90.3" cy="197.1" r="2.8" fill="#a8a8a8"/>
<circle cx="122.9" cy="293.2" r="2.5" fill="#a8a8a8"/>
<circle cx="20.4" cy="342.4" r="2.2" fill="#a8a8a8"/>
<circle cx="61.2" cy="47.4" r="2.9" fill="#a8a8a8"/>
<circle cx="13.3" cy="111.1" r="3.0" fill="#a8a8a8"/>
<circle cx="84.1" cy="367.0" r="2.5" fill="#a8a8a8"/>
<circle cx="79.9" cy="288.9" r="2.3" fill="#a8a8a8"/>
<circle cx="131.2" cy="124.4" r="3.0" fill="#a8a8a8"/>
<circle cx="25.2" cy="325.0" r="2.5" fill="#a8a8a8"/>
<circle cx="105.8" cy="31.9" r="3.3" fill="#a8a8a8"/>
<circle cx="96.9" cy="70.7" r="2.8" fill="#a8a8a8"/>
<circle cx="109.0" cy="248.1" r="2.8" fill="#a8a8a8"/>
<circle cx="72.5" cy="118.9" r="2.7" fill="#a8a8a8"/>
<circle cx="81.7" cy="334.0" r="2.5" fill="#a8a8a8"/>
<circle cx="81.9" cy="297.3" r="2.4" fill="#a8a8a8"/>
<circle cx="67.5" cy="297.9" r="2.3" fill="#a8a8a8"/>
<circle cx="68.0" cy="334.3" r="2.5" fill="#a8a8a8"/>
<circle cx="51.1" cy="88.7" r="3.5" fill="#a8a8a8"/>
<circle cx="86.3" cy="145.9" r="3.4" fill="#a8a8a8"/>
<circle cx="105.3" cy="225.6" r="2.7" fill="#a8a8a8"/>
<circle cx="126.6" cy="102.0" r="3.4" fill="#a8a8a8"/>
<circle cx="26.3" cy="135.9" r="3.5" fill="#a8a8a8"/>
<circle cx="50.9" cy="333.5" r="2.4" fill="#a8a8a8"/>
<circle cx="96.3" cy="60.6" r="3.5" fill="#a8a8a8"/>
<circle cx="119.7" cy="253.4" r="3.0" fill="#a8a8a8"/>
<circle cx="42.7" cy="325.3" r="2.5" fill="#a8a8a8"/>
<circle cx="113.6" cy="324.0" r="2.4" fill="#a8a8a8"/>
<circle cx="47.1" cy="329.5" r="2.5" fill="#a8a8a8"/>
<circle cx="83.5" cy="151.7" r="3.1" fill="#a8a8a8"/>
<circle cx="34.4" cy="342.4" r="2.3" fill="#a8a8a8"/>
<circle cx="127.1" cy="340.3" r="2.5" fill="#a8a8a8"/>
<circle cx="95.6" cy="370.0" r="2.5" fill="#a8a8a8"/>
<circle cx="54.2" cy="310.7" r="2.4" fill="#a8a8a8"/>
<circle cx="34.2" cy="198.2" r="3.2" fill="#a8a8a8"/>
<circle cx="28.8" cy="304.4" r="2.7" fill="#a8a8a8"/>
<circle cx="50.2" cy="130.4" r="3.1" fill="#a8a8a8"/>
<circle cx="58.4" cy="154.4" r="3.4" fill="#a8a8a8"/>
<circle cx="83.9" cy="302.7" r="2.8" fill="#a8a8a8"/>
<circle cx="29.3" cy="279.2" r="2.5" fill="#a8a8a8"/>
<circle cx="71.2" cy="299.3" r="2.5" fill="#a8a8a8"/>
<circle cx="106.1" cy="232.9" r="3.0" fill="#a8a8a8"/>
<circle cx="120.5" cy="247.6" r="3.0" fill="#a8a8a8"/>
<circle cx="132.5" cy="227.9" r="2.8" fill="#a8a8a8"/>
<circle cx="134.8" cy="360.8" r="2.3" fill="#a8a8a8"/>
<circle cx="72.7" cy="207.1" r="2.7" fill="#a8a8a8"/>
<circle cx="92.1" cy="344.9" r="2.3" fill="#a8a8a8"/>
<circle cx="73.7" cy="169.3" r="2.8" fill="#a8a8a8"/>
<circle cx="52.8" cy="314.9" r="2.4" fill="#a8a8a8"/>
<circle cx="127.7" cy="240.8" r="2.8" fill="#a8a8a8"/>
<circle cx="67.4" cy="112.6" r="2.9" fill="#a8a8a8"/>
<circle cx="32.6" cy="331.0" r="2.7" fill="#a8a8a8"/>
<circle cx="55.1" cy="361.4" r="2.2" fill="#a8a8a8"/>
<circle cx="37.4" cy="202.8" r="2.6" fill="#a8a8a8"/>
<circle cx="86.3" cy="330.0" r="2.4" fill="#a8a8a8"/>
<circle cx="101.8" cy="208.7" r="3.2" fill="#a8a8a8"/>
<circle cx="126.9" cy="367.7" r="2.2" fill="#a8a8a8"/>
<circle cx="109.5" cy="361.9" r="2.3" fill="#a8a8a8"/>
<circle cx="58.5" cy="361.0" r="2.2" fill="#a8a8a8"/>
<circle cx="47.8" cy="303.3" r="2.5" fill="#a8a8a8"/>
<circle cx="69.7" cy="259.3" r="2.9" fill="#a8a8a8"/>
<circle cx="40.2" cy="320.6" r="2.6" fill="#a8a8a8"/>
<circle cx="95.8" cy="319.5" r="2.7" fill="#a8a8a8"/>
<circle cx="54.0" cy="286.0" r="2.7" fill="#a8a8a8"/>
<circle cx="51.1" cy="247.3" r="2.7" fill="#a8a8a8"/>
<circle cx="74.7" cy="306.9" r="2.7" fill="#a8a8a8"/>
<circle cx="47.0" cy="38.0" r="3.1" fill="#a8a8a8"/>
<circle cx="31.3" cy="96.3" r="3.4" fill="#a8a8a8"/>
<circle cx="84.0" cy="275.2" r="2.9" fill="#a8a8a8"/>
<circle cx="38.4" cy="232.6" r="2.8" fill="#a8a8a8"/>
<circle cx="56.0" cy="110.6" r="2.9" fill="#a8a8a8"/>
<circle cx="37.5" cy="347.4" r="2.5" fill="#a8a8a8"/>
<circle cx="73.7" cy="351.4" r="2.6" fill="#a8a8a8"/>
<circle cx="75.3" cy="56.8" r="3.4" fill="#a8a8a8"/>
<circle cx="16.5" cy="142.9" r="3.1" fill="#a8a8a8"/>
<circle cx="45.1" cy="333.9" r="2.4" fill="#a8a8a8"/>
<circle cx="112.1" cy="101.8" r="2.7" fill="#a8a8a8"/>
<circle cx="26.6" cy="87.2" r="3.1" fill="#a8a8a8"/>
<circle cx="91.7" cy="325.5" r="2.5" fill="#a8a8a8"/>
<circle cx="76.0" cy="238.3" r="2.5" fill="#a8a8a8"/>
<circle cx="58.2" cy="261.4" r="2.9" fill="#a8a8a8"/>
<circle cx="30.6" cy="275.0" r="2.9" fill="#a8a8a8"/>
<circle cx="86.0" cy="87.7" r="3.0" fill="#a8a8a8"/>
<circle cx="71.6" cy="250.1" r="2.9" fill="#a8a8a8"/>
<circle cx="94.8" cy="363.9" r="2.4" fill="#a8a8a8"/>
<circle cx="123.3" cy="132.1" r="3.4" fill="#a8a8a8"/>
<circle cx="109.1" cy="53.4" r="3.1" fill="#a8a8a8"/>
<circle cx="92.9" cy="245.5" r="2.6" fill="#a8a8a8"/>
<circle cx="112.9" cy="162.4" r="3.1" fill="#a8a8a8"/>
<circle cx="71.3" cy="341.0" r="2.4" fill="#a8a8a8"/>
<circle cx="53.9" cy="242.7" r="2.7" fill="#a8a8a8"/>
<circle cx="50.0" cy="115.8" r="3.0" fill="#a8a8a8"/>
<circle cx="39.2" cy="353.9" r="2.3" fill="#a8a8a8"/>
<circle cx="100.8" cy="252.3" r="2.6" fill="#a8a8a8"/>
<circle cx="123.5" cy="81.5" r="2.9" fill="#a8a8a8"/>
<circle cx="24.1" cy="108.2" r="3.3" fill="#a8a8a8"/>
<circle cx="75.2" cy="188.7" r="3.0" fill="#a8a8a8"/>
<circle cx="33.0" cy="268.3" r="3.0" fill="#a8a8a8"/>
<circle cx="55.3" cy="73.2" r="2.8" fill="#a8a8a8"/>
<circle cx="103.4" cy="49.7" r="2.9" fill="#a8a8a8"/>
<circle cx="118.9" cy="283.9" r="2.5" fill="#a8a8a8"/>
<circle cx="30.3" cy="243.4" r="3.1" fill="#a8a8a8"/>
<circle cx="114.7" cy="127.1" r="3.1" fill="#a8a8a8"/>
<circle cx="60.7" cy="300.2" r="2.8" fill="#a8a8a8"/>
<circle cx="66.6" cy="342.9" r="2.3" fill="#a8a8a8"/>
<circle cx="30.8" cy="54.0" r="3.1" fill="#a8a8a8"/>
<circle cx="14.7" cy="99.4" r="3.0" fill="#a8a8a8"/>
<circle cx="76.4" cy="346.9" r="2.3" fill="#a8a8a8"/>
<circle cx="128.2" cy="279.8" r="1.7" fill="#e4e4e4"/>
<circle cx="48.6" cy="268.8" r="1.8" fill="#f4f4f4"/>
<circle cx="72.0" cy="332.8" r="1.4" fill="#f6f6f6"/>
<circle cx="65.1" cy="233.9" r="1.7" fill="#e4e4e4"/>
<circle cx="85.5" cy="349.4" r="1.2" fill="#e6e6e6"/>
<circle cx="130.9" cy="300.7" r="1.5" fill="#e6e6e6"/>
<circle cx="14.2" cy="289.1" r="1.8" fill="#eeeeee"/>
<circle cx="99.7" cy="293.9" r="1.4" fill="#f0f0f0"/>
<circle cx="14.5" cy="232.1" r="1.8" fill="#e6e6e6"/>
<circle cx="77.6" cy="81.3" r="2.2" fill="#f3f3f3"/>
<circle cx="31.7" cy="81.8" r="2.4" fill="#eaeaea"/>
<circle cx="128.8" cy="171.1" r="1.9" fill="#ebebeb"/>
<circle cx="116.6" cy="177.1" r="1.8" fill="#e8e8e8"/>
<circle cx="93.9" cy="274.5" r="1.4" fill="#eaeaea"/>
<circle cx="112.8" cy="327.7" r="1.3" fill="#e1e1e1"/>
<circle cx="37.7" cy="315.5" r="1.5" fill="#e1e1e1"/>
<circle cx="100.7" cy="351.2" r="1.5" fill="#f6f6f6"/>
<circle cx="27.6" cy="185.7" r="1.7" fill="#e7e7e7"/>
<circle cx="93.5" cy="174.9" r="2.4" fill="#e8e8e8"/>
<circle cx="46.3" cy="213.4" r="1.7" fill="#f6f6f6"/>
<circle cx="47.4" cy="339.7" r="1.7" fill="#e7e7e7"/>
<circle cx="21.2" cy="268.5" r="1.7" fill="#e2e2e2"/>
<circle cx="54.4" cy="277.7" r="1.8" fill="#f4f4f4"/>
<circle cx="28.3" cy="219.6" r="2.2" fill="#e9e9e9"/>
<circle cx="100.9" cy="367.4" r="1.5" fill="#efefef"/>
<circle cx="57.8" cy="256.0" r="1.6" fill="#e7e7e7"/>
<circle cx="125.2" cy="363.2" r="1.4" fill="#e3e3e3"/>
<circle cx="60.6" cy="240.8" r="1.6" fill="#e5e5e5"/>
<circle cx="100.3" cy="363.3" r="1.4" fill="#f1f1f1"/>
<circle cx="106.5" cy="108.0" r="2.4" fill="#ececec"/>
<circle cx="35.1" cy="328.5" r="1.7" fill="#efefef"/>
<circle cx="79.5" cy="324.2" r="1.3" fill="#f1f1f1"/>
<circle cx="79.1" cy="257.0" r="1.4" fill="#ededed"/>
<circle cx="120.7" cy="54.4" r="1.9" fill="#f0f0f0"/>
<circle cx="98.2" cy="231.6" r="1.7" fill="#e4e4e4"/>
<circle cx="40.2" cy="211.2" r="1.9" fill="#e4e4e4"/>
<circle cx="42.7" cy="352.5" r="1.3" fill="#eaeaea"/>
<circle cx="99.8" cy="336.4" r="1.6" fill="#f3f3f3"/>
<circle cx="51.4" cy="368.0" r="1.1" fill="#e5e5e5"/>
<circle cx="10.5" cy="214.5" r="1.7" fill="#f2f2f2"/>
<circle cx="61.8" cy="169.0" r="1.8" fill="#f3f3f3"/>
<circle cx="37.2" cy="258.9" r="1.8" fill="#f1f1f1"/>
<circle cx="61.0" cy="202.8" r="2.3" fill="#e2e2e2"/>
<circle cx="46.8" cy="299.0" r="1.3" fill="#e3e3e3"/>
<circle cx="133.7" cy="348.6" r="1.6" fill="#f2f2f2"/>
<circle cx="93.7" cy="132.9" r="2.2" fill="#e5e5e5"/>
<circle cx="33.9" cy="286.7" r="1.4" fill="#e0e0e0"/>
<circle cx="107.1" cy="359.0" r="1.6" fill="#ededed"/>
<circle cx="54.1" cy="342.0" r="1.7" fill="#f0f0f0"/>
<circle cx="30.3" cy="160.3" r="1.7" fill="#f3f3f3"/>
<circle cx="98.9" cy="41.2" r="2.0" fill="#f0f0f0"/>
<circle cx="125.1" cy="110.3" r="2.3" fill="#eeeeee"/>
<circle cx="118.2" cy="348.3" r="1.4" fill="#e8e8e8"/>
<circle cx="20.1" cy="305.6" r="1.3" fill="#f5f5f5"/>
<circle cx="30.9" cy="356.7" r="1.4" fill="#e6e6e6"/>
<circle cx="42.8" cy="337.4" r="1.3" fill="#eaeaea"/>
<circle cx="38.2" cy="283.8" r="1.9" fill="#e2e2e2"/>
<circle cx="81.8" cy="102.6" r="2.1" fill="#ededed"/>
<circle cx="27.6" cy="34.0" r="2.3" fill="#f0f0f0"/>
<circle cx="97.8" cy="82.2" r="1.9" fill="#ececec"/>
<circle cx="112.8" cy="255.9" r="2.0" fill="#e8e8e8"/>
<circle cx="120.4" cy="60.4" r="1.8" fill="#e1e1e1"/>
<circle cx="86.5" cy="201.7" r="1.6" fill="#eeeeee"/>
<circle cx="68.1" cy="242.4" r="1.8" fill="#e1e1e1"/>
<circle cx="89.3" cy="267.3" r="1.6" fill="#f1f1f1"/>
<circle cx="31.5" cy="325.8" r="1.3" fill="#eeeeee"/>
<circle cx="22.5" cy="204.9" r="2.0" fill="#f4f4f4"/>
<circle cx="19.2" cy="277.2" r="1.6" fill="#efefef"/>
<circle cx="25.6" cy="316.3" r="1.7" fill="#f1f1f1"/>
<circle cx="74.3" cy="67.5" r="1.8" fill="#e6e6e6"/>
<circle cx="133.8" cy="41.1" r="2.5" fill="#f5f5f5"/>
<circle cx="109.3" cy="150.5" r="2.0" fill="#ededed"/>
<circle cx="96.6" cy="357.9" r="1.3" fill="#ececec"/>
<circle cx="57.6" cy="236.4" r="2.1" fill="#e9e9e9"/>
<circle cx="103.9" cy="128.0" r="1.9" fill="#f3f3f3"/>
<circle cx="128.7" cy="57.6" r="2.0" fill="#eeeeee"/>
<circle cx="113.7" cy="186.7" r="2.2" fill="#ededed"/>
<circle cx="90.0" cy="367.6" r="1.6" fill="#eeeeee"/>
<circle cx="70.8" cy="325.4" r="1.5" fill="#f2f2f2"/>
<circle cx="71.0" cy="308.7" r="1.7" fill="#f7f7f7"/>
<circle cx="58.6" cy="326.7" r="1.3" fill="#e4e4e4"/>
<circle cx="95.8" cy="113.4" r="2.4" fill="#f6f6f6"/>
<circle cx="17.3" cy="369.5" r="1.6" fill="#e6e6e6"/>
<circle cx="112.5" cy="224.5" r="1.7" fill="#eaeaea"/>
<circle cx="127.9" cy="324.7" r="1.4" fill="#f1f1f1"/>
<circle cx="86.6" cy="133.1" r="2.4" fill="#f3f3f3"/>
<circle cx="23.9" cy="245.2" r="1.7" fill="#e8e8e8"/>
<circle cx="12.1" cy="305.5" r="1.3" fill="#e7e7e7"/>
<circle cx="38.2" cy="278.4" r="1.7" fill="#ececec"/>
<circle cx="112.5" cy="299.8" r="1.6" fill="#ebebeb"/>
<circle cx="64.8" cy="281.1" r="1.5" fill="#e9e9e9"/>
<circle cx="105.2" cy="266.6" r="1.8" fill="#e7e7e7"/>
<circle cx="42.8" cy="200.2" r="1.8" fill="#e0e0e0"/>
<circle cx="122.4" cy="318.9" r="1.3" fill="#f5f5f5"/>
<circle cx="21.0" cy="331.0" r="1.6" fill="#e8e8e8"/>
<circle cx="123.5" cy="166.4" r="1.7" fill="#f5f5f5"/>
<circle cx="59.9" cy="291.2" r="1.6" fill="#eeeeee"/>
<circle cx="91.3" cy="350.5" r="1.3" fill="#e2e2e2"/>
<circle cx="17.7" cy="93.8" r="1.7" fill="#e4e4e4"/>
<circle cx="24.4" cy="212.4" r="2.2" fill="#e8e8e8"/>
<circle cx="64.2" cy="126.1" r="1.7" fill="#e4e4e4"/>
<circle cx="120.0" cy="361.6" r="1.3" fill="#e2e2e2"/>
<circle cx="95.9" cy="100.3" r="1.7" fill="#f1f1f1"/>
<circle cx="51.6" cy="301.2" r="1.4" fill="#ebebeb"/>
<circle cx="70.2" cy="213.8" r="1.8" fill="#e3e3e3"/>
<circle cx="96.5" cy="180.6" r="2.1" fill="#ececec"/>
<circle cx="33.8" cy="186.9" r="1.9" fill="#f0f0f0"/>
<circle cx="130.9" cy="233.3" r="1.9" fill="#f3f3f3"/>
<circle cx="91.8" cy="234.8" r="1.6" fill="#eaeaea"/>
<circle cx="85.8" cy="346.0" r="1.4" fill="#e5e5e5"/>
<circle cx="46.9" cy="229.7" r="1.8" fill="#e1e1e1"/>
<circle cx="130.5" cy="66.5" r="2.1" fill="#ededed"/>
<circle cx="98.9" cy="173.0" r="1.7" fill="#ececec"/>
<circle cx="95.4" cy="289.3" r="1.5" fill="#f7f7f7"/>
<circle cx="17.4" cy="333.1" r="1.2" fill="#e6e6e6"/>
<circle cx="28.5" cy="128.0" r="2.1" fill="#e1e1e1"/>
<circle cx="116.0" cy="274.8" r="2.0" fill="#ececec"/>
<circle cx="48.1" cy="138.1" r="2.2" fill="#f0f0f0"/>
<circle cx="68.3" cy="72.4" r="2.5" fill="#e5e5e5"/>
<circle cx="119.6" cy="242.0" r="1.8" fill="#e6e6e6"/>
<circle cx="72.1" cy="266.7" r="1.8" fill="#e4e4e4"/>
<circle cx="32.2" cy="248.5" r="1.7" fill="#f3f3f3"/>
<circle cx="17.0" cy="213.6" r="2.1" fill="#ededed"/>
<circle cx="129.3" cy="141.8" r="2.2" fill="#e6e6e6"/>
<circle cx="40.4" cy="306.4" r="1.4" fill="#e8e8e8"/>
<circle cx="123.7" cy="329.2" r="1.7" fill="#e6e6e6"/>
<circle cx="80.2" cy="346.5" r="1.3" fill="#e0e0e0"/>
<circle cx="68.5" cy="153.0" r="2.0" fill="#f3f3f3"/>
<circle cx="122.1" cy="348.7" r="1.4" fill="#f2f2f2"/>
<circle cx="47.5" cy="349.7" r="1.5" fill="#e7e7e7"/>
<circle cx="26.9" cy="141.0" r="1.9" fill="#e8e8e8"/>
<circle cx="11.7" cy="299.7" r="1.4" fill="#f5f5f5"/>
<circle cx="81.6" cy="305.8" r="1.7" fill="#e6e6e6"/>
<circle cx="13.0" cy="149.4" r="2.4" fill="#f0f0f0"/>
<circle cx="30.5" cy="344.1" r="1.2" fill="#f5f5f5"/>
<circle cx="97.2" cy="93.0" r="2.1" fill="#e7e7e7"/>
<circle cx="63.3" cy="198.7" r="2.2" fill="#f2f2f2"/>
<circle cx="78.3" cy="266.8" r="1.8" fill="#e7e7e7"/>
<circle cx="78.9" cy="357.1" r="1.2" fill="#f6f6f6"/>
<circle cx="25.2" cy="335.5" r="1.3" fill="#e3e3e3"/>
<circle cx="76.0" cy="274.0" r="1.4" fill="#e4e4e4"/>
<circle cx="107.7" cy="259.6" r="2.0" fill="#f0f0f0"/>
<circle cx="71.8" cy="291.0" r="1.5" fill="#e8e8e8"/>
<circle cx="104.5" cy="262.6" r="1.8" fill="#eaeaea"/>
<circle cx="13.4" cy="320.9" r="1.4" fill="#f4f4f4"/>
<circle cx="47.8" cy="199.9" r="1.9" fill="#e4e4e4"/>
<circle cx="24.2" cy="303.0" r="1.4" fill="#e5e5e5"/>
<circle cx="48.4" cy="206.4" r="1.8" fill="#eeeeee"/>
<circle cx="104.3" cy="202.4" r="2.1" fill="#e5e5e5"/>
<circle cx="29.6" cy="191.5" r="2.2" fill="#eaeaea"/>
<circle cx="77.8" cy="252.5" r="1.9" fill="#e5e5e5"/>
<circle cx="60.3" cy="295.0" r="1.8" fill="#eeeeee"/>
<circle cx="116.2" cy="86.5" r="1.9" fill="#efefef"/>
<circle cx="111.5" cy="96.7" r="2.1" fill="#e1e1e1"/>
<circle cx="89.5" cy="322.6" r="1.5" fill="#f2f2f2"/>
<circle cx="77.7" cy="182.7" r="2.2" fill="#f5f5f5"/>
<circle cx="24.3" cy="274.8" r="1.4" fill="#e7e7e7"/>
<circle cx="31.1" cy="181.1" r="2.4" fill="#f2f2f2"/>
<circle cx="48.9" cy="307.4" r="1.7" fill="#e7e7e7"/>
<circle cx="94.1" cy="249.8" r="1.8" fill="#f5f5f5"/>
<circle cx="14.0" cy="247.6" r="1.9" fill="#f6f6f6"/>
<circle cx="54.3" cy="204.5" r="1.8" fill="#f0f0f0"/>
<circle cx="131.6" cy="248.2" r="2.0" fill="#e9e9e9"/>
<circle cx="114.2" cy="54.0" r="1.8" fill="#e8e8e8"/>
<circle cx="55.4" cy="348.2" r="1.2" fill="#e4e4e4"/>
<circle cx="80.3" cy="277.8" r="1.4" fill="#f4f4f4"/>
<circle cx="81.5" cy="136.4" r="2.0" fill="#f5f5f5"/>
<circle cx="118.1" cy="288.6" r="1.9" fill="#f0f0f0"/>
<circle cx="126.1" cy="352.0" r="1.2" fill="#f5f5f5"/>
<circle cx="90.9" cy="70.1" r="1.8" fill="#e8e8e8"/>
<circle cx="89.5" cy="308.4" r="1.4" fill="#e2e2e2"/>
<circle cx="33.3" cy="368.1" r="1.2" fill="#ebebeb"/>
<circle cx="37.9" cy="291.8" r="1.6" fill="#f7f7f7"/>
<circle cx="14.4" cy="270.9" r="1.7" fill="#eeeeee"/>
<circle cx="39.5" cy="301.1" r="1.4" fill="#f3f3f3"/>
<circle cx="71.7" cy="35.1" r="2.1" fill="#efefef"/>
<circle cx="14.6" cy="241.3" r="2.0" fill="#e9e9e9"/>
<circle cx="12.5" cy="264.6" r="2.0" fill="#ebebeb"/>
<circle cx="45.4" cy="360.3" r="1.1" fill="#e5e5e5"/>
<circle cx="18.3" cy="337.6" r="1.6" fill="#e9e9e9"/>
<circle cx="133.5" cy="47.8" r="2.4" fill="#f6f6f6"/>
<circle cx="32.3" cy="170.0" r="2.4" fill="#f5f5f5"/>
<circle cx="68.9" cy="312.3" r="1.6" fill="#eeeeee"/>
<circle cx="103.3" cy="146.3" r="1.8" fill="#f0f0f0"/>
<circle cx="88.5" cy="169.5" r="1.9" fill="#e7e7e7"/>
<circle cx="133.6" cy="271.1" r="1.9" fill="#efefef"/>
<circle cx="67.0" cy="65.6" r="2.3" fill="#f5f5f5"/>
<circle cx="12.7" cy="64.3" r="1.9" fill="#e2e2e2"/>
<circle cx="104.8" cy="313.1" r="1.7" fill="#f6f6f6"/>
<circle cx="109.5" cy="277.6" r="1.7" fill="#e4e4e4"/>
<circle cx="113.1" cy="113.8" r="1.7" fill="#e1e1e1"/>
<circle cx="85.1" cy="68.9" r="1.8" fill="#e0e0e0"/>
<circle cx="24.5" cy="331.9" r="1.7" fill="#e9e9e9"/>
<circle cx="77.6" cy="121.7" r="1.9" fill="#f1f1f1"/>
<circle cx="108.6" cy="347.3" r="1.2" fill="#e5e5e5"/>
<circle cx="32.1" cy="134.3" r="2.4" fill="#f6f6f6"/>
<circle cx="75.7" cy="196.9" r="1.7" fill="#f1f1f1"/>
<circle cx="56.3" cy="179.7" r="1.8" fill="#e3e3e3"/>
<circle cx="81.5" cy="235.0" r="1.5" fill="#f2f2f2"/>
<circle cx="88.5" cy="41.5" r="2.0" fill="#e5e5e5"/>
<circle cx="64.8" cy="224.7" r="1.6" fill="#f0f0f0"/>
<circle cx="12.8" cy="166.7" r="1.8" fill="#e1e1e1"/>
<circle cx="12.3" cy="316.5" r="1.5" fill="#f2f2f2"/>
<circle cx="74.0" cy="256.9" r="1.9" fill="#e8e8e8"/>
<circle cx="103.7" cy="285.5" r="1.4" fill="#f0f0f0"/>
<circle cx="17.4" cy="135.6" r="2.1" fill="#e2e2e2"/>
<circle cx="35.1" cy="309.7" r="1.5" fill="#ebebeb"/>
<circle cx="127.9" cy="328.7" r="1.4" fill="#e9e9e9"/>
<circle cx="34.1" cy="264.2" r="1.8" fill="#e3e3e3"/>
<circle cx="87.2" cy="31.0" r="2.2" fill="#eaeaea"/>
<circle cx="50.5" cy="254.0" r="2.1" fill="#f6f6f6"/>
<circle cx="96.7" cy="314.0" r="1.3" fill="#e1e1e1"/>
<circle cx="69.3" cy="124.7" r="1.8" fill="#f6f6f6"/>
<circle cx="15.4" cy="175.5" r="1.6" fill="#e8e8e8"/>
<circle cx="62.2" cy="347.2" r="1.2" fill="#f2f2f2"/>
<circle cx="75.0" cy="110.3" r="2.3" fill="#f3f3f3"/>
<circle cx="105.0" cy="88.1" r="2.1" fill="#ededed"/>
<circle cx="12.1" cy="204.7" r="1.9" fill="#eeeeee"/>
<circle cx="104.9" cy="325.5" r="1.5" fill="#f6f6f6"/>
<circle cx="22.6" cy="157.9" r="2.3" fill="#eaeaea"/>
<circle cx="55.8" cy="210.4" r="2.2" fill="#f2f2f2"/>
<circle cx="116.5" cy="333.8" r="1.2" fill="#ebebeb"/>
<circle cx="128.3" cy="152.9" r="2.2" fill="#e7e7e7"/>
<circle cx="113.1" cy="303.7" r="1.5" fill="#f7f7f7"/>
<circle cx="87.9" cy="164.2" r="1.9" fill="#e3e3e3"/>
<circle cx="94.5" cy="263.0" r="2.0" fill="#f6f6f6"/>
<circle cx="116.9" cy="142.2" r="2.0" fill="#f1f1f1"/>
<circle cx="113.0" cy="282.6" r="1.8" fill="#e4e4e4"/>
<circle cx="96.6" cy="239.5" r="1.4" fill="#f4f4f4"/>
<circle cx="116.8" cy="321.3" r="1.6" fill="#e1e1e1"/>
<circle cx="112.5" cy="350.3" r="1.6" fill="#f0f0f0"/>
<circle cx="50.2" cy="343.1" r="1.3" fill="#f6f6f6"/>
<circle cx="120.4" cy="304.8" r="1.6" fill="#f1f1f1"/>
<circle cx="14.5" cy="348.5" r="1.2" fill="#f5f5f5"/>
<circle cx="70.8" cy="192.6" r="2.1" fill="#f0f0f0"/>
<circle cx="33.0" cy="300.4" r="1.5" fill="#f1f1f1"/>
<circle cx="109.2" cy="173.8" r="2.0" fill="#f5f5f5"/>
<circle cx="69.4" cy="351.0" r="1.6" fill="#f5f5f5"/>
<circle cx="61.7" cy="186.9" r="1.8" fill="#e8e8e8"/>
<circle cx="66.4" cy="186.2" r="2.3" fill="#e4e4e4"/>
<circle cx="51.9" cy="226.6" r="1.9" fill="#e9e9e9"/>
<circle cx="79.7" cy="210.8" r="1.5" fill="#e2e2e2"/>
<circle cx="44.9" cy="282.1" r="1.4" fill="#f5f5f5"/>
<circle cx="89.5" cy="289.8" r="1.5" fill="#eaeaea"/>
<circle cx="112.6" cy="289.8" r="1.6" fill="#f6f6f6"/>
<circle cx="100.3" cy="354.9" r="1.4" fill="#e2e2e2"/>
<circle cx="103.3" cy="134.3" r="2.3" fill="#eaeaea"/>
<circle cx="25.7" cy="310.3" r="1.8" fill="#eeeeee"/>
<circle cx="21.2" cy="69.6" r="2.2" fill="#e8e8e8"/>
<circle cx="55.4" cy="322.7" r="1.8" fill="#f0f0f0"/>
<circle cx="11.2" cy="354.6" r="1.5" fill="#e6e6e6"/>
<circle cx="100.0" cy="266.3" r="2.0" fill="#e1e1e1"/>
<circle cx="16.9" cy="308.8" r="1.6" fill="#f4f4f4"/>
<circle cx="41.1" cy="346.1" r="1.6" fill="#ececec"/>
<circle cx="124.6" cy="245.9" r="1.6" fill="#e7e7e7"/>
<circle cx="62.2" cy="339.6" r="1.4" fill="#f2f2f2"/>
<circle cx="121.7" cy="299.7" r="1.3" fill="#e2e2e2"/>
<circle cx="75.0" cy="335.6" r="1.2" fill="#e7e7e7"/>
<circle cx="133.4" cy="352.5" r="1.1" fill="#ebebeb"/>
<circle cx="65.5" cy="36.0" r="2.2" fill="#f4f4f4"/>
<circle cx="105.7" cy="140.6" r="1.9" fill="#ededed"/>
<circle cx="38.5" cy="219.2" r="2.1" fill="#eaeaea"/>
<circle cx="89.9" cy="259.4" r="1.4" fill="#eeeeee"/>
<circle cx="125.6" cy="89.6" r="1.8" fill="#f5f5f5"/>
<circle cx="122.0" cy="122.5" r="2.0" fill="#e8e8e8"/>
<circle cx="91.5" cy="123.5" r="2.2" fill="#e4e4e4"/>
<circle cx="132.0" cy="99.0" r="1.8" fill="#ececec"/>
<circle cx="77.9" cy="243.4" r="1.8" fill="#e3e3e3"/>
<circle cx="79.9" cy="363.1" r="1.5" fill="#e6e6e6"/>
<circle cx="38.0" cy="269.5" r="1.9" fill="#efefef"/>
<circle cx="66.9" cy="217.1" r="1.9" fill="#eaeaea"/>
<circle cx="43.3" cy="217.9" r="2.2" fill="#e4e4e4"/>
<circle cx="58.6" cy="344.8" r="1.6" fill="#e0e0e0"/>
<circle cx="122.4" cy="179.6" r="2.1" fill="#f6f6f6"/>
<circle cx="49.1" cy="169.4" r="2.0" fill="#f3f3f3"/>
<circle cx="24.4" cy="256.4" r="1.6" fill="#eeeeee"/>
<circle cx="120.7" cy="184.7" r="1.8" fill="#ededed"/>
<circle cx="102.6" cy="102.6" r="2.4" fill="#ebebeb"/>
<circle cx="106.7" cy="297.1" r="1.4" fill="#f6f6f6"/>
<circle cx="91.4" cy="226.7" r="1.5" fill="#f7f7f7"/>
<circle cx="75.7" cy="341.9" r="1.5" fill="#f6f6f6"/>
<circle cx="47.6" cy="274.4" r="1.6" fill="#efefef"/>
<circle cx="120.1" cy="45.9" r="1.8" fill="#efefef"/>
<circle cx="49.9" cy="154.7" r="2.2" fill="#f5f5f5"/>
<circle cx="58.8" cy="91.6" r="1.7" fill="#e5e5e5"/>
<circle cx="103.0" cy="75.5" r="2.1" fill="#ebebeb"/>
<circle cx="34.7" cy="227.4" r="1.6" fill="#ededed"/>
<circle cx="52.0" cy="293.9" r="1.6" fill="#e7e7e7"/>
<circle cx="23.9" cy="220.5" r="1.9" fill="#ededed"/>
<circle cx="59.0" cy="120.5" r="1.9" fill="#ededed"/>
<circle cx="128.1" cy="186.5" r="2.2" fill="#f5f5f5"/>
<circle cx="30.5" cy="283.0" r="1.9" fill="#ebebeb"/>
<circle cx="103.1" cy="160.0" r="2.3" fill="#e9e9e9"/>
<circle cx="44.4" cy="128.6" r="2.1" fill="#ededed"/>
<circle cx="33.8" cy="88.1" r="1.7" fill="#e0e0e0"/>
<circle cx="115.9" cy="355.6" r="1.6" fill="#e1e1e1"/>
<circle cx="28.3" cy="368.1" r="1.4" fill="#e1e1e1"/>
<circle cx="98.2" cy="186.3" r="1.8" fill="#f4f4f4"/>
<circle cx="26.4" cy="292.2" r="1.4" fill="#f4f4f4"/>
<circle cx="127.9" cy="84.3" r="2.1" fill="#f1f1f1"/>
<circle cx="89.7" cy="81.5" r="2.3" fill="#e6e6e6"/>
<circle cx="119.4" cy="336.3" r="1.4" fill="#eeeeee"/>
<circle cx="93.0" cy="306.2" r="1.3" fill="#e3e3e3"/>
<circle cx="20.2" cy="200.0" r="2.2" fill="#ececec"/>
<circle cx="64.3" cy="309.2" r="1.4" fill="#ececec"/>
<circle cx="23.5" cy="152.5" r="2.1" fill="#efefef"/>
<circle cx="38.9" cy="132.4" r="2.4" fill="#e3e3e3"/>
<circle cx="100.9" cy="121.4" r="2.1" fill="#f5f5f5"/>
<circle cx="55.5" cy="355.5" r="1.2" fill="#ededed"/>
<circle cx="110.7" cy="230.8" r="1.8" fill="#f7f7f7"/>
<circle cx="70.6" cy="345.5" r="1.3" fill="#e2e2e2"/>
<circle cx="75.5" cy="137.3" r="2.3" fill="#f1f1f1"/>
<circle cx="66.9" cy="316.5" r="1.4" fill="#f3f3f3"/>
<circle cx="58.5" cy="269.5" r="2.0" fill="#f7f7f7"/>
<circle cx="52.9" cy="49.5" r="2.4" fill="#e5e5e5"/>
<circle cx="132.5" cy="238.8" r="1.6" fill="#e7e7e7"/>
<circle cx="79.8" cy="369.8" r="1.1" fill="#f4f4f4"/>
<circle cx="56.5" cy="306.9" r="1.7" fill="#f0f0f0"/>
<circle cx="68.0" cy="176.1" r="2.1" fill="#e2e2e2"/>
<circle cx="10.8" cy="328.6" r="1.3" fill="#eeeeee"/>
<circle cx="103.1" cy="177.6" r="2.0" fill="#e7e7e7"/>
<circle cx="126.4" cy="249.7" r="2.1" fill="#f2f2f2"/>
<circle cx="127.8" cy="319.4" r="1.5" fill="#e2e2e2"/>
<circle cx="125.9" cy="308.5" r="1.4" fill="#f0f0f0"/>
<circle cx="99.2" cy="65.9" r="1.7" fill="#e9e9e9"/>
<circle cx="21.5" cy="367.2" r="1.2" fill="#e4e4e4"/>
<circle cx="105.1" cy="339.9" r="1.7" fill="#e6e6e6"/>
<circle cx="114.4" cy="342.8" r="1.5" fill="#f2f2f2"/>
<circle cx="101.2" cy="325.4" r="1.5" fill="#f6f6f6"/>
<circle cx="127.6" cy="356.9" r="1.2" fill="#f6f6f6"/>
<circle cx="86.8" cy="215.5" r="1.9" fill="#e1e1e1"/>
<circle cx="47.9" cy="319.1" r="1.7" fill="#f4f4f4"/>
<circle cx="77.6" cy="72.5" r="2.1" fill="#eeeeee"/>
<circle cx="102.1" cy="271.7" r="1.7" fill="#e9e9e9"/>
<circle cx="93.0" cy="334.7" r="1.6" fill="#e1e1e1"/>
<circle cx="124.4" cy="95.9" r="2.0" fill="#f0f0f0"/>
<circle cx="111.9" cy="40.6" r="1.7" fill="#ececec"/>
<circle cx="76.6" cy="364.6" r="1.4" fill="#e5e5e5"/>
<circle cx="108.2" cy="66.9" r="2.3" fill="#ececec"/>
<circle cx="53.1" cy="318.7" r="1.3" fill="#e2e2e2"/>
<circle cx="41.4" cy="314.3" r="1.4" fill="#f6f6f6"/>
<circle cx="119.2" cy="271.9" r="1.8" fill="#f3f3f3"/>
<circle cx="115.9" cy="368.2" r="1.3" fill="#f1f1f1"/>
<circle cx="90.9" cy="180.6" r="2.0" fill="#f7f7f7"/>
<circle cx="126.0" cy="32.8" r="2.5" fill="#e4e4e4"/>
<circle cx="72.7" cy="61.9" r="1.7" fill="#ebebeb"/>
<circle cx="91.1" cy="103.9" r="1.9" fill="#f6f6f6"/>
<circle cx="93.2" cy="299.5" r="1.5" fill="#f5f5f5"/>
<circle cx="99.2" cy="137.9" r="2.3" fill="#efefef"/>
<circle cx="13.9" cy="129.5" r="2.0" fill="#e2e2e2"/>
<circle cx="134.2" cy="317.5" r="1.6" fill="#ebebeb"/>
<circle cx="89.0" cy="297.1" r="1.9" fill="#ededed"/>
<circle cx="15.9" cy="327.8" r="1.6" fill="#ececec"/>
<circle cx="90.3" cy="197.1" r="1.8" fill="#e6e6e6"/>
<circle cx="122.9" cy="293.2" r="1.5" fill="#e5e5e5"/>
<circle cx="20.4" cy="342.4" r="1.2" fill="#e7e7e7"/>
<circle cx="61.2" cy="47.4" r="1.9" fill="#e6e6e6"/>
<circle cx="13.3" cy="111.1" r="2.0" fill="#f6f6f6"/>
<circle cx="84.1" cy="367.0" r="1.5" fill="#e4e4e4"/>
<circle cx="79.9" cy="288.9" r="1.3" fill="#e5e5e5"/>
<circle cx="131.2" cy="124.4" r="2.0" fill="#f6f6f6"/>
<circle cx="25.2" cy="325.0" r="1.5" fill="#e3e3e3"/>
<circle cx="105.8" cy="31.9" r="2.3" fill="#e1e1e1"/>
<circle cx="96.9" cy="70.7" r="1.8" fill="#e9e9e9"/>
<circle cx="109.0" cy="248.1" r="1.8" fill="#ededed"/>
<circle cx="72.5" cy="118.9" r="1.7" fill="#efefef"/>
<circle cx="81.7" cy="334.0" r="1.5" fill="#f4f4f4"/>
<circle cx="81.9" cy="297.3" r="1.4" fill="#f5f5f5"/>
<circle cx="67.5" cy="297.9" r="1.3" fill="#e0e0e0"/>
<circle cx="68.0" cy="334.3" r="1.5" fill="#f2f2f2"/>
<circle cx="51.1" cy="88.7" r="2.5" fill="#e5e5e5"/>
<circle cx="86.3" cy="145.9" r="2.4" fill="#eeeeee"/>
<circle cx="105.3" cy="225.6" r="1.7" fill="#f3f3f3"/>
<circle cx="126.6" cy="102.0" r="2.4" fill="#e3e3e3"/>
<circle cx="26.3" cy="135.9" r="2.5" fill="#ececec"/>
<circle cx="50.9" cy="333.5" r="1.4" fill="#f5f5f5"/>
<circle cx="96.3" cy="60.6" r="2.5" fill="#e9e9e9"/>
<circle cx="119.7" cy="253.4" r="2.0" fill="#efefef"/>
<circle cx="42.7" cy="325.3" r="1.5" fill="#f1f1f1"/>
<circle cx="113.6" cy="324.0" r="1.4" fill="#e8e8e8"/>
<circle cx="47.1" cy="329.5" r="1.5" fill="#e2e2e2"/>
<circle cx="83.5" cy="151.7" r="2.1" fill="#f0f0f0"/>
<circle cx="34.4" cy="342.4" r="1.3" fill="#e0e0e0"/>
<circle cx="127.1" cy="340.3" r="1.5" fill="#f5f5f5"/>
<circle cx="95.6" cy="370.0" r="1.5" fill="#ebebeb"/>
<circle cx="54.2" cy="310.7" r="1.4" fill="#ededed"/>
<circle cx="34.2" cy="198.2" r="2.2" fill="#e3e3e3"/>
<circle cx="28.8" cy="304.4" r="1.7" fill="#ececec"/>
<circle cx="50.2" cy="130.4" r="2.1" fill="#eaeaea"/>
<circle cx="58.4" cy="154.4" r="2.4" fill="#efefef"/>
<circle cx="83.9" cy="302.7" r="1.8" fill="#e2e2e2"/>
<circle cx="29.3" cy="279.2" r="1.5" fill="#e6e6e6"/>
<circle cx="71.2" cy="299.3" r="1.5" fill="#ececec"/>
<circle cx="106.1" cy="232.9" r="2.0" fill="#f2f2f2"/>
<circle cx="120.5" cy="247.6" r="2.0" fill="#efefef"/>
<circle cx="132.5" cy="227.9" r="1.8" fill="#e1e1e1"/>
<circle cx="134.8" cy="360.8" r="1.3" fill="#f5f5f5"/>
<circle cx="72.7" cy="207.1" r="1.7" fill="#e9e9e9"/>
<circle cx="92.1" cy="344.9" r="1.3" fill="#efefef"/>
<circle cx="73.7" cy="169.3" r="1.8" fill="#f6f6f6"/>
<circle cx="52.8" cy="314.9" r="1.4" fill="#f3f3f3"/>
<circle cx="127.7" cy="240.8" r="1.8" fill="#e8e8e8"/>
<circle cx="67.4" cy="112.6" r="1.9" fill="#e6e6e6"/>
<circle cx="32.6" cy="331.0" r="1.7" fill="#ececec"/>
<circle cx="55.1" cy="361.4" r="1.2" fill="#ebebeb"/>
<circle cx="37.4" cy="202.8" r="1.6" fill="#e3e3e3"/>
<circle cx="86.3" cy="330.0" r="1.4" fill="#eeeeee"/>
<circle cx="101.8" cy="208.7" r="2.2" fill="#f3f3f3"/>
<circle cx="126.9" cy="367.7" r="1.2" fill="#e4e4e4"/>
<circle cx="109.5" cy="361.9" r="1.3" fill="#eeeeee"/>
<circle cx="58.5" cy="361.0" r="1.2" fill="#ececec"/>
<circle cx="47.8" cy="303.3" r="1.5" fill="#e5e5e5"/>
<circle cx="69.7" cy="259.3" r="1.9" fill="#f4f4f4"/>
<circle cx="40.2" cy="320.6" r="1.6" fill="#e3e3e3"/>
<circle cx="95.8" cy="319.5" r="1.7" fill="#f2f2f2"/>
<circle cx="54.0" cy="286.0" r="1.7" fill="#e2e2e2"/>
<circle cx="51.1" cy="247.3" r="1.7" fill="#f4f4f4"/>
<circle cx="74.7" cy="306.9" r="1.7" fill="#e6e6e6"/>
<circle cx="47.0" cy="38.0" r="2.1" fill="#f0f0f0"/>
<circle cx="31.3" cy="96.3" r="2.4" fill="#efefef"/>
<circle cx="84.0" cy="275.2" r="1.9" fill="#efefef"/>
<circle cx="38.4" cy="232.6" r="1.8" fill="#f2f2f2"/>
<circle cx="56.0" cy="110.6" r="1.9" fill="#e6e6e6"/>
<circle cx="37.5" cy="347.4" r="1.5" fill="#eaeaea"/>
<circle cx="73.7" cy="351.4" r="1.6" fill="#ededed"/>
<circle cx="75.3" cy="56.8" r="2.4" fill="#f0f0f0"/>
<circle cx="16.5" cy="142.9" r="2.1" fill="#e9e9e9"/>
<circle cx="45.1" cy="333.9" r="1.4" fill="#e8e8e8"/>
<circle cx="112.1" cy="101.8" r="1.7" fill="#eeeeee"/>
<circle cx="26.6" cy="87.2" r="2.1" fill="#e2e2e2"/>
<circle cx="91.7" cy="325.5" r="1.5" fill="#ececec"/>
<circle cx="76.0" cy="238.3" r="1.5" fill="#e9e9e9"/>
<circle cx="58.2" cy="261.4" r="1.9" fill="#f0f0f0"/>
<circle cx="30.6" cy="275.0" r="1.9" fill="#e7e7e7"/>
<circle cx="86.0" cy="87.7" r="2.0" fill="#e1e1e1"/>
<circle cx="71.6" cy="250.1" r="1.9" fill="#f0f0f0"/>
<circle cx="94.8" cy="363.9" r="1.4" fill="#e7e7e7"/>
<circle cx="123.3" cy="132.1" r="2.4" fill="#e2e2e2"/>
<circle cx="109.1" cy="53.4" r="2.1" fill="#e1e1e1"/>
<circle cx="92.9" cy="245.5" r="1.6" fill="#f6f6f6"/>
<circle cx="112.9" cy="162.4" r="2.1" fill="#ebebeb"/>
<circle cx="71.3" cy="341.0" r="1.4" fill="#e3e3e3"/>
<circle cx="53.9" cy="242.7" r="1.7" fill="#e1e1e1"/>
<circle cx="50.0" cy="115.8" r="2.0" fill="#ededed"/>
<circle cx="39.2" cy="353.9" r="1.3" fill="#eaeaea"/>
<circle cx="100.8" cy="252.3" r="1.6" fill="#e1e1e1"/>
<circle cx="123.5" cy="81.5" r="1.9" fill="#ececec"/>
<circle cx="24.1" cy="108.2" r="2.3" fill="#ececec"/>
<circle cx="75.2" cy="188.7" r="2.0" fill="#ededed"/>
<circle cx="33.0" cy="268.3" r="2.0" fill="#e2e2e2"/>
<circle cx="55.3" cy="73.2" r="1.8" fill="#e0e0e0"/>
<circle cx="103.4" cy="49.7" r="1.9" fill="#eeeeee"/>
<circle cx="118.9" cy="283.9" r="1.5" fill="#e0e0e0"/>
<circle cx="30.3" cy="243.4" r="2.1" fill="#ececec"/>
<circle cx="114.7" cy="127.1" r="2.1" fill="#e9e9e9"/>
<circle cx="60.7" cy="300.2" r="1.8" fill="#f4f4f4"/>
<circle cx="66.6" cy="342.9" r="1.3" fill="#ececec"/>
<circle cx="30.8" cy="54.0" r="2.1" fill="#e3e3e3"/>
<circle cx="14.7" cy="99.4" r="2.0" fill="#e3e3e3"/>
<circle cx="76.4" cy="346.9" r="1.3" fill="#f3f3f3"/>
</g></g>
<text transform="translate(236.3,22.9) scale(0.925,1)" font-size="9.6" fill="#383838">dpm-erosion-rate</text>
<rect x="236.5" y="28.30" width="13.2" height="5.10" fill="#f70000" stroke="#1a1a1a" stroke-width="0.9" stroke-opacity="0.8"/>
<rect x="236.5" y="33.40" width="13.2" height="10.55" fill="#f72c00" stroke="#1a1a1a" stroke-width="0.9" stroke-opacity="0.8"/>
<rect x="236.5" y="43.95" width="13.2" height="10.55" fill="#f75900" stroke="#1a1a1a" stroke-width="0.9" stroke-opacity="0.8"/>
<rect x="236.5" y="54.50" width="13.2" height="10.55" fill="#f78600" stroke="#1a1a1a" stroke-width="0.9" stroke-opacity="0.8"/>
<rect x="236.5" y="65.05" width="13.2" height="10.55" fill="#f7b300" stroke="#1a1a1a" stroke-width="0.9" stroke-opacity="0.8"/>
<rect x="236.5" y="75.60" width="13.2" height="10.55" fill="#f7e000" stroke="#1a1a1a" stroke-width="0.9" stroke-opacity="0.8"/>
<rect x="236.5" y="86.15" width="13.2" height="10.55" fill="#e0f700" stroke="#1a1a1a" stroke-width="0.9" stroke-opacity="0.8"/>
<rect x="236.5" y="96.70" width="13.2" height="10.55" fill="#b3f700" stroke="#1a1a1a" stroke-width="0.9" stroke-opacity="0.8"/>
<rect x="236.5" y="107.25" width="13.2" height="10.55" fill="#86f700" stroke="#1a1a1a" stroke-width="0.9" stroke-opacity="0.8"/>
<rect x="236.5" y="117.80" width="13.2" height="10.55" fill="#59f700" stroke="#1a1a1a" stroke-width="0.9" stroke-opacity="0.8"/>
<rect x="236.5" y="128.35" width="13.2" height="10.55" fill="#2cf700" stroke="#1a1a1a" stroke-width="0.9" stroke-opacity="0.8"/>
<rect x="236.5" y="138.90" width="13.2" height="10.55" fill="#00f700" stroke="#1a1a1a" stroke-width="0.9" stroke-opacity="0.8"/>
<rect x="236.5" y="149.45" width="13.2" height="10.55" fill="#00f72c" stroke="#1a1a1a" stroke-width="0.9" stroke-opacity="0.8"/>
<rect x="236.5" y="160.00" width="13.2" height="10.55" fill="#00f759" stroke="#1a1a1a" stroke-width="0.9" stroke-opacity="0.8"/>
<rect x="236.5" y="170.55" width="13.2" height="10.55" fill="#00f786" stroke="#1a1a1a" stroke-width="0.9" stroke-opacity="0.8"/>
<rect x="236.5" y="181.10" width="13.2" height="10.55" fill="#00f7b3" stroke="#1a1a1a" stroke-width="0.9" stroke-opacity="0.8"/>
<rect x="236.5" y="191.65" width="13.2" height="10.55" fill="#00f7e0" stroke="#1a1a1a" stroke-width="0.9" stroke-opacity="0.8"/>
<rect x="236.5" y="202.20" width="13.2" height="10.55" fill="#00e0f7" stroke="#1a1a1a" stroke-width="0.9" stroke-opacity="0.8"/>
<rect x="236.5" y="212.75" width="13.2" height="10.55" fill="#00b3f7" stroke="#1a1a1a" stroke-width="0.9" stroke-opacity="0.8"/>
<rect x="236.5" y="223.30" width="13.2" height="10.55" fill="#0086f7" stroke="#1a1a1a" stroke-width="0.9" stroke-opacity="0.8"/>
<rect x="236.5" y="233.85" width="13.2" height="10.55" fill="#0057ef" stroke="#1a1a1a" stroke-width="0.9" stroke-opacity="0.8"/>
<rect x="236.5" y="244.40" width="13.2" height="10.55" fill="#002ae8" stroke="#1a1a1a" stroke-width="0.9" stroke-opacity="0.8"/>
<rect x="236.5" y="254.95" width="13.2" height="6.05" fill="#0000e0" stroke="#1a1a1a" stroke-width="0.9" stroke-opacity="0.8"/>
<text transform="translate(256.3,38.00) scale(0.95,1)" font-size="8.9" fill="#383838">2</text>
<text transform="translate(256.3,48.55) scale(0.95,1)" font-size="8.9" fill="#383838">1.7</text>
<text transform="translate(256.3,59.10) scale(0.95,1)" font-size="8.9" fill="#383838">1.5</text>
<text transform="translate(256.3,69.65) scale(0.95,1)" font-size="8.9" fill="#383838">1.3</text>
<text transform="translate(256.3,80.20) scale(0.95,1)" font-size="8.9" fill="#383838">1</text>
<text transform="translate(256.3,90.75) scale(0.95,1)" font-size="8.9" fill="#383838">0.7</text>
<text transform="translate(256.3,101.30) scale(0.95,1)" font-size="8.9" fill="#383838">0.5</text>
<text transform="translate(256.3,111.85) scale(0.95,1)" font-size="8.9" fill="#383838">0.3</text>
<text transform="translate(256.3,122.40) scale(0.95,1)" font-size="8.9" fill="#383838">0.1</text>
<text transform="translate(256.3,132.95) scale(0.95,1)" font-size="8.9" fill="#383838">0.05</text>
<text transform="translate(256.3,143.50) scale(0.95,1)" font-size="8.9" fill="#383838">0.01</text>
<text transform="translate(256.3,154.05) scale(0.95,1)" font-size="8.9" fill="#383838">0.009</text>
<text transform="translate(256.3,164.60) scale(0.95,1)" font-size="8.9" fill="#383838">0.008</text>
<text transform="translate(256.3,175.15) scale(0.95,1)" font-size="8.9" fill="#383838">0.007</text>
<text transform="translate(256.3,185.70) scale(0.95,1)" font-size="8.9" fill="#383838">0.006</text>
<text transform="translate(256.3,196.25) scale(0.95,1)" font-size="8.9" fill="#383838">0.005</text>
<text transform="translate(256.3,206.80) scale(0.95,1)" font-size="8.9" fill="#383838">0.004</text>
<text transform="translate(256.3,217.35) scale(0.95,1)" font-size="8.9" fill="#383838">0.003</text>
<text transform="translate(256.3,227.90) scale(0.95,1)" font-size="8.9" fill="#383838">0.002</text>
<text transform="translate(256.3,238.45) scale(0.95,1)" font-size="8.9" fill="#383838">0.001</text>
<text transform="translate(256.3,249.00) scale(0.95,1)" font-size="8.9" fill="#383838">0.0001</text>
<text transform="translate(256.3,259.55) scale(0.95,1)" font-size="8.9" fill="#383838">1E-05</text>
<g fill="#e4e4e4" stroke="#444" stroke-width="0.6"><path d="M193.5,294.6 V288.2 Q194.5,286 197.5,286 Q200.5,286 201,289 V294.6 Z"/><path d="M189.7,295.3 V289.5 Q190.5,288 193.5,288 V294.6 Z" fill="#8a8a8a"/></g>
<g stroke="#111" stroke-width="1.25" fill="none" stroke-linecap="round"><path d="M201.3,294 L197.8,269.8"/><path d="M201.3,294 L179.2,294"/><path d="M201.3,294 L188.5,301.5"/></g>
<text x="195" y="265.6" font-size="6.6" fill="#333">Z</text>
<text x="171" y="296.2" font-size="6.6" fill="#333">Y</text>
<text x="183" y="306" font-size="6.6" fill="#333">X</text>
<rect x="326" y="1" width="537" height="14" fill="#98b1d1"/>
<rect x="326" y="15" width="537" height="344" fill="url(#bg)"/>
<rect x="326" y="359" width="537" height="43" fill="url(#bg2)"/>
<rect x="326" y="358" width="537" height="1" fill="#e8eaf2"/>
<rect x="326" y="359" width="537" height="1" fill="#fafbfd"/>
<rect x="326" y="1" width="103" height="14" fill="url(#dd)"/>
<path d="M428.5,1 V14.5" stroke="#b4b4b4" stroke-width="1"/>
<path d="M326,14.5 H429" stroke="#8c8c8c" stroke-width="1"/>
<path d="M326.5,1 V15" stroke="#5a5a5a" stroke-width="1"/>
<text x="329" y="10.2" font-size="7.8" fill="#1a1a1a" stroke="#1a1a1a" stroke-width="0.15" textLength="87" lengthAdjust="spacingAndGlyphs">1: Particle Traces Colored by</text>
<path d="M421.5,6.5 h5 l-2.5,3 z" fill="#000"/>
<rect x="336.2" y="32.00" width="22.7" height="15.79" fill="#ff0000"/>
<rect x="336.2" y="47.48" width="22.7" height="15.79" fill="#ff5000"/>
<rect x="336.2" y="62.97" width="22.7" height="15.79" fill="#ff8000"/>
<rect x="336.2" y="78.45" width="22.7" height="15.79" fill="#ffa000"/>
<rect x="336.2" y="93.94" width="22.7" height="15.79" fill="#ffc000"/>
<rect x="336.2" y="109.42" width="22.7" height="15.79" fill="#ffe000"/>
<rect x="336.2" y="124.91" width="22.7" height="15.79" fill="#ffff00"/>
<rect x="336.2" y="140.39" width="22.7" height="15.79" fill="#e0ff00"/>
<rect x="336.2" y="155.88" width="22.7" height="15.79" fill="#bcff00"/>
<rect x="336.2" y="171.37" width="22.7" height="15.79" fill="#78ff00"/>
<rect x="336.2" y="186.85" width="22.7" height="15.79" fill="#00ff00"/>
<rect x="336.2" y="202.33" width="22.7" height="15.79" fill="#00ff80"/>
<rect x="336.2" y="217.82" width="22.7" height="15.79" fill="#00ffb0"/>
<rect x="336.2" y="233.31" width="22.7" height="15.79" fill="#00ffdc"/>
<rect x="336.2" y="248.79" width="22.7" height="15.79" fill="#00ffff"/>
<rect x="336.2" y="264.27" width="22.7" height="15.79" fill="#00dcff"/>
<rect x="336.2" y="279.76" width="22.7" height="15.79" fill="#00b8ff"/>
<rect x="336.2" y="295.25" width="22.7" height="15.79" fill="#0090ff"/>
<rect x="336.2" y="310.73" width="22.7" height="15.79" fill="#0058ff"/>
<rect x="336.2" y="326.21" width="22.7" height="15.79" fill="#0000ff"/>
<text x="368.5" y="36.60" font-size="10.4" fill="#141414" stroke="#141414" stroke-width="0.05" textLength="34.1" lengthAdjust="spacingAndGlyphs">2.64e+02</text>
<text x="368.5" y="51.98" font-size="10.4" fill="#141414" stroke="#141414" stroke-width="0.05" textLength="34.1" lengthAdjust="spacingAndGlyphs">2.51e+02</text>
<text x="368.5" y="67.36" font-size="10.4" fill="#141414" stroke="#141414" stroke-width="0.05" textLength="34.1" lengthAdjust="spacingAndGlyphs">2.38e+02</text>
<text x="368.5" y="82.74" font-size="10.4" fill="#141414" stroke="#141414" stroke-width="0.05" textLength="34.1" lengthAdjust="spacingAndGlyphs">2.25e+02</text>
<text x="368.5" y="98.12" font-size="10.4" fill="#141414" stroke="#141414" stroke-width="0.05" textLength="34.1" lengthAdjust="spacingAndGlyphs">2.11e+02</text>
<text x="368.5" y="113.50" font-size="10.4" fill="#141414" stroke="#141414" stroke-width="0.05" textLength="34.1" lengthAdjust="spacingAndGlyphs">1.98e+02</text>
<text x="368.5" y="128.88" font-size="10.4" fill="#141414" stroke="#141414" stroke-width="0.05" textLength="34.1" lengthAdjust="spacingAndGlyphs">1.85e+02</text>
<text x="368.5" y="144.26" font-size="10.4" fill="#141414" stroke="#141414" stroke-width="0.05" textLength="34.1" lengthAdjust="spacingAndGlyphs">1.72e+02</text>
<text x="368.5" y="159.64" font-size="10.4" fill="#141414" stroke="#141414" stroke-width="0.05" textLength="34.1" lengthAdjust="spacingAndGlyphs">1.59e+02</text>
<text x="368.5" y="175.02" font-size="10.4" fill="#141414" stroke="#141414" stroke-width="0.05" textLength="34.1" lengthAdjust="spacingAndGlyphs">1.45e+02</text>
<text x="368.5" y="190.40" font-size="10.4" fill="#141414" stroke="#141414" stroke-width="0.05" textLength="34.1" lengthAdjust="spacingAndGlyphs">1.32e+02</text>
<text x="368.5" y="205.78" font-size="10.4" fill="#141414" stroke="#141414" stroke-width="0.05" textLength="34.1" lengthAdjust="spacingAndGlyphs">1.19e+02</text>
<text x="368.5" y="221.16" font-size="10.4" fill="#141414" stroke="#141414" stroke-width="0.05" textLength="34.1" lengthAdjust="spacingAndGlyphs">1.06e+02</text>
<text x="368.5" y="236.54" font-size="10.4" fill="#141414" stroke="#141414" stroke-width="0.05" textLength="34.1" lengthAdjust="spacingAndGlyphs">9.25e+01</text>
<text x="368.5" y="251.92" font-size="10.4" fill="#141414" stroke="#141414" stroke-width="0.05" textLength="34.1" lengthAdjust="spacingAndGlyphs">7.93e+01</text>
<text x="368.5" y="267.30" font-size="10.4" fill="#141414" stroke="#141414" stroke-width="0.05" textLength="34.1" lengthAdjust="spacingAndGlyphs">6.61e+01</text>
<text x="368.5" y="282.68" font-size="10.4" fill="#141414" stroke="#141414" stroke-width="0.05" textLength="34.1" lengthAdjust="spacingAndGlyphs">5.29e+01</text>
<text x="368.5" y="298.06" font-size="10.4" fill="#141414" stroke="#141414" stroke-width="0.05" textLength="34.1" lengthAdjust="spacingAndGlyphs">3.97e+01</text>
<text x="368.5" y="313.44" font-size="10.4" fill="#141414" stroke="#141414" stroke-width="0.05" textLength="34.1" lengthAdjust="spacingAndGlyphs">2.64e+01</text>
<text x="368.5" y="328.82" font-size="10.4" fill="#141414" stroke="#141414" stroke-width="0.05" textLength="34.1" lengthAdjust="spacingAndGlyphs">1.32e+01</text>
<text x="368.5" y="344.20" font-size="10.4" fill="#141414" stroke="#141414" stroke-width="0.05" textLength="34.1" lengthAdjust="spacingAndGlyphs">0.00e+00</text>
<g stroke="#ffffff" stroke-width="0.85" stroke-opacity="0.85" fill="none" stroke-linejoin="round">
<path d="M522,99.4 L667,15 M538.5,127.8 L709.7,29.5 L701,15 M703.6,15 L711,27.5"/>
<path d="M522,99.4 Q516,118 538.5,127.8"/>
<path d="M447.5,127.2 L517.6,86.6 M447.5,127.2 Q462,96 517.6,86.6"/>
<path d="M447.5,127.2 L477.3,186.9 L546,147.2"/>
<path d="M480,110 L509.8,165.9 M484.9,107.4 L513.5,163.4"/>
<path d="M477.3,186.9 L481,193 M483.7,185.8 L542,157 M486,189 L545,160 M546,147.2 L549,153"/>
</g>
<path d="M517.6,86.6 L546,147.2" stroke="#eef4b0" stroke-width="1" fill="none"/>
<clipPath id="pcyl"><path d="M482.5,193.5 Q512,168 550.1,155 L588.5,234 Q560,258.5 520,269 Z"/></clipPath>
<filter id="ptx" filterUnits="userSpaceOnUse" x="380" y="60" width="300" height="300" color-interpolation-filters="sRGB"><feTurbulence type="fractalNoise" baseFrequency="0.06 0.45" numOctaves="3" seed="5"/><feColorMatrix type="matrix" values="1 0 0 0 0 1 0 0 0 0 1 0 0 0 0 0 0 0 0 1"/><feComponentTransfer><feFuncR type="discrete" tableValues="0.0000 0.0000 0.0000 0.0000 0.0392 0.1020 0.1882 0.2824 0.4078 0.5647"/><feFuncG type="discrete" tableValues="0.0000 0.0000 0.0000 0.0314 0.1882 0.3451 0.5333 0.6902 0.8314 0.9412"/><feFuncB type="discrete" tableValues="0.8784 0.9098 0.9412 0.9490 0.9725 1.0000 1.0000 1.0000 1.0000 1.0000"/></feComponentTransfer></filter>
<g clip-path="url(#pcyl)"><g transform="rotate(-44 535 212)">
<rect x="440" y="120" width="200" height="190" filter="url(#ptx)"/>
</g></g>
<clipPath id="tband"><path d="M482.5,193.5 Q512,168 550.1,155 L551.6,158.5 Q514,172 484.6,198 Z"/></clipPath>
<filter id="btx" filterUnits="userSpaceOnUse" x="470" y="140" width="100" height="70" color-interpolation-filters="sRGB"><feTurbulence type="fractalNoise" baseFrequency="0.25 0.6" numOctaves="2" seed="21"/><feColorMatrix type="matrix" values="1 0 0 0 0 1 0 0 0 0 1 0 0 0 0 0 0 0 0 1"/><feComponentTransfer><feFuncR type="discrete" tableValues="0.0392 0.1255 0.1255 0.1882 0.2510 0.3765 0.6275 0.9098 1.0000 1.0000"/><feFuncG type="discrete" tableValues="0.1882 0.5020 0.8157 0.8784 0.8784 0.9098 0.9412 0.8784 0.5647 0.1882"/><feFuncB type="discrete" tableValues="1.0000 1.0000 0.8784 0.3765 0.2510 0.1882 0.1255 0.1255 0.1255 0.1255"/></feComponentTransfer></filter>
<g clip-path="url(#tband)"><rect x="475" y="145" width="85" height="60" filter="url(#btx)"/></g>
<path d="M485,199.5 Q515,175.5 553,161.5" stroke="#a8e0ff" stroke-width="0.7" fill="none" opacity="0.7"/>
<g stroke="#d8c8ff" stroke-width="0.8" fill="none" opacity="0.9"><path d="M510.4,207.6 L526.9,200.9 L536.6,220.3 L545.5,237.4"/><path d="M497,219 L510.4,217.3 L529.9,219.6 L536.6,221"/><path d="M536.6,227.8 L523.9,236.7 L508,240"/><path d="M564,224.8 L576,216.6"/></g>
<clipPath id="inl"><path d="M404.5,251.7 L495.5,218.6 L506,249.4 L412.7,281.3 Z"/></clipPath>
<g clip-path="url(#inl)">
<rect x="395" y="215" width="125" height="75" fill="#a8b0f6"/>
<path d="M405.6,258.8 l104.6,-38.5" stroke="#0000f8" stroke-width="0.61"/>
<path d="M407.0,262.8 l104.6,-38.5" stroke="#0000f8" stroke-width="0.61"/>
<path d="M409.5,261.6 l104.6,-37.4" stroke="#0000f8" stroke-width="0.89"/>
<path d="M407.5,275.4 l104.6,-37.7" stroke="#0000f8" stroke-width="0.78"/>
<path d="M407.8,282.7 l104.6,-38.0" stroke="#0000f8" stroke-width="0.45"/>
<path d="M406.4,274.1 l104.6,-38.8" stroke="#0000f8" stroke-width="0.89"/>
<path d="M411.9,270.0 l104.6,-38.3" stroke="#0000f8" stroke-width="0.89"/>
<path d="M404.6,275.5 l104.6,-38.9" stroke="#0000f8" stroke-width="0.68"/>
<path d="M409.4,275.2 l104.6,-36.9" stroke="#0000f8" stroke-width="0.48"/>
<path d="M410.7,265.5 l104.6,-37.9" stroke="#0000f8" stroke-width="0.86"/>
<path d="M408.2,264.6 l104.6,-38.8" stroke="#0000f8" stroke-width="0.67"/>
<path d="M405.6,251.3 l104.6,-37.5" stroke="#0000f8" stroke-width="0.86"/>
<path d="M410.8,266.8 l104.6,-38.6" stroke="#0000f8" stroke-width="0.60"/>
<path d="M413.4,274.1 l104.6,-38.0" stroke="#0000f8" stroke-width="0.70"/>
<path d="M406.4,271.0 l104.6,-39.1" stroke="#0000f8" stroke-width="0.64"/>
<path d="M410.9,268.5 l104.6,-37.6" stroke="#0000f8" stroke-width="0.61"/>
<path d="M410.7,273.3 l104.6,-38.2" stroke="#0000f8" stroke-width="0.53"/>
<path d="M411.9,268.7 l104.6,-39.0" stroke="#0000f8" stroke-width="0.46"/>
<path d="M407.5,256.9 l104.6,-38.0" stroke="#0000f8" stroke-width="0.52"/>
<path d="M407.3,260.5 l104.6,-38.6" stroke="#0000f8" stroke-width="0.64"/>
<path d="M411.4,266.5 l104.6,-38.0" stroke="#0000f8" stroke-width="0.84"/>
<path d="M413.3,271.8 l104.6,-37.8" stroke="#0000f8" stroke-width="0.77"/>
<path d="M404.6,276.8 l104.6,-38.6" stroke="#0000f8" stroke-width="0.71"/>
<path d="M402.0,268.9 l104.6,-38.0" stroke="#0000f8" stroke-width="0.58"/>
<path d="M414.7,274.5 l104.6,-37.8" stroke="#0000f8" stroke-width="0.89"/>
<path d="M408.0,276.8 l104.6,-38.5" stroke="#0000f8" stroke-width="0.50"/>
<path d="M408.9,272.1 l104.6,-38.7" stroke="#0000f8" stroke-width="0.50"/>
<path d="M413.2,270.9 l104.6,-38.0" stroke="#0000f8" stroke-width="0.65"/>
<path d="M412.7,277.9 l104.6,-38.0" stroke="#0000f8" stroke-width="0.75"/>
<path d="M407.4,277.3 l104.6,-37.3" stroke="#0000f8" stroke-width="0.47"/>
<path d="M403.7,274.1 l104.6,-38.2" stroke="#0000f8" stroke-width="0.87"/>
<path d="M401.6,267.7 l104.6,-37.3" stroke="#0000f8" stroke-width="0.52"/>
<path d="M409.2,273.0 l104.6,-38.4" stroke="#0000f8" stroke-width="0.69"/>
<path d="M414.5,273.8 l104.6,-38.6" stroke="#0000f8" stroke-width="0.49"/>
<path d="M411.1,274.5 l104.6,-38.9" stroke="#0000f8" stroke-width="0.80"/>
<path d="M405.6,264.6 l104.6,-37.9" stroke="#0000f8" stroke-width="0.46"/>
<path d="M404.0,257.3 l104.6,-39.0" stroke="#0000f8" stroke-width="0.80"/>
<path d="M413.1,279.1 l104.6,-39.0" stroke="#0000f8" stroke-width="0.61"/>
<path d="M407.5,273.0 l104.6,-38.1" stroke="#0000f8" stroke-width="0.90"/>
<path d="M405.8,271.2 l104.6,-38.3" stroke="#0000f8" stroke-width="0.52"/>
<path d="M404.5,258.9 l104.6,-37.5" stroke="#0000f8" stroke-width="0.56"/>
<path d="M411.7,277.0 l104.6,-39.1" stroke="#0000f8" stroke-width="0.58"/>
<path d="M407.7,275.0 l104.6,-39.0" stroke="#0000f8" stroke-width="0.89"/>
<path d="M411.7,269.1 l104.6,-38.3" stroke="#0000f8" stroke-width="0.59"/>
<path d="M399.3,262.1 l104.6,-38.3" stroke="#0000f8" stroke-width="0.88"/>
<path d="M403.8,278.9 l104.6,-38.1" stroke="#0000f8" stroke-width="0.86"/>
<path d="M404.5,262.4 l100.1,-36.4" stroke="#ffffff" stroke-width="0.8" opacity="0.8"/>
<path d="M406.4,269.5 l100.1,-36.4" stroke="#ffffff" stroke-width="0.5" opacity="0.8"/>
<path d="M408.1,275.4 l100.1,-36.4" stroke="#ffffff" stroke-width="0.5" opacity="0.8"/>
<path d="M493,219 L502,250" stroke="#e0e0ff" stroke-width="0.7" opacity="0.8"/>
</g>
<path d="M518.3,267.7 A39,9 -27 0 0 587.7,232.3" fill="none" stroke="#3c86f4" stroke-width="0.9"/>
<path d="M519.4,270.0 A39,9 -27 0 0 588.8,234.5" fill="none" stroke="#3c86f4" stroke-width="0.8"/>
<path d="M521.3,271.8 A38,8.5 -27 0 0 589.1,237.2" fill="none" stroke="#3c86f4" stroke-width="0.8"/>
<path d="M523.3,273.5 A37,8 -27 0 0 589.3,240.0" fill="none" stroke="#3c86f4" stroke-width="0.7"/>
<g stroke="#ffffff" stroke-width="0.85" stroke-opacity="0.85" fill="none" stroke-linejoin="round" opacity="0.9">
<path d="M521,268 L556.4,340 M590.5,236 L622,300 L556.4,340"/>
<path d="M529.6,287.5 Q533,281 548.6,275.1 Q565,268 582.2,265 Q597,261 609,260.6"/>
<path d="M562,270.7 L580,308.7 M568.7,268.4 L586.6,306.5 M562,270.7 L568.7,268.4"/>
<path d="M539.6,288.6 L548.6,322.2 M532,291 L536,290 M548,292 L553,289 L555,296"/>
<path d="M590,290 L596,287 L600,297 M606,286 L612,283"/>
</g>
<ellipse cx="592" cy="317" rx="27" ry="6" transform="rotate(-29 592 317)" stroke="#ffffff" stroke-width="0.6" fill="none" opacity="0.7"/>
<ellipse cx="583.7" cy="304.7" rx="37.6" ry="8.9" transform="rotate(-28.5 583.7 304.7)" stroke="#f4ee50" stroke-width="1.1" fill="none"/>
<path d="M553.0,331.6 A37.6,8.9 -28.5 0 0 619.0,295.8" fill="none" stroke="#f4ee50" stroke-width="1.1"/>
<path d="M572,310 L596,300 M578,303 L604,296" stroke="#f6f070" stroke-width="0.7" fill="none" opacity="0.8"/>
<ellipse cx="592.7" cy="324.4" rx="29.1" ry="6.9" transform="rotate(-30 592.7 324.4)" stroke="#e83434" stroke-width="1.1" fill="none"/>
<path d="M589,326 h7 M592,320.5 v7" stroke="#e83434" stroke-width="0.9"/>
<path d="M583,313 L590,309 L596,316" stroke="#ffffff" stroke-width="0.6" fill="none" opacity="0.8"/>
<path d="M486.9,328.8 L479.4,312.4" stroke="#3848f0" stroke-width="1.2"/>
<path d="M486.9,328.8 L503.3,319.4" stroke="#f04040" stroke-width="1.1"/>
<path d="M485,324 L486.9,328.8 L490,323.5" stroke="#30d040" stroke-width="1.1" fill="none"/>
<text x="474.2" y="312.6" font-size="9.6" fill="#3848f0" stroke="#3848f0" stroke-width="0.3">Z</text>
<text x="502.4" y="322.6" font-size="9.6" fill="#f04040" stroke="#f04040" stroke-width="0.2">X</text>
<rect x="777.2" y="15.1" width="86" height="30.6" fill="#000"/>
<linearGradient id="lg2" x1="832" y1="0" x2="863" y2="0" gradientUnits="userSpaceOnUse"><stop offset="0" stop-color="#000"/><stop offset="1" stop-color="#9a9a9a"/></linearGradient>
<rect x="832" y="16.2" width="31" height="1.3" fill="url(#lg2)"/>
<rect x="832" y="43.2" width="31" height="1.3" fill="url(#lg2)"/>
<path d="M780.24,38.6 L786.06,21.25 L792.86,21.25 L798.9,34.3 L799.2,21.25 L805.8,21.25 L810.8,32.9 L810.8,21.25 L815.9,21.25 L815.9,38.6 L810.5,38.6 L803.1,25.8 L803.1,38.6 L793.5,38.6 L789.62,26.06 L786.06,38.6 Z" fill="#fff"/>
<text x="816.8" y="39.6" font-size="28.6" font-weight="bold" fill="#ffee00" stroke="#ffee00" stroke-width="0.5" style="font-family:'Liberation Serif',serif" textLength="39" lengthAdjust="spacingAndGlyphs">SYS</text>
<circle cx="858.4" cy="22.3" r="1.6" fill="#eee"/>
<text x="332.6" y="386.8" font-size="11" fill="#111" textLength="312.4" lengthAdjust="spacingAndGlyphs" xml:space="preserve">Particle Traces Colored by Particle Residence Time (s)  (Time=6.2325e-01)</text>
<text x="806.8" y="386.6" font-size="10.4" fill="#111" textLength="49.5" lengthAdjust="spacingAndGlyphs">Jul 05, 2013</text>
<text x="640.8" y="398.2" font-size="10.8" fill="#111" textLength="215.7" lengthAdjust="spacingAndGlyphs">ANSYS FLUENT 12.1 (3d, dp, pbns, RSM, transient)</text>
</svg></body></html>
